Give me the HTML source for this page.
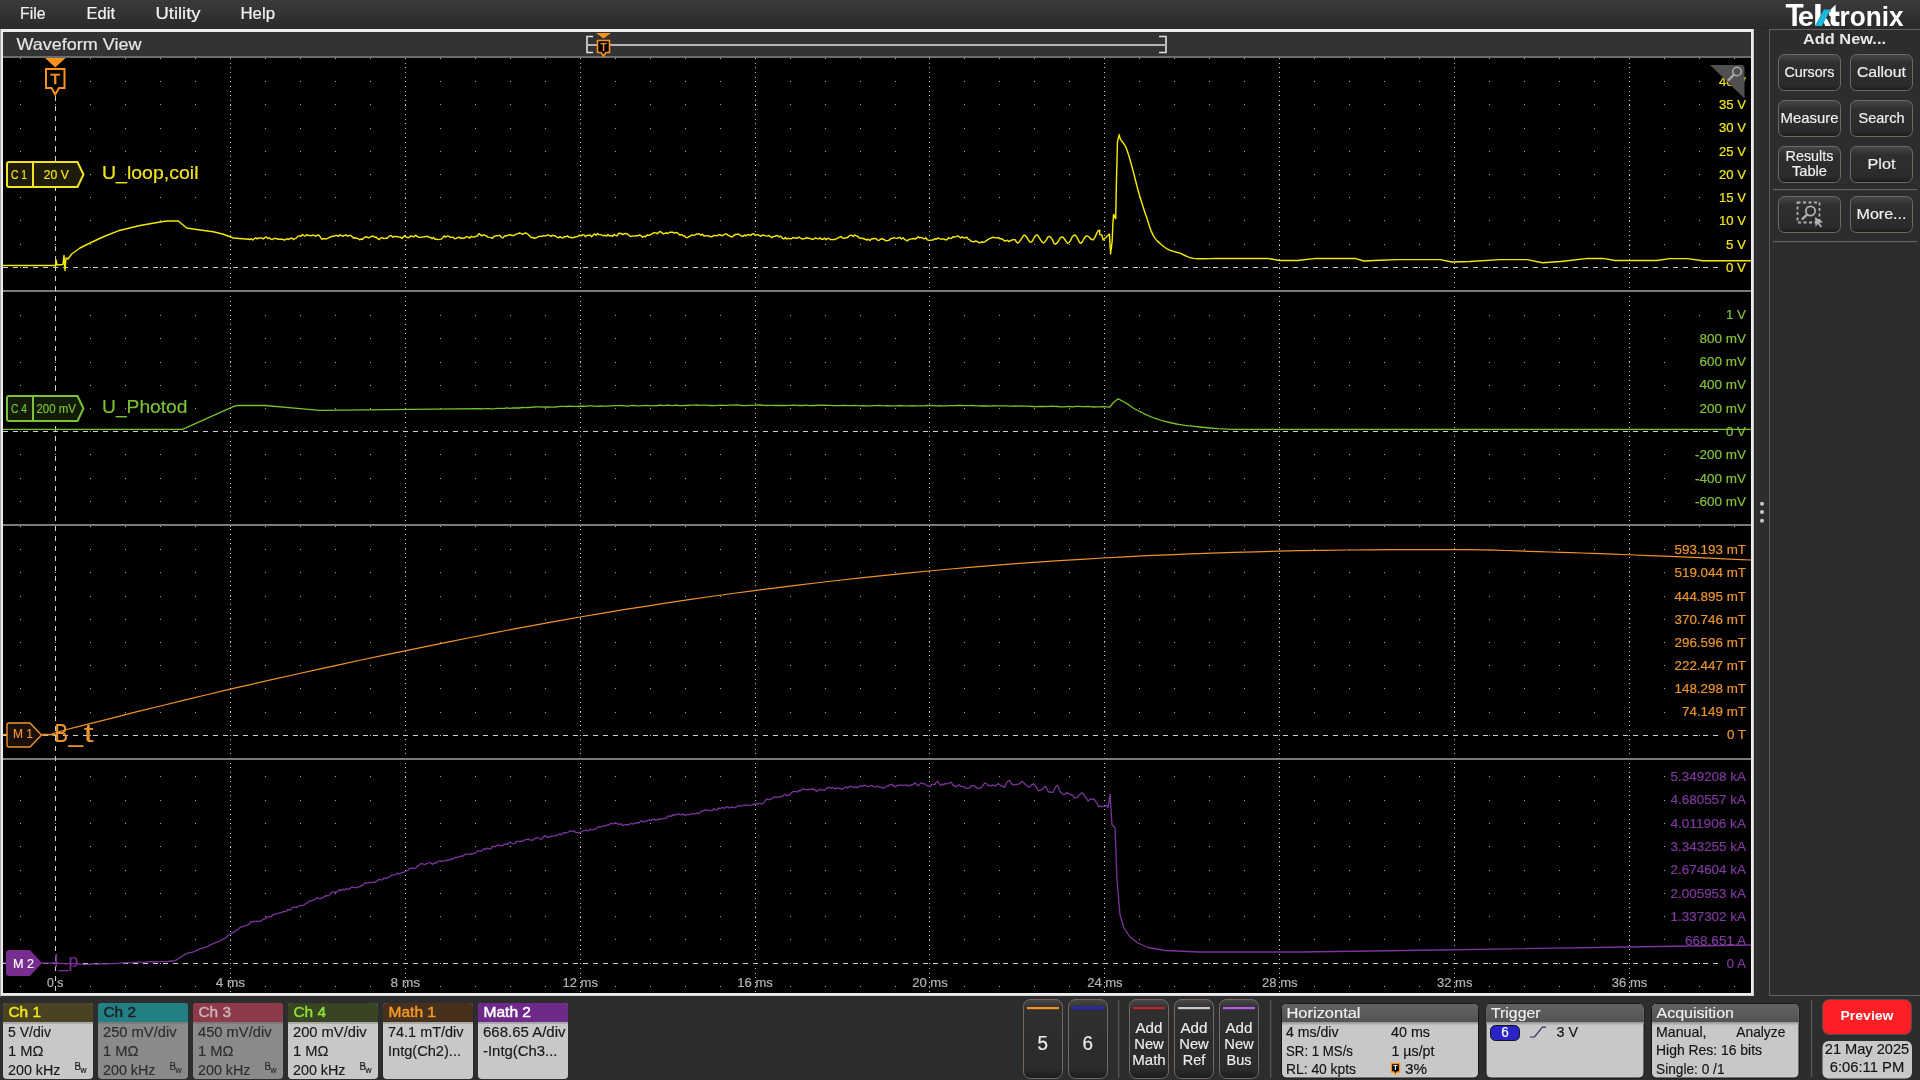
<!DOCTYPE html>
<html><head><meta charset="utf-8"><title>Waveform View</title>
<style>html,body{margin:0;padding:0;background:#2d2d2d;width:1920px;height:1080px;overflow:hidden}svg{display:block;will-change:transform}text{font-family:"Liberation Sans", sans-serif}</style>
</head><body>
<svg width="1920" height="1080" viewBox="0 0 1920 1080" font-family='"Liberation Sans", sans-serif'><rect x="0" y="0" width="1920" height="1080" fill="#2d2d2d"/>
<defs><linearGradient id="mb" x1="0" y1="0" x2="0" y2="1"><stop offset="0" stop-color="#3a3a3a"/><stop offset="1" stop-color="#2a2a2a"/></linearGradient><linearGradient id="btn" x1="0" y1="0" x2="0" y2="1"><stop offset="0" stop-color="#454547"/><stop offset="0.25" stop-color="#2f2f2f"/><stop offset="0.85" stop-color="#2b2b2b"/><stop offset="1" stop-color="#1c1c1c"/></linearGradient><linearGradient id="tbtn" x1="0" y1="0" x2="0" y2="1"><stop offset="0" stop-color="#48484a"/><stop offset="0.12" stop-color="#2f2f2f"/><stop offset="0.88" stop-color="#2b2b2b"/><stop offset="1" stop-color="#1c1c1c"/></linearGradient><linearGradient id="hdr" x1="0" y1="0" x2="0" y2="1"><stop offset="0" stop-color="#626264"/><stop offset="1" stop-color="#535355"/></linearGradient></defs>
<rect x="0" y="0" width="1920" height="29" fill="url(#mb)"/>
<text x="20" y="19" font-size="16" fill="#f2f2f2" text-anchor="start" font-weight="normal" textLength="25.5" lengthAdjust="spacingAndGlyphs" stroke="#f2f2f2" stroke-width="0.18">File</text>
<text x="86.5" y="19" font-size="16" fill="#f2f2f2" text-anchor="start" font-weight="normal" textLength="28.5" lengthAdjust="spacingAndGlyphs" stroke="#f2f2f2" stroke-width="0.18">Edit</text>
<text x="155.5" y="19" font-size="16" fill="#f2f2f2" text-anchor="start" font-weight="normal" textLength="45" lengthAdjust="spacingAndGlyphs" stroke="#f2f2f2" stroke-width="0.18">Utility</text>
<text x="240.5" y="19" font-size="16" fill="#f2f2f2" text-anchor="start" font-weight="normal" textLength="34.5" lengthAdjust="spacingAndGlyphs" stroke="#f2f2f2" stroke-width="0.18">Help</text>
<rect x="0" y="29" width="1754" height="967" fill="#ececec"/>
<rect x="1753" y="29" width="1" height="967" fill="#c4c4c8"/>
<rect x="0" y="995" width="1754" height="1" fill="#d4d4d4"/>
<rect x="0" y="29" width="1" height="967.5" fill="#a8a8a8"/>
<rect x="3" y="32" width="1748" height="24" fill="#333333"/>
<rect x="3" y="56" width="1748" height="2" fill="#6b6d70"/>
<rect x="3" y="58" width="1748" height="935" fill="#000000"/>
<text x="16.5" y="50" font-size="16.5" fill="#e6e6e6" text-anchor="start" font-weight="normal" textLength="125" lengthAdjust="spacingAndGlyphs" stroke="#e6e6e6" stroke-width="0.18">Waveform View</text>
<path d="M593 36.5 H587 V52.5 H593" fill="none" stroke="#e0e0e0" stroke-width="1.6"/>
<path d="M1159 36.5 H1166 V52.5 H1159" fill="none" stroke="#e0e0e0" stroke-width="1.6"/>
<rect x="588" y="44" width="578" height="2" fill="#b4b4b4"/>
<path d="M596 33 H611 L603.5 38.5 Z" fill="#f7921e"/>
<path d="M597.5 40.5 H609.5 V52.5 H606 L603.5 56 L601 52.5 H597.5 Z" fill="#000" stroke="#f7921e" stroke-width="1.6"/>
<text x="603.5" y="50.5" font-size="10" fill="#f7921e" text-anchor="middle" font-weight="bold">T</text>
<path d="M20 58h1v1h-1zM55 58h1v1h-1zM90 58h1v1h-1zM125 58h1v1h-1zM160 58h1v1h-1zM195 58h1v1h-1zM230 58h1v1h-1zM265 58h1v1h-1zM300 58h1v1h-1zM335 58h1v1h-1zM370 58h1v1h-1zM405 58h1v1h-1zM440 58h1v1h-1zM475 58h1v1h-1zM510 58h1v1h-1zM545 58h1v1h-1zM580 58h1v1h-1zM615 58h1v1h-1zM650 58h1v1h-1zM685 58h1v1h-1zM720 58h1v1h-1zM755 58h1v1h-1zM790 58h1v1h-1zM825 58h1v1h-1zM860 58h1v1h-1zM895 58h1v1h-1zM929 58h1v1h-1zM964 58h1v1h-1zM999 58h1v1h-1zM1034 58h1v1h-1zM1069 58h1v1h-1zM1104 58h1v1h-1zM1139 58h1v1h-1zM1174 58h1v1h-1zM1209 58h1v1h-1zM1244 58h1v1h-1zM1279 58h1v1h-1zM1314 58h1v1h-1zM1349 58h1v1h-1zM1384 58h1v1h-1zM1419 58h1v1h-1zM1454 58h1v1h-1zM1489 58h1v1h-1zM1524 58h1v1h-1zM1559 58h1v1h-1zM1594 58h1v1h-1zM1629 58h1v1h-1zM1664 58h1v1h-1zM1699 58h1v1h-1zM1734 58h1v1h-1zM20 81h1v1h-1zM55 81h1v1h-1zM90 81h1v1h-1zM125 81h1v1h-1zM160 81h1v1h-1zM195 81h1v1h-1zM230 81h1v1h-1zM265 81h1v1h-1zM300 81h1v1h-1zM335 81h1v1h-1zM370 81h1v1h-1zM405 81h1v1h-1zM440 81h1v1h-1zM475 81h1v1h-1zM510 81h1v1h-1zM545 81h1v1h-1zM580 81h1v1h-1zM615 81h1v1h-1zM650 81h1v1h-1zM685 81h1v1h-1zM720 81h1v1h-1zM755 81h1v1h-1zM790 81h1v1h-1zM825 81h1v1h-1zM860 81h1v1h-1zM895 81h1v1h-1zM929 81h1v1h-1zM964 81h1v1h-1zM999 81h1v1h-1zM1034 81h1v1h-1zM1069 81h1v1h-1zM1104 81h1v1h-1zM1139 81h1v1h-1zM1174 81h1v1h-1zM1209 81h1v1h-1zM1244 81h1v1h-1zM1279 81h1v1h-1zM1314 81h1v1h-1zM1349 81h1v1h-1zM1384 81h1v1h-1zM1419 81h1v1h-1zM1454 81h1v1h-1zM1489 81h1v1h-1zM1524 81h1v1h-1zM1559 81h1v1h-1zM1594 81h1v1h-1zM1629 81h1v1h-1zM1664 81h1v1h-1zM1699 81h1v1h-1zM20 104h1v1h-1zM55 104h1v1h-1zM90 104h1v1h-1zM125 104h1v1h-1zM160 104h1v1h-1zM195 104h1v1h-1zM230 104h1v1h-1zM265 104h1v1h-1zM300 104h1v1h-1zM335 104h1v1h-1zM370 104h1v1h-1zM405 104h1v1h-1zM440 104h1v1h-1zM475 104h1v1h-1zM510 104h1v1h-1zM545 104h1v1h-1zM580 104h1v1h-1zM615 104h1v1h-1zM650 104h1v1h-1zM685 104h1v1h-1zM720 104h1v1h-1zM755 104h1v1h-1zM790 104h1v1h-1zM825 104h1v1h-1zM860 104h1v1h-1zM895 104h1v1h-1zM929 104h1v1h-1zM964 104h1v1h-1zM999 104h1v1h-1zM1034 104h1v1h-1zM1069 104h1v1h-1zM1104 104h1v1h-1zM1139 104h1v1h-1zM1174 104h1v1h-1zM1209 104h1v1h-1zM1244 104h1v1h-1zM1279 104h1v1h-1zM1314 104h1v1h-1zM1349 104h1v1h-1zM1384 104h1v1h-1zM1419 104h1v1h-1zM1454 104h1v1h-1zM1489 104h1v1h-1zM1524 104h1v1h-1zM1559 104h1v1h-1zM1594 104h1v1h-1zM1629 104h1v1h-1zM1664 104h1v1h-1zM1699 104h1v1h-1zM20 128h1v1h-1zM55 128h1v1h-1zM90 128h1v1h-1zM125 128h1v1h-1zM160 128h1v1h-1zM195 128h1v1h-1zM230 128h1v1h-1zM265 128h1v1h-1zM300 128h1v1h-1zM335 128h1v1h-1zM370 128h1v1h-1zM405 128h1v1h-1zM440 128h1v1h-1zM475 128h1v1h-1zM510 128h1v1h-1zM545 128h1v1h-1zM580 128h1v1h-1zM615 128h1v1h-1zM650 128h1v1h-1zM685 128h1v1h-1zM720 128h1v1h-1zM755 128h1v1h-1zM790 128h1v1h-1zM825 128h1v1h-1zM860 128h1v1h-1zM895 128h1v1h-1zM929 128h1v1h-1zM964 128h1v1h-1zM999 128h1v1h-1zM1034 128h1v1h-1zM1069 128h1v1h-1zM1104 128h1v1h-1zM1139 128h1v1h-1zM1174 128h1v1h-1zM1209 128h1v1h-1zM1244 128h1v1h-1zM1279 128h1v1h-1zM1314 128h1v1h-1zM1349 128h1v1h-1zM1384 128h1v1h-1zM1419 128h1v1h-1zM1454 128h1v1h-1zM1489 128h1v1h-1zM1524 128h1v1h-1zM1559 128h1v1h-1zM1594 128h1v1h-1zM1629 128h1v1h-1zM1664 128h1v1h-1zM1699 128h1v1h-1zM20 151h1v1h-1zM55 151h1v1h-1zM90 151h1v1h-1zM125 151h1v1h-1zM160 151h1v1h-1zM195 151h1v1h-1zM230 151h1v1h-1zM265 151h1v1h-1zM300 151h1v1h-1zM335 151h1v1h-1zM370 151h1v1h-1zM405 151h1v1h-1zM440 151h1v1h-1zM475 151h1v1h-1zM510 151h1v1h-1zM545 151h1v1h-1zM580 151h1v1h-1zM615 151h1v1h-1zM650 151h1v1h-1zM685 151h1v1h-1zM720 151h1v1h-1zM755 151h1v1h-1zM790 151h1v1h-1zM825 151h1v1h-1zM860 151h1v1h-1zM895 151h1v1h-1zM929 151h1v1h-1zM964 151h1v1h-1zM999 151h1v1h-1zM1034 151h1v1h-1zM1069 151h1v1h-1zM1104 151h1v1h-1zM1139 151h1v1h-1zM1174 151h1v1h-1zM1209 151h1v1h-1zM1244 151h1v1h-1zM1279 151h1v1h-1zM1314 151h1v1h-1zM1349 151h1v1h-1zM1384 151h1v1h-1zM1419 151h1v1h-1zM1454 151h1v1h-1zM1489 151h1v1h-1zM1524 151h1v1h-1zM1559 151h1v1h-1zM1594 151h1v1h-1zM1629 151h1v1h-1zM1664 151h1v1h-1zM1699 151h1v1h-1zM20 174h1v1h-1zM55 174h1v1h-1zM90 174h1v1h-1zM125 174h1v1h-1zM160 174h1v1h-1zM195 174h1v1h-1zM230 174h1v1h-1zM265 174h1v1h-1zM300 174h1v1h-1zM335 174h1v1h-1zM370 174h1v1h-1zM405 174h1v1h-1zM440 174h1v1h-1zM475 174h1v1h-1zM510 174h1v1h-1zM545 174h1v1h-1zM580 174h1v1h-1zM615 174h1v1h-1zM650 174h1v1h-1zM685 174h1v1h-1zM720 174h1v1h-1zM755 174h1v1h-1zM790 174h1v1h-1zM825 174h1v1h-1zM860 174h1v1h-1zM895 174h1v1h-1zM929 174h1v1h-1zM964 174h1v1h-1zM999 174h1v1h-1zM1034 174h1v1h-1zM1069 174h1v1h-1zM1104 174h1v1h-1zM1139 174h1v1h-1zM1174 174h1v1h-1zM1209 174h1v1h-1zM1244 174h1v1h-1zM1279 174h1v1h-1zM1314 174h1v1h-1zM1349 174h1v1h-1zM1384 174h1v1h-1zM1419 174h1v1h-1zM1454 174h1v1h-1zM1489 174h1v1h-1zM1524 174h1v1h-1zM1559 174h1v1h-1zM1594 174h1v1h-1zM1629 174h1v1h-1zM1664 174h1v1h-1zM1699 174h1v1h-1zM20 197h1v1h-1zM55 197h1v1h-1zM90 197h1v1h-1zM125 197h1v1h-1zM160 197h1v1h-1zM195 197h1v1h-1zM230 197h1v1h-1zM265 197h1v1h-1zM300 197h1v1h-1zM335 197h1v1h-1zM370 197h1v1h-1zM405 197h1v1h-1zM440 197h1v1h-1zM475 197h1v1h-1zM510 197h1v1h-1zM545 197h1v1h-1zM580 197h1v1h-1zM615 197h1v1h-1zM650 197h1v1h-1zM685 197h1v1h-1zM720 197h1v1h-1zM755 197h1v1h-1zM790 197h1v1h-1zM825 197h1v1h-1zM860 197h1v1h-1zM895 197h1v1h-1zM929 197h1v1h-1zM964 197h1v1h-1zM999 197h1v1h-1zM1034 197h1v1h-1zM1069 197h1v1h-1zM1104 197h1v1h-1zM1139 197h1v1h-1zM1174 197h1v1h-1zM1209 197h1v1h-1zM1244 197h1v1h-1zM1279 197h1v1h-1zM1314 197h1v1h-1zM1349 197h1v1h-1zM1384 197h1v1h-1zM1419 197h1v1h-1zM1454 197h1v1h-1zM1489 197h1v1h-1zM1524 197h1v1h-1zM1559 197h1v1h-1zM1594 197h1v1h-1zM1629 197h1v1h-1zM1664 197h1v1h-1zM1699 197h1v1h-1zM20 220h1v1h-1zM55 220h1v1h-1zM90 220h1v1h-1zM125 220h1v1h-1zM160 220h1v1h-1zM195 220h1v1h-1zM230 220h1v1h-1zM265 220h1v1h-1zM300 220h1v1h-1zM335 220h1v1h-1zM370 220h1v1h-1zM405 220h1v1h-1zM440 220h1v1h-1zM475 220h1v1h-1zM510 220h1v1h-1zM545 220h1v1h-1zM580 220h1v1h-1zM615 220h1v1h-1zM650 220h1v1h-1zM685 220h1v1h-1zM720 220h1v1h-1zM755 220h1v1h-1zM790 220h1v1h-1zM825 220h1v1h-1zM860 220h1v1h-1zM895 220h1v1h-1zM929 220h1v1h-1zM964 220h1v1h-1zM999 220h1v1h-1zM1034 220h1v1h-1zM1069 220h1v1h-1zM1104 220h1v1h-1zM1139 220h1v1h-1zM1174 220h1v1h-1zM1209 220h1v1h-1zM1244 220h1v1h-1zM1279 220h1v1h-1zM1314 220h1v1h-1zM1349 220h1v1h-1zM1384 220h1v1h-1zM1419 220h1v1h-1zM1454 220h1v1h-1zM1489 220h1v1h-1zM1524 220h1v1h-1zM1559 220h1v1h-1zM1594 220h1v1h-1zM1629 220h1v1h-1zM1664 220h1v1h-1zM1699 220h1v1h-1zM20 244h1v1h-1zM55 244h1v1h-1zM90 244h1v1h-1zM125 244h1v1h-1zM160 244h1v1h-1zM195 244h1v1h-1zM230 244h1v1h-1zM265 244h1v1h-1zM300 244h1v1h-1zM335 244h1v1h-1zM370 244h1v1h-1zM405 244h1v1h-1zM440 244h1v1h-1zM475 244h1v1h-1zM510 244h1v1h-1zM545 244h1v1h-1zM580 244h1v1h-1zM615 244h1v1h-1zM650 244h1v1h-1zM685 244h1v1h-1zM720 244h1v1h-1zM755 244h1v1h-1zM790 244h1v1h-1zM825 244h1v1h-1zM860 244h1v1h-1zM895 244h1v1h-1zM929 244h1v1h-1zM964 244h1v1h-1zM999 244h1v1h-1zM1034 244h1v1h-1zM1069 244h1v1h-1zM1104 244h1v1h-1zM1139 244h1v1h-1zM1174 244h1v1h-1zM1209 244h1v1h-1zM1244 244h1v1h-1zM1279 244h1v1h-1zM1314 244h1v1h-1zM1349 244h1v1h-1zM1384 244h1v1h-1zM1419 244h1v1h-1zM1454 244h1v1h-1zM1489 244h1v1h-1zM1524 244h1v1h-1zM1559 244h1v1h-1zM1594 244h1v1h-1zM1629 244h1v1h-1zM1664 244h1v1h-1zM1699 244h1v1h-1zM20 267h1v1h-1zM55 267h1v1h-1zM90 267h1v1h-1zM125 267h1v1h-1zM160 267h1v1h-1zM195 267h1v1h-1zM230 267h1v1h-1zM265 267h1v1h-1zM300 267h1v1h-1zM335 267h1v1h-1zM370 267h1v1h-1zM405 267h1v1h-1zM440 267h1v1h-1zM475 267h1v1h-1zM510 267h1v1h-1zM545 267h1v1h-1zM580 267h1v1h-1zM615 267h1v1h-1zM650 267h1v1h-1zM685 267h1v1h-1zM720 267h1v1h-1zM755 267h1v1h-1zM790 267h1v1h-1zM825 267h1v1h-1zM860 267h1v1h-1zM895 267h1v1h-1zM929 267h1v1h-1zM964 267h1v1h-1zM999 267h1v1h-1zM1034 267h1v1h-1zM1069 267h1v1h-1zM1104 267h1v1h-1zM1139 267h1v1h-1zM1174 267h1v1h-1zM1209 267h1v1h-1zM1244 267h1v1h-1zM1279 267h1v1h-1zM1314 267h1v1h-1zM1349 267h1v1h-1zM1384 267h1v1h-1zM1419 267h1v1h-1zM1454 267h1v1h-1zM1489 267h1v1h-1zM1524 267h1v1h-1zM1559 267h1v1h-1zM1594 267h1v1h-1zM1629 267h1v1h-1zM1664 267h1v1h-1zM1699 267h1v1h-1zM20 291h1v1h-1zM55 291h1v1h-1zM90 291h1v1h-1zM125 291h1v1h-1zM160 291h1v1h-1zM195 291h1v1h-1zM230 291h1v1h-1zM265 291h1v1h-1zM300 291h1v1h-1zM335 291h1v1h-1zM370 291h1v1h-1zM405 291h1v1h-1zM440 291h1v1h-1zM475 291h1v1h-1zM510 291h1v1h-1zM545 291h1v1h-1zM580 291h1v1h-1zM615 291h1v1h-1zM650 291h1v1h-1zM685 291h1v1h-1zM720 291h1v1h-1zM755 291h1v1h-1zM790 291h1v1h-1zM825 291h1v1h-1zM860 291h1v1h-1zM895 291h1v1h-1zM929 291h1v1h-1zM964 291h1v1h-1zM999 291h1v1h-1zM1034 291h1v1h-1zM1069 291h1v1h-1zM1104 291h1v1h-1zM1139 291h1v1h-1zM1174 291h1v1h-1zM1209 291h1v1h-1zM1244 291h1v1h-1zM1279 291h1v1h-1zM1314 291h1v1h-1zM1349 291h1v1h-1zM1384 291h1v1h-1zM1419 291h1v1h-1zM1454 291h1v1h-1zM1489 291h1v1h-1zM1524 291h1v1h-1zM1559 291h1v1h-1zM1594 291h1v1h-1zM1629 291h1v1h-1zM1664 291h1v1h-1zM1699 291h1v1h-1zM1734 291h1v1h-1zM20 315h1v1h-1zM55 315h1v1h-1zM90 315h1v1h-1zM125 315h1v1h-1zM160 315h1v1h-1zM195 315h1v1h-1zM230 315h1v1h-1zM265 315h1v1h-1zM300 315h1v1h-1zM335 315h1v1h-1zM370 315h1v1h-1zM405 315h1v1h-1zM440 315h1v1h-1zM475 315h1v1h-1zM510 315h1v1h-1zM545 315h1v1h-1zM580 315h1v1h-1zM615 315h1v1h-1zM650 315h1v1h-1zM685 315h1v1h-1zM720 315h1v1h-1zM755 315h1v1h-1zM790 315h1v1h-1zM825 315h1v1h-1zM860 315h1v1h-1zM895 315h1v1h-1zM929 315h1v1h-1zM964 315h1v1h-1zM999 315h1v1h-1zM1034 315h1v1h-1zM1069 315h1v1h-1zM1104 315h1v1h-1zM1139 315h1v1h-1zM1174 315h1v1h-1zM1209 315h1v1h-1zM1244 315h1v1h-1zM1279 315h1v1h-1zM1314 315h1v1h-1zM1349 315h1v1h-1zM1384 315h1v1h-1zM1419 315h1v1h-1zM1454 315h1v1h-1zM1489 315h1v1h-1zM1524 315h1v1h-1zM1559 315h1v1h-1zM1594 315h1v1h-1zM1629 315h1v1h-1zM1664 315h1v1h-1zM1699 315h1v1h-1zM20 338h1v1h-1zM55 338h1v1h-1zM90 338h1v1h-1zM125 338h1v1h-1zM160 338h1v1h-1zM195 338h1v1h-1zM230 338h1v1h-1zM265 338h1v1h-1zM300 338h1v1h-1zM335 338h1v1h-1zM370 338h1v1h-1zM405 338h1v1h-1zM440 338h1v1h-1zM475 338h1v1h-1zM510 338h1v1h-1zM545 338h1v1h-1zM580 338h1v1h-1zM615 338h1v1h-1zM650 338h1v1h-1zM685 338h1v1h-1zM720 338h1v1h-1zM755 338h1v1h-1zM790 338h1v1h-1zM825 338h1v1h-1zM860 338h1v1h-1zM895 338h1v1h-1zM929 338h1v1h-1zM964 338h1v1h-1zM999 338h1v1h-1zM1034 338h1v1h-1zM1069 338h1v1h-1zM1104 338h1v1h-1zM1139 338h1v1h-1zM1174 338h1v1h-1zM1209 338h1v1h-1zM1244 338h1v1h-1zM1279 338h1v1h-1zM1314 338h1v1h-1zM1349 338h1v1h-1zM1384 338h1v1h-1zM1419 338h1v1h-1zM1454 338h1v1h-1zM1489 338h1v1h-1zM1524 338h1v1h-1zM1559 338h1v1h-1zM1594 338h1v1h-1zM1629 338h1v1h-1zM1664 338h1v1h-1zM20 362h1v1h-1zM55 362h1v1h-1zM90 362h1v1h-1zM125 362h1v1h-1zM160 362h1v1h-1zM195 362h1v1h-1zM230 362h1v1h-1zM265 362h1v1h-1zM300 362h1v1h-1zM335 362h1v1h-1zM370 362h1v1h-1zM405 362h1v1h-1zM440 362h1v1h-1zM475 362h1v1h-1zM510 362h1v1h-1zM545 362h1v1h-1zM580 362h1v1h-1zM615 362h1v1h-1zM650 362h1v1h-1zM685 362h1v1h-1zM720 362h1v1h-1zM755 362h1v1h-1zM790 362h1v1h-1zM825 362h1v1h-1zM860 362h1v1h-1zM895 362h1v1h-1zM929 362h1v1h-1zM964 362h1v1h-1zM999 362h1v1h-1zM1034 362h1v1h-1zM1069 362h1v1h-1zM1104 362h1v1h-1zM1139 362h1v1h-1zM1174 362h1v1h-1zM1209 362h1v1h-1zM1244 362h1v1h-1zM1279 362h1v1h-1zM1314 362h1v1h-1zM1349 362h1v1h-1zM1384 362h1v1h-1zM1419 362h1v1h-1zM1454 362h1v1h-1zM1489 362h1v1h-1zM1524 362h1v1h-1zM1559 362h1v1h-1zM1594 362h1v1h-1zM1629 362h1v1h-1zM1664 362h1v1h-1zM20 385h1v1h-1zM55 385h1v1h-1zM90 385h1v1h-1zM125 385h1v1h-1zM160 385h1v1h-1zM195 385h1v1h-1zM230 385h1v1h-1zM265 385h1v1h-1zM300 385h1v1h-1zM335 385h1v1h-1zM370 385h1v1h-1zM405 385h1v1h-1zM440 385h1v1h-1zM475 385h1v1h-1zM510 385h1v1h-1zM545 385h1v1h-1zM580 385h1v1h-1zM615 385h1v1h-1zM650 385h1v1h-1zM685 385h1v1h-1zM720 385h1v1h-1zM755 385h1v1h-1zM790 385h1v1h-1zM825 385h1v1h-1zM860 385h1v1h-1zM895 385h1v1h-1zM929 385h1v1h-1zM964 385h1v1h-1zM999 385h1v1h-1zM1034 385h1v1h-1zM1069 385h1v1h-1zM1104 385h1v1h-1zM1139 385h1v1h-1zM1174 385h1v1h-1zM1209 385h1v1h-1zM1244 385h1v1h-1zM1279 385h1v1h-1zM1314 385h1v1h-1zM1349 385h1v1h-1zM1384 385h1v1h-1zM1419 385h1v1h-1zM1454 385h1v1h-1zM1489 385h1v1h-1zM1524 385h1v1h-1zM1559 385h1v1h-1zM1594 385h1v1h-1zM1629 385h1v1h-1zM1664 385h1v1h-1zM20 408h1v1h-1zM55 408h1v1h-1zM90 408h1v1h-1zM125 408h1v1h-1zM160 408h1v1h-1zM195 408h1v1h-1zM230 408h1v1h-1zM265 408h1v1h-1zM300 408h1v1h-1zM335 408h1v1h-1zM370 408h1v1h-1zM405 408h1v1h-1zM440 408h1v1h-1zM475 408h1v1h-1zM510 408h1v1h-1zM545 408h1v1h-1zM580 408h1v1h-1zM615 408h1v1h-1zM650 408h1v1h-1zM685 408h1v1h-1zM720 408h1v1h-1zM755 408h1v1h-1zM790 408h1v1h-1zM825 408h1v1h-1zM860 408h1v1h-1zM895 408h1v1h-1zM929 408h1v1h-1zM964 408h1v1h-1zM999 408h1v1h-1zM1034 408h1v1h-1zM1069 408h1v1h-1zM1104 408h1v1h-1zM1139 408h1v1h-1zM1174 408h1v1h-1zM1209 408h1v1h-1zM1244 408h1v1h-1zM1279 408h1v1h-1zM1314 408h1v1h-1zM1349 408h1v1h-1zM1384 408h1v1h-1zM1419 408h1v1h-1zM1454 408h1v1h-1zM1489 408h1v1h-1zM1524 408h1v1h-1zM1559 408h1v1h-1zM1594 408h1v1h-1zM1629 408h1v1h-1zM1664 408h1v1h-1zM20 431h1v1h-1zM55 431h1v1h-1zM90 431h1v1h-1zM125 431h1v1h-1zM160 431h1v1h-1zM195 431h1v1h-1zM230 431h1v1h-1zM265 431h1v1h-1zM300 431h1v1h-1zM335 431h1v1h-1zM370 431h1v1h-1zM405 431h1v1h-1zM440 431h1v1h-1zM475 431h1v1h-1zM510 431h1v1h-1zM545 431h1v1h-1zM580 431h1v1h-1zM615 431h1v1h-1zM650 431h1v1h-1zM685 431h1v1h-1zM720 431h1v1h-1zM755 431h1v1h-1zM790 431h1v1h-1zM825 431h1v1h-1zM860 431h1v1h-1zM895 431h1v1h-1zM929 431h1v1h-1zM964 431h1v1h-1zM999 431h1v1h-1zM1034 431h1v1h-1zM1069 431h1v1h-1zM1104 431h1v1h-1zM1139 431h1v1h-1zM1174 431h1v1h-1zM1209 431h1v1h-1zM1244 431h1v1h-1zM1279 431h1v1h-1zM1314 431h1v1h-1zM1349 431h1v1h-1zM1384 431h1v1h-1zM1419 431h1v1h-1zM1454 431h1v1h-1zM1489 431h1v1h-1zM1524 431h1v1h-1zM1559 431h1v1h-1zM1594 431h1v1h-1zM1629 431h1v1h-1zM1664 431h1v1h-1zM1699 431h1v1h-1zM20 454h1v1h-1zM55 454h1v1h-1zM90 454h1v1h-1zM125 454h1v1h-1zM160 454h1v1h-1zM195 454h1v1h-1zM230 454h1v1h-1zM265 454h1v1h-1zM300 454h1v1h-1zM335 454h1v1h-1zM370 454h1v1h-1zM405 454h1v1h-1zM440 454h1v1h-1zM475 454h1v1h-1zM510 454h1v1h-1zM545 454h1v1h-1zM580 454h1v1h-1zM615 454h1v1h-1zM650 454h1v1h-1zM685 454h1v1h-1zM720 454h1v1h-1zM755 454h1v1h-1zM790 454h1v1h-1zM825 454h1v1h-1zM860 454h1v1h-1zM895 454h1v1h-1zM929 454h1v1h-1zM964 454h1v1h-1zM999 454h1v1h-1zM1034 454h1v1h-1zM1069 454h1v1h-1zM1104 454h1v1h-1zM1139 454h1v1h-1zM1174 454h1v1h-1zM1209 454h1v1h-1zM1244 454h1v1h-1zM1279 454h1v1h-1zM1314 454h1v1h-1zM1349 454h1v1h-1zM1384 454h1v1h-1zM1419 454h1v1h-1zM1454 454h1v1h-1zM1489 454h1v1h-1zM1524 454h1v1h-1zM1559 454h1v1h-1zM1594 454h1v1h-1zM1629 454h1v1h-1zM1664 454h1v1h-1zM20 478h1v1h-1zM55 478h1v1h-1zM90 478h1v1h-1zM125 478h1v1h-1zM160 478h1v1h-1zM195 478h1v1h-1zM230 478h1v1h-1zM265 478h1v1h-1zM300 478h1v1h-1zM335 478h1v1h-1zM370 478h1v1h-1zM405 478h1v1h-1zM440 478h1v1h-1zM475 478h1v1h-1zM510 478h1v1h-1zM545 478h1v1h-1zM580 478h1v1h-1zM615 478h1v1h-1zM650 478h1v1h-1zM685 478h1v1h-1zM720 478h1v1h-1zM755 478h1v1h-1zM790 478h1v1h-1zM825 478h1v1h-1zM860 478h1v1h-1zM895 478h1v1h-1zM929 478h1v1h-1zM964 478h1v1h-1zM999 478h1v1h-1zM1034 478h1v1h-1zM1069 478h1v1h-1zM1104 478h1v1h-1zM1139 478h1v1h-1zM1174 478h1v1h-1zM1209 478h1v1h-1zM1244 478h1v1h-1zM1279 478h1v1h-1zM1314 478h1v1h-1zM1349 478h1v1h-1zM1384 478h1v1h-1zM1419 478h1v1h-1zM1454 478h1v1h-1zM1489 478h1v1h-1zM1524 478h1v1h-1zM1559 478h1v1h-1zM1594 478h1v1h-1zM1629 478h1v1h-1zM1664 478h1v1h-1zM20 501h1v1h-1zM55 501h1v1h-1zM90 501h1v1h-1zM125 501h1v1h-1zM160 501h1v1h-1zM195 501h1v1h-1zM230 501h1v1h-1zM265 501h1v1h-1zM300 501h1v1h-1zM335 501h1v1h-1zM370 501h1v1h-1zM405 501h1v1h-1zM440 501h1v1h-1zM475 501h1v1h-1zM510 501h1v1h-1zM545 501h1v1h-1zM580 501h1v1h-1zM615 501h1v1h-1zM650 501h1v1h-1zM685 501h1v1h-1zM720 501h1v1h-1zM755 501h1v1h-1zM790 501h1v1h-1zM825 501h1v1h-1zM860 501h1v1h-1zM895 501h1v1h-1zM929 501h1v1h-1zM964 501h1v1h-1zM999 501h1v1h-1zM1034 501h1v1h-1zM1069 501h1v1h-1zM1104 501h1v1h-1zM1139 501h1v1h-1zM1174 501h1v1h-1zM1209 501h1v1h-1zM1244 501h1v1h-1zM1279 501h1v1h-1zM1314 501h1v1h-1zM1349 501h1v1h-1zM1384 501h1v1h-1zM1419 501h1v1h-1zM1454 501h1v1h-1zM1489 501h1v1h-1zM1524 501h1v1h-1zM1559 501h1v1h-1zM1594 501h1v1h-1zM1629 501h1v1h-1zM1664 501h1v1h-1zM20 526h1v1h-1zM55 526h1v1h-1zM90 526h1v1h-1zM125 526h1v1h-1zM160 526h1v1h-1zM195 526h1v1h-1zM230 526h1v1h-1zM265 526h1v1h-1zM300 526h1v1h-1zM335 526h1v1h-1zM370 526h1v1h-1zM405 526h1v1h-1zM440 526h1v1h-1zM475 526h1v1h-1zM510 526h1v1h-1zM545 526h1v1h-1zM580 526h1v1h-1zM615 526h1v1h-1zM650 526h1v1h-1zM685 526h1v1h-1zM720 526h1v1h-1zM755 526h1v1h-1zM790 526h1v1h-1zM825 526h1v1h-1zM860 526h1v1h-1zM895 526h1v1h-1zM929 526h1v1h-1zM964 526h1v1h-1zM999 526h1v1h-1zM1034 526h1v1h-1zM1069 526h1v1h-1zM1104 526h1v1h-1zM1139 526h1v1h-1zM1174 526h1v1h-1zM1209 526h1v1h-1zM1244 526h1v1h-1zM1279 526h1v1h-1zM1314 526h1v1h-1zM1349 526h1v1h-1zM1384 526h1v1h-1zM1419 526h1v1h-1zM1454 526h1v1h-1zM1489 526h1v1h-1zM1524 526h1v1h-1zM1559 526h1v1h-1zM1594 526h1v1h-1zM1629 526h1v1h-1zM1664 526h1v1h-1zM1699 526h1v1h-1zM1734 526h1v1h-1zM20 549h1v1h-1zM55 549h1v1h-1zM90 549h1v1h-1zM125 549h1v1h-1zM160 549h1v1h-1zM195 549h1v1h-1zM230 549h1v1h-1zM265 549h1v1h-1zM300 549h1v1h-1zM335 549h1v1h-1zM370 549h1v1h-1zM405 549h1v1h-1zM440 549h1v1h-1zM475 549h1v1h-1zM510 549h1v1h-1zM545 549h1v1h-1zM580 549h1v1h-1zM615 549h1v1h-1zM650 549h1v1h-1zM685 549h1v1h-1zM720 549h1v1h-1zM755 549h1v1h-1zM790 549h1v1h-1zM825 549h1v1h-1zM860 549h1v1h-1zM895 549h1v1h-1zM929 549h1v1h-1zM964 549h1v1h-1zM999 549h1v1h-1zM1034 549h1v1h-1zM1069 549h1v1h-1zM1104 549h1v1h-1zM1139 549h1v1h-1zM1174 549h1v1h-1zM1209 549h1v1h-1zM1244 549h1v1h-1zM1279 549h1v1h-1zM1314 549h1v1h-1zM1349 549h1v1h-1zM1384 549h1v1h-1zM1419 549h1v1h-1zM1454 549h1v1h-1zM1489 549h1v1h-1zM1524 549h1v1h-1zM1559 549h1v1h-1zM1594 549h1v1h-1zM1629 549h1v1h-1zM1664 549h1v1h-1zM20 572h1v1h-1zM55 572h1v1h-1zM90 572h1v1h-1zM125 572h1v1h-1zM160 572h1v1h-1zM195 572h1v1h-1zM230 572h1v1h-1zM265 572h1v1h-1zM300 572h1v1h-1zM335 572h1v1h-1zM370 572h1v1h-1zM405 572h1v1h-1zM440 572h1v1h-1zM475 572h1v1h-1zM510 572h1v1h-1zM545 572h1v1h-1zM580 572h1v1h-1zM615 572h1v1h-1zM650 572h1v1h-1zM685 572h1v1h-1zM720 572h1v1h-1zM755 572h1v1h-1zM790 572h1v1h-1zM825 572h1v1h-1zM860 572h1v1h-1zM895 572h1v1h-1zM929 572h1v1h-1zM964 572h1v1h-1zM999 572h1v1h-1zM1034 572h1v1h-1zM1069 572h1v1h-1zM1104 572h1v1h-1zM1139 572h1v1h-1zM1174 572h1v1h-1zM1209 572h1v1h-1zM1244 572h1v1h-1zM1279 572h1v1h-1zM1314 572h1v1h-1zM1349 572h1v1h-1zM1384 572h1v1h-1zM1419 572h1v1h-1zM1454 572h1v1h-1zM1489 572h1v1h-1zM1524 572h1v1h-1zM1559 572h1v1h-1zM1594 572h1v1h-1zM1629 572h1v1h-1zM1664 572h1v1h-1zM20 596h1v1h-1zM55 596h1v1h-1zM90 596h1v1h-1zM125 596h1v1h-1zM160 596h1v1h-1zM195 596h1v1h-1zM230 596h1v1h-1zM265 596h1v1h-1zM300 596h1v1h-1zM335 596h1v1h-1zM370 596h1v1h-1zM405 596h1v1h-1zM440 596h1v1h-1zM475 596h1v1h-1zM510 596h1v1h-1zM545 596h1v1h-1zM580 596h1v1h-1zM615 596h1v1h-1zM650 596h1v1h-1zM685 596h1v1h-1zM720 596h1v1h-1zM755 596h1v1h-1zM790 596h1v1h-1zM825 596h1v1h-1zM860 596h1v1h-1zM895 596h1v1h-1zM929 596h1v1h-1zM964 596h1v1h-1zM999 596h1v1h-1zM1034 596h1v1h-1zM1069 596h1v1h-1zM1104 596h1v1h-1zM1139 596h1v1h-1zM1174 596h1v1h-1zM1209 596h1v1h-1zM1244 596h1v1h-1zM1279 596h1v1h-1zM1314 596h1v1h-1zM1349 596h1v1h-1zM1384 596h1v1h-1zM1419 596h1v1h-1zM1454 596h1v1h-1zM1489 596h1v1h-1zM1524 596h1v1h-1zM1559 596h1v1h-1zM1594 596h1v1h-1zM1629 596h1v1h-1zM1664 596h1v1h-1zM20 619h1v1h-1zM55 619h1v1h-1zM90 619h1v1h-1zM125 619h1v1h-1zM160 619h1v1h-1zM195 619h1v1h-1zM230 619h1v1h-1zM265 619h1v1h-1zM300 619h1v1h-1zM335 619h1v1h-1zM370 619h1v1h-1zM405 619h1v1h-1zM440 619h1v1h-1zM475 619h1v1h-1zM510 619h1v1h-1zM545 619h1v1h-1zM580 619h1v1h-1zM615 619h1v1h-1zM650 619h1v1h-1zM685 619h1v1h-1zM720 619h1v1h-1zM755 619h1v1h-1zM790 619h1v1h-1zM825 619h1v1h-1zM860 619h1v1h-1zM895 619h1v1h-1zM929 619h1v1h-1zM964 619h1v1h-1zM999 619h1v1h-1zM1034 619h1v1h-1zM1069 619h1v1h-1zM1104 619h1v1h-1zM1139 619h1v1h-1zM1174 619h1v1h-1zM1209 619h1v1h-1zM1244 619h1v1h-1zM1279 619h1v1h-1zM1314 619h1v1h-1zM1349 619h1v1h-1zM1384 619h1v1h-1zM1419 619h1v1h-1zM1454 619h1v1h-1zM1489 619h1v1h-1zM1524 619h1v1h-1zM1559 619h1v1h-1zM1594 619h1v1h-1zM1629 619h1v1h-1zM1664 619h1v1h-1zM20 642h1v1h-1zM55 642h1v1h-1zM90 642h1v1h-1zM125 642h1v1h-1zM160 642h1v1h-1zM195 642h1v1h-1zM230 642h1v1h-1zM265 642h1v1h-1zM300 642h1v1h-1zM335 642h1v1h-1zM370 642h1v1h-1zM405 642h1v1h-1zM440 642h1v1h-1zM475 642h1v1h-1zM510 642h1v1h-1zM545 642h1v1h-1zM580 642h1v1h-1zM615 642h1v1h-1zM650 642h1v1h-1zM685 642h1v1h-1zM720 642h1v1h-1zM755 642h1v1h-1zM790 642h1v1h-1zM825 642h1v1h-1zM860 642h1v1h-1zM895 642h1v1h-1zM929 642h1v1h-1zM964 642h1v1h-1zM999 642h1v1h-1zM1034 642h1v1h-1zM1069 642h1v1h-1zM1104 642h1v1h-1zM1139 642h1v1h-1zM1174 642h1v1h-1zM1209 642h1v1h-1zM1244 642h1v1h-1zM1279 642h1v1h-1zM1314 642h1v1h-1zM1349 642h1v1h-1zM1384 642h1v1h-1zM1419 642h1v1h-1zM1454 642h1v1h-1zM1489 642h1v1h-1zM1524 642h1v1h-1zM1559 642h1v1h-1zM1594 642h1v1h-1zM1629 642h1v1h-1zM1664 642h1v1h-1zM20 665h1v1h-1zM55 665h1v1h-1zM90 665h1v1h-1zM125 665h1v1h-1zM160 665h1v1h-1zM195 665h1v1h-1zM230 665h1v1h-1zM265 665h1v1h-1zM300 665h1v1h-1zM335 665h1v1h-1zM370 665h1v1h-1zM405 665h1v1h-1zM440 665h1v1h-1zM475 665h1v1h-1zM510 665h1v1h-1zM545 665h1v1h-1zM580 665h1v1h-1zM615 665h1v1h-1zM650 665h1v1h-1zM685 665h1v1h-1zM720 665h1v1h-1zM755 665h1v1h-1zM790 665h1v1h-1zM825 665h1v1h-1zM860 665h1v1h-1zM895 665h1v1h-1zM929 665h1v1h-1zM964 665h1v1h-1zM999 665h1v1h-1zM1034 665h1v1h-1zM1069 665h1v1h-1zM1104 665h1v1h-1zM1139 665h1v1h-1zM1174 665h1v1h-1zM1209 665h1v1h-1zM1244 665h1v1h-1zM1279 665h1v1h-1zM1314 665h1v1h-1zM1349 665h1v1h-1zM1384 665h1v1h-1zM1419 665h1v1h-1zM1454 665h1v1h-1zM1489 665h1v1h-1zM1524 665h1v1h-1zM1559 665h1v1h-1zM1594 665h1v1h-1zM1629 665h1v1h-1zM1664 665h1v1h-1zM20 688h1v1h-1zM55 688h1v1h-1zM90 688h1v1h-1zM125 688h1v1h-1zM160 688h1v1h-1zM195 688h1v1h-1zM230 688h1v1h-1zM265 688h1v1h-1zM300 688h1v1h-1zM335 688h1v1h-1zM370 688h1v1h-1zM405 688h1v1h-1zM440 688h1v1h-1zM475 688h1v1h-1zM510 688h1v1h-1zM545 688h1v1h-1zM580 688h1v1h-1zM615 688h1v1h-1zM650 688h1v1h-1zM685 688h1v1h-1zM720 688h1v1h-1zM755 688h1v1h-1zM790 688h1v1h-1zM825 688h1v1h-1zM860 688h1v1h-1zM895 688h1v1h-1zM929 688h1v1h-1zM964 688h1v1h-1zM999 688h1v1h-1zM1034 688h1v1h-1zM1069 688h1v1h-1zM1104 688h1v1h-1zM1139 688h1v1h-1zM1174 688h1v1h-1zM1209 688h1v1h-1zM1244 688h1v1h-1zM1279 688h1v1h-1zM1314 688h1v1h-1zM1349 688h1v1h-1zM1384 688h1v1h-1zM1419 688h1v1h-1zM1454 688h1v1h-1zM1489 688h1v1h-1zM1524 688h1v1h-1zM1559 688h1v1h-1zM1594 688h1v1h-1zM1629 688h1v1h-1zM1664 688h1v1h-1zM20 712h1v1h-1zM55 712h1v1h-1zM90 712h1v1h-1zM125 712h1v1h-1zM160 712h1v1h-1zM195 712h1v1h-1zM230 712h1v1h-1zM265 712h1v1h-1zM300 712h1v1h-1zM335 712h1v1h-1zM370 712h1v1h-1zM405 712h1v1h-1zM440 712h1v1h-1zM475 712h1v1h-1zM510 712h1v1h-1zM545 712h1v1h-1zM580 712h1v1h-1zM615 712h1v1h-1zM650 712h1v1h-1zM685 712h1v1h-1zM720 712h1v1h-1zM755 712h1v1h-1zM790 712h1v1h-1zM825 712h1v1h-1zM860 712h1v1h-1zM895 712h1v1h-1zM929 712h1v1h-1zM964 712h1v1h-1zM999 712h1v1h-1zM1034 712h1v1h-1zM1069 712h1v1h-1zM1104 712h1v1h-1zM1139 712h1v1h-1zM1174 712h1v1h-1zM1209 712h1v1h-1zM1244 712h1v1h-1zM1279 712h1v1h-1zM1314 712h1v1h-1zM1349 712h1v1h-1zM1384 712h1v1h-1zM1419 712h1v1h-1zM1454 712h1v1h-1zM1489 712h1v1h-1zM1524 712h1v1h-1zM1559 712h1v1h-1zM1594 712h1v1h-1zM1629 712h1v1h-1zM1664 712h1v1h-1zM20 735h1v1h-1zM55 735h1v1h-1zM90 735h1v1h-1zM125 735h1v1h-1zM160 735h1v1h-1zM195 735h1v1h-1zM230 735h1v1h-1zM265 735h1v1h-1zM300 735h1v1h-1zM335 735h1v1h-1zM370 735h1v1h-1zM405 735h1v1h-1zM440 735h1v1h-1zM475 735h1v1h-1zM510 735h1v1h-1zM545 735h1v1h-1zM580 735h1v1h-1zM615 735h1v1h-1zM650 735h1v1h-1zM685 735h1v1h-1zM720 735h1v1h-1zM755 735h1v1h-1zM790 735h1v1h-1zM825 735h1v1h-1zM860 735h1v1h-1zM895 735h1v1h-1zM929 735h1v1h-1zM964 735h1v1h-1zM999 735h1v1h-1zM1034 735h1v1h-1zM1069 735h1v1h-1zM1104 735h1v1h-1zM1139 735h1v1h-1zM1174 735h1v1h-1zM1209 735h1v1h-1zM1244 735h1v1h-1zM1279 735h1v1h-1zM1314 735h1v1h-1zM1349 735h1v1h-1zM1384 735h1v1h-1zM1419 735h1v1h-1zM1454 735h1v1h-1zM1489 735h1v1h-1zM1524 735h1v1h-1zM1559 735h1v1h-1zM1594 735h1v1h-1zM1629 735h1v1h-1zM1664 735h1v1h-1zM1699 735h1v1h-1zM20 776h1v1h-1zM55 776h1v1h-1zM90 776h1v1h-1zM125 776h1v1h-1zM160 776h1v1h-1zM195 776h1v1h-1zM230 776h1v1h-1zM265 776h1v1h-1zM300 776h1v1h-1zM335 776h1v1h-1zM370 776h1v1h-1zM405 776h1v1h-1zM440 776h1v1h-1zM475 776h1v1h-1zM510 776h1v1h-1zM545 776h1v1h-1zM580 776h1v1h-1zM615 776h1v1h-1zM650 776h1v1h-1zM685 776h1v1h-1zM720 776h1v1h-1zM755 776h1v1h-1zM790 776h1v1h-1zM825 776h1v1h-1zM860 776h1v1h-1zM895 776h1v1h-1zM929 776h1v1h-1zM964 776h1v1h-1zM999 776h1v1h-1zM1034 776h1v1h-1zM1069 776h1v1h-1zM1104 776h1v1h-1zM1139 776h1v1h-1zM1174 776h1v1h-1zM1209 776h1v1h-1zM1244 776h1v1h-1zM1279 776h1v1h-1zM1314 776h1v1h-1zM1349 776h1v1h-1zM1384 776h1v1h-1zM1419 776h1v1h-1zM1454 776h1v1h-1zM1489 776h1v1h-1zM1524 776h1v1h-1zM1559 776h1v1h-1zM1594 776h1v1h-1zM1629 776h1v1h-1zM1664 776h1v1h-1zM20 800h1v1h-1zM55 800h1v1h-1zM90 800h1v1h-1zM125 800h1v1h-1zM160 800h1v1h-1zM195 800h1v1h-1zM230 800h1v1h-1zM265 800h1v1h-1zM300 800h1v1h-1zM335 800h1v1h-1zM370 800h1v1h-1zM405 800h1v1h-1zM440 800h1v1h-1zM475 800h1v1h-1zM510 800h1v1h-1zM545 800h1v1h-1zM580 800h1v1h-1zM615 800h1v1h-1zM650 800h1v1h-1zM685 800h1v1h-1zM720 800h1v1h-1zM755 800h1v1h-1zM790 800h1v1h-1zM825 800h1v1h-1zM860 800h1v1h-1zM895 800h1v1h-1zM929 800h1v1h-1zM964 800h1v1h-1zM999 800h1v1h-1zM1034 800h1v1h-1zM1069 800h1v1h-1zM1104 800h1v1h-1zM1139 800h1v1h-1zM1174 800h1v1h-1zM1209 800h1v1h-1zM1244 800h1v1h-1zM1279 800h1v1h-1zM1314 800h1v1h-1zM1349 800h1v1h-1zM1384 800h1v1h-1zM1419 800h1v1h-1zM1454 800h1v1h-1zM1489 800h1v1h-1zM1524 800h1v1h-1zM1559 800h1v1h-1zM1594 800h1v1h-1zM1629 800h1v1h-1zM1664 800h1v1h-1zM20 823h1v1h-1zM55 823h1v1h-1zM90 823h1v1h-1zM125 823h1v1h-1zM160 823h1v1h-1zM195 823h1v1h-1zM230 823h1v1h-1zM265 823h1v1h-1zM300 823h1v1h-1zM335 823h1v1h-1zM370 823h1v1h-1zM405 823h1v1h-1zM440 823h1v1h-1zM475 823h1v1h-1zM510 823h1v1h-1zM545 823h1v1h-1zM580 823h1v1h-1zM615 823h1v1h-1zM650 823h1v1h-1zM685 823h1v1h-1zM720 823h1v1h-1zM755 823h1v1h-1zM790 823h1v1h-1zM825 823h1v1h-1zM860 823h1v1h-1zM895 823h1v1h-1zM929 823h1v1h-1zM964 823h1v1h-1zM999 823h1v1h-1zM1034 823h1v1h-1zM1069 823h1v1h-1zM1104 823h1v1h-1zM1139 823h1v1h-1zM1174 823h1v1h-1zM1209 823h1v1h-1zM1244 823h1v1h-1zM1279 823h1v1h-1zM1314 823h1v1h-1zM1349 823h1v1h-1zM1384 823h1v1h-1zM1419 823h1v1h-1zM1454 823h1v1h-1zM1489 823h1v1h-1zM1524 823h1v1h-1zM1559 823h1v1h-1zM1594 823h1v1h-1zM1629 823h1v1h-1zM1664 823h1v1h-1zM20 846h1v1h-1zM55 846h1v1h-1zM90 846h1v1h-1zM125 846h1v1h-1zM160 846h1v1h-1zM195 846h1v1h-1zM230 846h1v1h-1zM265 846h1v1h-1zM300 846h1v1h-1zM335 846h1v1h-1zM370 846h1v1h-1zM405 846h1v1h-1zM440 846h1v1h-1zM475 846h1v1h-1zM510 846h1v1h-1zM545 846h1v1h-1zM580 846h1v1h-1zM615 846h1v1h-1zM650 846h1v1h-1zM685 846h1v1h-1zM720 846h1v1h-1zM755 846h1v1h-1zM790 846h1v1h-1zM825 846h1v1h-1zM860 846h1v1h-1zM895 846h1v1h-1zM929 846h1v1h-1zM964 846h1v1h-1zM999 846h1v1h-1zM1034 846h1v1h-1zM1069 846h1v1h-1zM1104 846h1v1h-1zM1139 846h1v1h-1zM1174 846h1v1h-1zM1209 846h1v1h-1zM1244 846h1v1h-1zM1279 846h1v1h-1zM1314 846h1v1h-1zM1349 846h1v1h-1zM1384 846h1v1h-1zM1419 846h1v1h-1zM1454 846h1v1h-1zM1489 846h1v1h-1zM1524 846h1v1h-1zM1559 846h1v1h-1zM1594 846h1v1h-1zM1629 846h1v1h-1zM1664 846h1v1h-1zM20 870h1v1h-1zM55 870h1v1h-1zM90 870h1v1h-1zM125 870h1v1h-1zM160 870h1v1h-1zM195 870h1v1h-1zM230 870h1v1h-1zM265 870h1v1h-1zM300 870h1v1h-1zM335 870h1v1h-1zM370 870h1v1h-1zM405 870h1v1h-1zM440 870h1v1h-1zM475 870h1v1h-1zM510 870h1v1h-1zM545 870h1v1h-1zM580 870h1v1h-1zM615 870h1v1h-1zM650 870h1v1h-1zM685 870h1v1h-1zM720 870h1v1h-1zM755 870h1v1h-1zM790 870h1v1h-1zM825 870h1v1h-1zM860 870h1v1h-1zM895 870h1v1h-1zM929 870h1v1h-1zM964 870h1v1h-1zM999 870h1v1h-1zM1034 870h1v1h-1zM1069 870h1v1h-1zM1104 870h1v1h-1zM1139 870h1v1h-1zM1174 870h1v1h-1zM1209 870h1v1h-1zM1244 870h1v1h-1zM1279 870h1v1h-1zM1314 870h1v1h-1zM1349 870h1v1h-1zM1384 870h1v1h-1zM1419 870h1v1h-1zM1454 870h1v1h-1zM1489 870h1v1h-1zM1524 870h1v1h-1zM1559 870h1v1h-1zM1594 870h1v1h-1zM1629 870h1v1h-1zM1664 870h1v1h-1zM20 893h1v1h-1zM55 893h1v1h-1zM90 893h1v1h-1zM125 893h1v1h-1zM160 893h1v1h-1zM195 893h1v1h-1zM230 893h1v1h-1zM265 893h1v1h-1zM300 893h1v1h-1zM335 893h1v1h-1zM370 893h1v1h-1zM405 893h1v1h-1zM440 893h1v1h-1zM475 893h1v1h-1zM510 893h1v1h-1zM545 893h1v1h-1zM580 893h1v1h-1zM615 893h1v1h-1zM650 893h1v1h-1zM685 893h1v1h-1zM720 893h1v1h-1zM755 893h1v1h-1zM790 893h1v1h-1zM825 893h1v1h-1zM860 893h1v1h-1zM895 893h1v1h-1zM929 893h1v1h-1zM964 893h1v1h-1zM999 893h1v1h-1zM1034 893h1v1h-1zM1069 893h1v1h-1zM1104 893h1v1h-1zM1139 893h1v1h-1zM1174 893h1v1h-1zM1209 893h1v1h-1zM1244 893h1v1h-1zM1279 893h1v1h-1zM1314 893h1v1h-1zM1349 893h1v1h-1zM1384 893h1v1h-1zM1419 893h1v1h-1zM1454 893h1v1h-1zM1489 893h1v1h-1zM1524 893h1v1h-1zM1559 893h1v1h-1zM1594 893h1v1h-1zM1629 893h1v1h-1zM1664 893h1v1h-1zM20 916h1v1h-1zM55 916h1v1h-1zM90 916h1v1h-1zM125 916h1v1h-1zM160 916h1v1h-1zM195 916h1v1h-1zM230 916h1v1h-1zM265 916h1v1h-1zM300 916h1v1h-1zM335 916h1v1h-1zM370 916h1v1h-1zM405 916h1v1h-1zM440 916h1v1h-1zM475 916h1v1h-1zM510 916h1v1h-1zM545 916h1v1h-1zM580 916h1v1h-1zM615 916h1v1h-1zM650 916h1v1h-1zM685 916h1v1h-1zM720 916h1v1h-1zM755 916h1v1h-1zM790 916h1v1h-1zM825 916h1v1h-1zM860 916h1v1h-1zM895 916h1v1h-1zM929 916h1v1h-1zM964 916h1v1h-1zM999 916h1v1h-1zM1034 916h1v1h-1zM1069 916h1v1h-1zM1104 916h1v1h-1zM1139 916h1v1h-1zM1174 916h1v1h-1zM1209 916h1v1h-1zM1244 916h1v1h-1zM1279 916h1v1h-1zM1314 916h1v1h-1zM1349 916h1v1h-1zM1384 916h1v1h-1zM1419 916h1v1h-1zM1454 916h1v1h-1zM1489 916h1v1h-1zM1524 916h1v1h-1zM1559 916h1v1h-1zM1594 916h1v1h-1zM1629 916h1v1h-1zM1664 916h1v1h-1zM20 939h1v1h-1zM55 939h1v1h-1zM90 939h1v1h-1zM125 939h1v1h-1zM160 939h1v1h-1zM195 939h1v1h-1zM230 939h1v1h-1zM265 939h1v1h-1zM300 939h1v1h-1zM335 939h1v1h-1zM370 939h1v1h-1zM405 939h1v1h-1zM440 939h1v1h-1zM475 939h1v1h-1zM510 939h1v1h-1zM545 939h1v1h-1zM580 939h1v1h-1zM615 939h1v1h-1zM650 939h1v1h-1zM685 939h1v1h-1zM720 939h1v1h-1zM755 939h1v1h-1zM790 939h1v1h-1zM825 939h1v1h-1zM860 939h1v1h-1zM895 939h1v1h-1zM929 939h1v1h-1zM964 939h1v1h-1zM999 939h1v1h-1zM1034 939h1v1h-1zM1069 939h1v1h-1zM1104 939h1v1h-1zM1139 939h1v1h-1zM1174 939h1v1h-1zM1209 939h1v1h-1zM1244 939h1v1h-1zM1279 939h1v1h-1zM1314 939h1v1h-1zM1349 939h1v1h-1zM1384 939h1v1h-1zM1419 939h1v1h-1zM1454 939h1v1h-1zM1489 939h1v1h-1zM1524 939h1v1h-1zM1559 939h1v1h-1zM1594 939h1v1h-1zM1629 939h1v1h-1zM1664 939h1v1h-1zM20 963h1v1h-1zM55 963h1v1h-1zM90 963h1v1h-1zM125 963h1v1h-1zM160 963h1v1h-1zM195 963h1v1h-1zM230 963h1v1h-1zM265 963h1v1h-1zM300 963h1v1h-1zM335 963h1v1h-1zM370 963h1v1h-1zM405 963h1v1h-1zM440 963h1v1h-1zM475 963h1v1h-1zM510 963h1v1h-1zM545 963h1v1h-1zM580 963h1v1h-1zM615 963h1v1h-1zM650 963h1v1h-1zM685 963h1v1h-1zM720 963h1v1h-1zM755 963h1v1h-1zM790 963h1v1h-1zM825 963h1v1h-1zM860 963h1v1h-1zM895 963h1v1h-1zM929 963h1v1h-1zM964 963h1v1h-1zM999 963h1v1h-1zM1034 963h1v1h-1zM1069 963h1v1h-1zM1104 963h1v1h-1zM1139 963h1v1h-1zM1174 963h1v1h-1zM1209 963h1v1h-1zM1244 963h1v1h-1zM1279 963h1v1h-1zM1314 963h1v1h-1zM1349 963h1v1h-1zM1384 963h1v1h-1zM1419 963h1v1h-1zM1454 963h1v1h-1zM1489 963h1v1h-1zM1524 963h1v1h-1zM1559 963h1v1h-1zM1594 963h1v1h-1zM1629 963h1v1h-1zM1664 963h1v1h-1zM1699 963h1v1h-1zM20 986h1v1h-1zM55 986h1v1h-1zM90 986h1v1h-1zM125 986h1v1h-1zM160 986h1v1h-1zM195 986h1v1h-1zM230 986h1v1h-1zM265 986h1v1h-1zM300 986h1v1h-1zM335 986h1v1h-1zM370 986h1v1h-1zM405 986h1v1h-1zM440 986h1v1h-1zM475 986h1v1h-1zM510 986h1v1h-1zM545 986h1v1h-1zM580 986h1v1h-1zM615 986h1v1h-1zM650 986h1v1h-1zM685 986h1v1h-1zM720 986h1v1h-1zM755 986h1v1h-1zM790 986h1v1h-1zM825 986h1v1h-1zM860 986h1v1h-1zM895 986h1v1h-1zM929 986h1v1h-1zM964 986h1v1h-1zM999 986h1v1h-1zM1034 986h1v1h-1zM1069 986h1v1h-1zM1104 986h1v1h-1zM1139 986h1v1h-1zM1174 986h1v1h-1zM1209 986h1v1h-1zM1244 986h1v1h-1zM1279 986h1v1h-1zM1314 986h1v1h-1zM1349 986h1v1h-1zM1384 986h1v1h-1zM1419 986h1v1h-1zM1454 986h1v1h-1zM1489 986h1v1h-1zM1524 986h1v1h-1zM1559 986h1v1h-1zM1594 986h1v1h-1zM1629 986h1v1h-1zM1664 986h1v1h-1zM1699 986h1v1h-1zM1734 986h1v1h-1z" fill="#a8a8a8"/>
<path d="M230 58h1v1h-1zM230 63h1v1h-1zM230 67h1v1h-1zM230 72h1v1h-1zM230 77h1v1h-1zM230 81h1v1h-1zM230 86h1v1h-1zM230 91h1v1h-1zM230 95h1v1h-1zM230 100h1v1h-1zM230 105h1v1h-1zM230 109h1v1h-1zM230 114h1v1h-1zM230 119h1v1h-1zM230 123h1v1h-1zM230 128h1v1h-1zM230 133h1v1h-1zM230 137h1v1h-1zM230 142h1v1h-1zM230 147h1v1h-1zM230 151h1v1h-1zM230 156h1v1h-1zM230 161h1v1h-1zM230 165h1v1h-1zM230 170h1v1h-1zM230 175h1v1h-1zM230 179h1v1h-1zM230 184h1v1h-1zM230 189h1v1h-1zM230 193h1v1h-1zM230 198h1v1h-1zM230 203h1v1h-1zM230 207h1v1h-1zM230 212h1v1h-1zM230 217h1v1h-1zM230 221h1v1h-1zM230 226h1v1h-1zM230 231h1v1h-1zM230 235h1v1h-1zM230 240h1v1h-1zM230 245h1v1h-1zM230 249h1v1h-1zM230 254h1v1h-1zM230 259h1v1h-1zM230 263h1v1h-1zM230 268h1v1h-1zM230 273h1v1h-1zM230 277h1v1h-1zM230 282h1v1h-1zM230 287h1v1h-1zM230 291h1v1h-1zM230 296h1v1h-1zM230 301h1v1h-1zM230 305h1v1h-1zM230 310h1v1h-1zM230 315h1v1h-1zM230 319h1v1h-1zM230 324h1v1h-1zM230 329h1v1h-1zM230 333h1v1h-1zM230 338h1v1h-1zM230 343h1v1h-1zM230 347h1v1h-1zM230 352h1v1h-1zM230 357h1v1h-1zM230 361h1v1h-1zM230 366h1v1h-1zM230 371h1v1h-1zM230 375h1v1h-1zM230 380h1v1h-1zM230 385h1v1h-1zM230 389h1v1h-1zM230 394h1v1h-1zM230 399h1v1h-1zM230 403h1v1h-1zM230 408h1v1h-1zM230 413h1v1h-1zM230 417h1v1h-1zM230 422h1v1h-1zM230 427h1v1h-1zM230 431h1v1h-1zM230 436h1v1h-1zM230 441h1v1h-1zM230 445h1v1h-1zM230 450h1v1h-1zM230 455h1v1h-1zM230 459h1v1h-1zM230 464h1v1h-1zM230 469h1v1h-1zM230 473h1v1h-1zM230 478h1v1h-1zM230 483h1v1h-1zM230 487h1v1h-1zM230 492h1v1h-1zM230 497h1v1h-1zM230 501h1v1h-1zM230 506h1v1h-1zM230 511h1v1h-1zM230 515h1v1h-1zM230 520h1v1h-1zM230 525h1v1h-1zM230 529h1v1h-1zM230 534h1v1h-1zM230 539h1v1h-1zM230 543h1v1h-1zM230 548h1v1h-1zM230 553h1v1h-1zM230 557h1v1h-1zM230 562h1v1h-1zM230 567h1v1h-1zM230 571h1v1h-1zM230 576h1v1h-1zM230 581h1v1h-1zM230 585h1v1h-1zM230 590h1v1h-1zM230 595h1v1h-1zM230 599h1v1h-1zM230 604h1v1h-1zM230 609h1v1h-1zM230 613h1v1h-1zM230 618h1v1h-1zM230 623h1v1h-1zM230 627h1v1h-1zM230 632h1v1h-1zM230 637h1v1h-1zM230 641h1v1h-1zM230 646h1v1h-1zM230 651h1v1h-1zM230 655h1v1h-1zM230 660h1v1h-1zM230 665h1v1h-1zM230 669h1v1h-1zM230 674h1v1h-1zM230 679h1v1h-1zM230 683h1v1h-1zM230 688h1v1h-1zM230 693h1v1h-1zM230 697h1v1h-1zM230 702h1v1h-1zM230 707h1v1h-1zM230 711h1v1h-1zM230 716h1v1h-1zM230 721h1v1h-1zM230 725h1v1h-1zM230 730h1v1h-1zM230 735h1v1h-1zM230 739h1v1h-1zM230 744h1v1h-1zM230 749h1v1h-1zM230 753h1v1h-1zM230 758h1v1h-1zM230 763h1v1h-1zM230 767h1v1h-1zM230 772h1v1h-1zM230 777h1v1h-1zM230 781h1v1h-1zM230 786h1v1h-1zM230 791h1v1h-1zM230 795h1v1h-1zM230 800h1v1h-1zM230 805h1v1h-1zM230 809h1v1h-1zM230 814h1v1h-1zM230 819h1v1h-1zM230 823h1v1h-1zM230 828h1v1h-1zM230 833h1v1h-1zM230 837h1v1h-1zM230 842h1v1h-1zM230 847h1v1h-1zM230 851h1v1h-1zM230 856h1v1h-1zM230 861h1v1h-1zM230 865h1v1h-1zM230 870h1v1h-1zM230 875h1v1h-1zM230 879h1v1h-1zM230 884h1v1h-1zM230 889h1v1h-1zM230 893h1v1h-1zM230 898h1v1h-1zM230 903h1v1h-1zM230 907h1v1h-1zM230 912h1v1h-1zM230 917h1v1h-1zM230 921h1v1h-1zM230 926h1v1h-1zM230 931h1v1h-1zM230 935h1v1h-1zM230 940h1v1h-1zM230 945h1v1h-1zM230 949h1v1h-1zM230 954h1v1h-1zM230 959h1v1h-1zM230 963h1v1h-1zM230 968h1v1h-1zM230 973h1v1h-1zM230 977h1v1h-1zM230 982h1v1h-1zM230 987h1v1h-1zM230 991h1v1h-1zM405 58h1v1h-1zM405 63h1v1h-1zM405 67h1v1h-1zM405 72h1v1h-1zM405 77h1v1h-1zM405 81h1v1h-1zM405 86h1v1h-1zM405 91h1v1h-1zM405 95h1v1h-1zM405 100h1v1h-1zM405 105h1v1h-1zM405 109h1v1h-1zM405 114h1v1h-1zM405 119h1v1h-1zM405 123h1v1h-1zM405 128h1v1h-1zM405 133h1v1h-1zM405 137h1v1h-1zM405 142h1v1h-1zM405 147h1v1h-1zM405 151h1v1h-1zM405 156h1v1h-1zM405 161h1v1h-1zM405 165h1v1h-1zM405 170h1v1h-1zM405 175h1v1h-1zM405 179h1v1h-1zM405 184h1v1h-1zM405 189h1v1h-1zM405 193h1v1h-1zM405 198h1v1h-1zM405 203h1v1h-1zM405 207h1v1h-1zM405 212h1v1h-1zM405 217h1v1h-1zM405 221h1v1h-1zM405 226h1v1h-1zM405 231h1v1h-1zM405 235h1v1h-1zM405 240h1v1h-1zM405 245h1v1h-1zM405 249h1v1h-1zM405 254h1v1h-1zM405 259h1v1h-1zM405 263h1v1h-1zM405 268h1v1h-1zM405 273h1v1h-1zM405 277h1v1h-1zM405 282h1v1h-1zM405 287h1v1h-1zM405 291h1v1h-1zM405 296h1v1h-1zM405 301h1v1h-1zM405 305h1v1h-1zM405 310h1v1h-1zM405 315h1v1h-1zM405 319h1v1h-1zM405 324h1v1h-1zM405 329h1v1h-1zM405 333h1v1h-1zM405 338h1v1h-1zM405 343h1v1h-1zM405 347h1v1h-1zM405 352h1v1h-1zM405 357h1v1h-1zM405 361h1v1h-1zM405 366h1v1h-1zM405 371h1v1h-1zM405 375h1v1h-1zM405 380h1v1h-1zM405 385h1v1h-1zM405 389h1v1h-1zM405 394h1v1h-1zM405 399h1v1h-1zM405 403h1v1h-1zM405 408h1v1h-1zM405 413h1v1h-1zM405 417h1v1h-1zM405 422h1v1h-1zM405 427h1v1h-1zM405 431h1v1h-1zM405 436h1v1h-1zM405 441h1v1h-1zM405 445h1v1h-1zM405 450h1v1h-1zM405 455h1v1h-1zM405 459h1v1h-1zM405 464h1v1h-1zM405 469h1v1h-1zM405 473h1v1h-1zM405 478h1v1h-1zM405 483h1v1h-1zM405 487h1v1h-1zM405 492h1v1h-1zM405 497h1v1h-1zM405 501h1v1h-1zM405 506h1v1h-1zM405 511h1v1h-1zM405 515h1v1h-1zM405 520h1v1h-1zM405 525h1v1h-1zM405 529h1v1h-1zM405 534h1v1h-1zM405 539h1v1h-1zM405 543h1v1h-1zM405 548h1v1h-1zM405 553h1v1h-1zM405 557h1v1h-1zM405 562h1v1h-1zM405 567h1v1h-1zM405 571h1v1h-1zM405 576h1v1h-1zM405 581h1v1h-1zM405 585h1v1h-1zM405 590h1v1h-1zM405 595h1v1h-1zM405 599h1v1h-1zM405 604h1v1h-1zM405 609h1v1h-1zM405 613h1v1h-1zM405 618h1v1h-1zM405 623h1v1h-1zM405 627h1v1h-1zM405 632h1v1h-1zM405 637h1v1h-1zM405 641h1v1h-1zM405 646h1v1h-1zM405 651h1v1h-1zM405 655h1v1h-1zM405 660h1v1h-1zM405 665h1v1h-1zM405 669h1v1h-1zM405 674h1v1h-1zM405 679h1v1h-1zM405 683h1v1h-1zM405 688h1v1h-1zM405 693h1v1h-1zM405 697h1v1h-1zM405 702h1v1h-1zM405 707h1v1h-1zM405 711h1v1h-1zM405 716h1v1h-1zM405 721h1v1h-1zM405 725h1v1h-1zM405 730h1v1h-1zM405 735h1v1h-1zM405 739h1v1h-1zM405 744h1v1h-1zM405 749h1v1h-1zM405 753h1v1h-1zM405 758h1v1h-1zM405 763h1v1h-1zM405 767h1v1h-1zM405 772h1v1h-1zM405 777h1v1h-1zM405 781h1v1h-1zM405 786h1v1h-1zM405 791h1v1h-1zM405 795h1v1h-1zM405 800h1v1h-1zM405 805h1v1h-1zM405 809h1v1h-1zM405 814h1v1h-1zM405 819h1v1h-1zM405 823h1v1h-1zM405 828h1v1h-1zM405 833h1v1h-1zM405 837h1v1h-1zM405 842h1v1h-1zM405 847h1v1h-1zM405 851h1v1h-1zM405 856h1v1h-1zM405 861h1v1h-1zM405 865h1v1h-1zM405 870h1v1h-1zM405 875h1v1h-1zM405 879h1v1h-1zM405 884h1v1h-1zM405 889h1v1h-1zM405 893h1v1h-1zM405 898h1v1h-1zM405 903h1v1h-1zM405 907h1v1h-1zM405 912h1v1h-1zM405 917h1v1h-1zM405 921h1v1h-1zM405 926h1v1h-1zM405 931h1v1h-1zM405 935h1v1h-1zM405 940h1v1h-1zM405 945h1v1h-1zM405 949h1v1h-1zM405 954h1v1h-1zM405 959h1v1h-1zM405 963h1v1h-1zM405 968h1v1h-1zM405 973h1v1h-1zM405 977h1v1h-1zM405 982h1v1h-1zM405 987h1v1h-1zM405 991h1v1h-1zM580 58h1v1h-1zM580 63h1v1h-1zM580 67h1v1h-1zM580 72h1v1h-1zM580 77h1v1h-1zM580 81h1v1h-1zM580 86h1v1h-1zM580 91h1v1h-1zM580 95h1v1h-1zM580 100h1v1h-1zM580 105h1v1h-1zM580 109h1v1h-1zM580 114h1v1h-1zM580 119h1v1h-1zM580 123h1v1h-1zM580 128h1v1h-1zM580 133h1v1h-1zM580 137h1v1h-1zM580 142h1v1h-1zM580 147h1v1h-1zM580 151h1v1h-1zM580 156h1v1h-1zM580 161h1v1h-1zM580 165h1v1h-1zM580 170h1v1h-1zM580 175h1v1h-1zM580 179h1v1h-1zM580 184h1v1h-1zM580 189h1v1h-1zM580 193h1v1h-1zM580 198h1v1h-1zM580 203h1v1h-1zM580 207h1v1h-1zM580 212h1v1h-1zM580 217h1v1h-1zM580 221h1v1h-1zM580 226h1v1h-1zM580 231h1v1h-1zM580 235h1v1h-1zM580 240h1v1h-1zM580 245h1v1h-1zM580 249h1v1h-1zM580 254h1v1h-1zM580 259h1v1h-1zM580 263h1v1h-1zM580 268h1v1h-1zM580 273h1v1h-1zM580 277h1v1h-1zM580 282h1v1h-1zM580 287h1v1h-1zM580 291h1v1h-1zM580 296h1v1h-1zM580 301h1v1h-1zM580 305h1v1h-1zM580 310h1v1h-1zM580 315h1v1h-1zM580 319h1v1h-1zM580 324h1v1h-1zM580 329h1v1h-1zM580 333h1v1h-1zM580 338h1v1h-1zM580 343h1v1h-1zM580 347h1v1h-1zM580 352h1v1h-1zM580 357h1v1h-1zM580 361h1v1h-1zM580 366h1v1h-1zM580 371h1v1h-1zM580 375h1v1h-1zM580 380h1v1h-1zM580 385h1v1h-1zM580 389h1v1h-1zM580 394h1v1h-1zM580 399h1v1h-1zM580 403h1v1h-1zM580 408h1v1h-1zM580 413h1v1h-1zM580 417h1v1h-1zM580 422h1v1h-1zM580 427h1v1h-1zM580 431h1v1h-1zM580 436h1v1h-1zM580 441h1v1h-1zM580 445h1v1h-1zM580 450h1v1h-1zM580 455h1v1h-1zM580 459h1v1h-1zM580 464h1v1h-1zM580 469h1v1h-1zM580 473h1v1h-1zM580 478h1v1h-1zM580 483h1v1h-1zM580 487h1v1h-1zM580 492h1v1h-1zM580 497h1v1h-1zM580 501h1v1h-1zM580 506h1v1h-1zM580 511h1v1h-1zM580 515h1v1h-1zM580 520h1v1h-1zM580 525h1v1h-1zM580 529h1v1h-1zM580 534h1v1h-1zM580 539h1v1h-1zM580 543h1v1h-1zM580 548h1v1h-1zM580 553h1v1h-1zM580 557h1v1h-1zM580 562h1v1h-1zM580 567h1v1h-1zM580 571h1v1h-1zM580 576h1v1h-1zM580 581h1v1h-1zM580 585h1v1h-1zM580 590h1v1h-1zM580 595h1v1h-1zM580 599h1v1h-1zM580 604h1v1h-1zM580 609h1v1h-1zM580 613h1v1h-1zM580 618h1v1h-1zM580 623h1v1h-1zM580 627h1v1h-1zM580 632h1v1h-1zM580 637h1v1h-1zM580 641h1v1h-1zM580 646h1v1h-1zM580 651h1v1h-1zM580 655h1v1h-1zM580 660h1v1h-1zM580 665h1v1h-1zM580 669h1v1h-1zM580 674h1v1h-1zM580 679h1v1h-1zM580 683h1v1h-1zM580 688h1v1h-1zM580 693h1v1h-1zM580 697h1v1h-1zM580 702h1v1h-1zM580 707h1v1h-1zM580 711h1v1h-1zM580 716h1v1h-1zM580 721h1v1h-1zM580 725h1v1h-1zM580 730h1v1h-1zM580 735h1v1h-1zM580 739h1v1h-1zM580 744h1v1h-1zM580 749h1v1h-1zM580 753h1v1h-1zM580 758h1v1h-1zM580 763h1v1h-1zM580 767h1v1h-1zM580 772h1v1h-1zM580 777h1v1h-1zM580 781h1v1h-1zM580 786h1v1h-1zM580 791h1v1h-1zM580 795h1v1h-1zM580 800h1v1h-1zM580 805h1v1h-1zM580 809h1v1h-1zM580 814h1v1h-1zM580 819h1v1h-1zM580 823h1v1h-1zM580 828h1v1h-1zM580 833h1v1h-1zM580 837h1v1h-1zM580 842h1v1h-1zM580 847h1v1h-1zM580 851h1v1h-1zM580 856h1v1h-1zM580 861h1v1h-1zM580 865h1v1h-1zM580 870h1v1h-1zM580 875h1v1h-1zM580 879h1v1h-1zM580 884h1v1h-1zM580 889h1v1h-1zM580 893h1v1h-1zM580 898h1v1h-1zM580 903h1v1h-1zM580 907h1v1h-1zM580 912h1v1h-1zM580 917h1v1h-1zM580 921h1v1h-1zM580 926h1v1h-1zM580 931h1v1h-1zM580 935h1v1h-1zM580 940h1v1h-1zM580 945h1v1h-1zM580 949h1v1h-1zM580 954h1v1h-1zM580 959h1v1h-1zM580 963h1v1h-1zM580 968h1v1h-1zM580 973h1v1h-1zM580 977h1v1h-1zM580 982h1v1h-1zM580 987h1v1h-1zM580 991h1v1h-1zM755 58h1v1h-1zM755 63h1v1h-1zM755 67h1v1h-1zM755 72h1v1h-1zM755 77h1v1h-1zM755 81h1v1h-1zM755 86h1v1h-1zM755 91h1v1h-1zM755 95h1v1h-1zM755 100h1v1h-1zM755 105h1v1h-1zM755 109h1v1h-1zM755 114h1v1h-1zM755 119h1v1h-1zM755 123h1v1h-1zM755 128h1v1h-1zM755 133h1v1h-1zM755 137h1v1h-1zM755 142h1v1h-1zM755 147h1v1h-1zM755 151h1v1h-1zM755 156h1v1h-1zM755 161h1v1h-1zM755 165h1v1h-1zM755 170h1v1h-1zM755 175h1v1h-1zM755 179h1v1h-1zM755 184h1v1h-1zM755 189h1v1h-1zM755 193h1v1h-1zM755 198h1v1h-1zM755 203h1v1h-1zM755 207h1v1h-1zM755 212h1v1h-1zM755 217h1v1h-1zM755 221h1v1h-1zM755 226h1v1h-1zM755 231h1v1h-1zM755 235h1v1h-1zM755 240h1v1h-1zM755 245h1v1h-1zM755 249h1v1h-1zM755 254h1v1h-1zM755 259h1v1h-1zM755 263h1v1h-1zM755 268h1v1h-1zM755 273h1v1h-1zM755 277h1v1h-1zM755 282h1v1h-1zM755 287h1v1h-1zM755 291h1v1h-1zM755 296h1v1h-1zM755 301h1v1h-1zM755 305h1v1h-1zM755 310h1v1h-1zM755 315h1v1h-1zM755 319h1v1h-1zM755 324h1v1h-1zM755 329h1v1h-1zM755 333h1v1h-1zM755 338h1v1h-1zM755 343h1v1h-1zM755 347h1v1h-1zM755 352h1v1h-1zM755 357h1v1h-1zM755 361h1v1h-1zM755 366h1v1h-1zM755 371h1v1h-1zM755 375h1v1h-1zM755 380h1v1h-1zM755 385h1v1h-1zM755 389h1v1h-1zM755 394h1v1h-1zM755 399h1v1h-1zM755 403h1v1h-1zM755 408h1v1h-1zM755 413h1v1h-1zM755 417h1v1h-1zM755 422h1v1h-1zM755 427h1v1h-1zM755 431h1v1h-1zM755 436h1v1h-1zM755 441h1v1h-1zM755 445h1v1h-1zM755 450h1v1h-1zM755 455h1v1h-1zM755 459h1v1h-1zM755 464h1v1h-1zM755 469h1v1h-1zM755 473h1v1h-1zM755 478h1v1h-1zM755 483h1v1h-1zM755 487h1v1h-1zM755 492h1v1h-1zM755 497h1v1h-1zM755 501h1v1h-1zM755 506h1v1h-1zM755 511h1v1h-1zM755 515h1v1h-1zM755 520h1v1h-1zM755 525h1v1h-1zM755 529h1v1h-1zM755 534h1v1h-1zM755 539h1v1h-1zM755 543h1v1h-1zM755 548h1v1h-1zM755 553h1v1h-1zM755 557h1v1h-1zM755 562h1v1h-1zM755 567h1v1h-1zM755 571h1v1h-1zM755 576h1v1h-1zM755 581h1v1h-1zM755 585h1v1h-1zM755 590h1v1h-1zM755 595h1v1h-1zM755 599h1v1h-1zM755 604h1v1h-1zM755 609h1v1h-1zM755 613h1v1h-1zM755 618h1v1h-1zM755 623h1v1h-1zM755 627h1v1h-1zM755 632h1v1h-1zM755 637h1v1h-1zM755 641h1v1h-1zM755 646h1v1h-1zM755 651h1v1h-1zM755 655h1v1h-1zM755 660h1v1h-1zM755 665h1v1h-1zM755 669h1v1h-1zM755 674h1v1h-1zM755 679h1v1h-1zM755 683h1v1h-1zM755 688h1v1h-1zM755 693h1v1h-1zM755 697h1v1h-1zM755 702h1v1h-1zM755 707h1v1h-1zM755 711h1v1h-1zM755 716h1v1h-1zM755 721h1v1h-1zM755 725h1v1h-1zM755 730h1v1h-1zM755 735h1v1h-1zM755 739h1v1h-1zM755 744h1v1h-1zM755 749h1v1h-1zM755 753h1v1h-1zM755 758h1v1h-1zM755 763h1v1h-1zM755 767h1v1h-1zM755 772h1v1h-1zM755 777h1v1h-1zM755 781h1v1h-1zM755 786h1v1h-1zM755 791h1v1h-1zM755 795h1v1h-1zM755 800h1v1h-1zM755 805h1v1h-1zM755 809h1v1h-1zM755 814h1v1h-1zM755 819h1v1h-1zM755 823h1v1h-1zM755 828h1v1h-1zM755 833h1v1h-1zM755 837h1v1h-1zM755 842h1v1h-1zM755 847h1v1h-1zM755 851h1v1h-1zM755 856h1v1h-1zM755 861h1v1h-1zM755 865h1v1h-1zM755 870h1v1h-1zM755 875h1v1h-1zM755 879h1v1h-1zM755 884h1v1h-1zM755 889h1v1h-1zM755 893h1v1h-1zM755 898h1v1h-1zM755 903h1v1h-1zM755 907h1v1h-1zM755 912h1v1h-1zM755 917h1v1h-1zM755 921h1v1h-1zM755 926h1v1h-1zM755 931h1v1h-1zM755 935h1v1h-1zM755 940h1v1h-1zM755 945h1v1h-1zM755 949h1v1h-1zM755 954h1v1h-1zM755 959h1v1h-1zM755 963h1v1h-1zM755 968h1v1h-1zM755 973h1v1h-1zM755 977h1v1h-1zM755 982h1v1h-1zM755 987h1v1h-1zM755 991h1v1h-1zM929 58h1v1h-1zM929 63h1v1h-1zM929 67h1v1h-1zM929 72h1v1h-1zM929 77h1v1h-1zM929 81h1v1h-1zM929 86h1v1h-1zM929 91h1v1h-1zM929 95h1v1h-1zM929 100h1v1h-1zM929 105h1v1h-1zM929 109h1v1h-1zM929 114h1v1h-1zM929 119h1v1h-1zM929 123h1v1h-1zM929 128h1v1h-1zM929 133h1v1h-1zM929 137h1v1h-1zM929 142h1v1h-1zM929 147h1v1h-1zM929 151h1v1h-1zM929 156h1v1h-1zM929 161h1v1h-1zM929 165h1v1h-1zM929 170h1v1h-1zM929 175h1v1h-1zM929 179h1v1h-1zM929 184h1v1h-1zM929 189h1v1h-1zM929 193h1v1h-1zM929 198h1v1h-1zM929 203h1v1h-1zM929 207h1v1h-1zM929 212h1v1h-1zM929 217h1v1h-1zM929 221h1v1h-1zM929 226h1v1h-1zM929 231h1v1h-1zM929 235h1v1h-1zM929 240h1v1h-1zM929 245h1v1h-1zM929 249h1v1h-1zM929 254h1v1h-1zM929 259h1v1h-1zM929 263h1v1h-1zM929 268h1v1h-1zM929 273h1v1h-1zM929 277h1v1h-1zM929 282h1v1h-1zM929 287h1v1h-1zM929 291h1v1h-1zM929 296h1v1h-1zM929 301h1v1h-1zM929 305h1v1h-1zM929 310h1v1h-1zM929 315h1v1h-1zM929 319h1v1h-1zM929 324h1v1h-1zM929 329h1v1h-1zM929 333h1v1h-1zM929 338h1v1h-1zM929 343h1v1h-1zM929 347h1v1h-1zM929 352h1v1h-1zM929 357h1v1h-1zM929 361h1v1h-1zM929 366h1v1h-1zM929 371h1v1h-1zM929 375h1v1h-1zM929 380h1v1h-1zM929 385h1v1h-1zM929 389h1v1h-1zM929 394h1v1h-1zM929 399h1v1h-1zM929 403h1v1h-1zM929 408h1v1h-1zM929 413h1v1h-1zM929 417h1v1h-1zM929 422h1v1h-1zM929 427h1v1h-1zM929 431h1v1h-1zM929 436h1v1h-1zM929 441h1v1h-1zM929 445h1v1h-1zM929 450h1v1h-1zM929 455h1v1h-1zM929 459h1v1h-1zM929 464h1v1h-1zM929 469h1v1h-1zM929 473h1v1h-1zM929 478h1v1h-1zM929 483h1v1h-1zM929 487h1v1h-1zM929 492h1v1h-1zM929 497h1v1h-1zM929 501h1v1h-1zM929 506h1v1h-1zM929 511h1v1h-1zM929 515h1v1h-1zM929 520h1v1h-1zM929 525h1v1h-1zM929 529h1v1h-1zM929 534h1v1h-1zM929 539h1v1h-1zM929 543h1v1h-1zM929 548h1v1h-1zM929 553h1v1h-1zM929 557h1v1h-1zM929 562h1v1h-1zM929 567h1v1h-1zM929 571h1v1h-1zM929 576h1v1h-1zM929 581h1v1h-1zM929 585h1v1h-1zM929 590h1v1h-1zM929 595h1v1h-1zM929 599h1v1h-1zM929 604h1v1h-1zM929 609h1v1h-1zM929 613h1v1h-1zM929 618h1v1h-1zM929 623h1v1h-1zM929 627h1v1h-1zM929 632h1v1h-1zM929 637h1v1h-1zM929 641h1v1h-1zM929 646h1v1h-1zM929 651h1v1h-1zM929 655h1v1h-1zM929 660h1v1h-1zM929 665h1v1h-1zM929 669h1v1h-1zM929 674h1v1h-1zM929 679h1v1h-1zM929 683h1v1h-1zM929 688h1v1h-1zM929 693h1v1h-1zM929 697h1v1h-1zM929 702h1v1h-1zM929 707h1v1h-1zM929 711h1v1h-1zM929 716h1v1h-1zM929 721h1v1h-1zM929 725h1v1h-1zM929 730h1v1h-1zM929 735h1v1h-1zM929 739h1v1h-1zM929 744h1v1h-1zM929 749h1v1h-1zM929 753h1v1h-1zM929 758h1v1h-1zM929 763h1v1h-1zM929 767h1v1h-1zM929 772h1v1h-1zM929 777h1v1h-1zM929 781h1v1h-1zM929 786h1v1h-1zM929 791h1v1h-1zM929 795h1v1h-1zM929 800h1v1h-1zM929 805h1v1h-1zM929 809h1v1h-1zM929 814h1v1h-1zM929 819h1v1h-1zM929 823h1v1h-1zM929 828h1v1h-1zM929 833h1v1h-1zM929 837h1v1h-1zM929 842h1v1h-1zM929 847h1v1h-1zM929 851h1v1h-1zM929 856h1v1h-1zM929 861h1v1h-1zM929 865h1v1h-1zM929 870h1v1h-1zM929 875h1v1h-1zM929 879h1v1h-1zM929 884h1v1h-1zM929 889h1v1h-1zM929 893h1v1h-1zM929 898h1v1h-1zM929 903h1v1h-1zM929 907h1v1h-1zM929 912h1v1h-1zM929 917h1v1h-1zM929 921h1v1h-1zM929 926h1v1h-1zM929 931h1v1h-1zM929 935h1v1h-1zM929 940h1v1h-1zM929 945h1v1h-1zM929 949h1v1h-1zM929 954h1v1h-1zM929 959h1v1h-1zM929 963h1v1h-1zM929 968h1v1h-1zM929 973h1v1h-1zM929 977h1v1h-1zM929 982h1v1h-1zM929 987h1v1h-1zM929 991h1v1h-1zM1104 58h1v1h-1zM1104 63h1v1h-1zM1104 67h1v1h-1zM1104 72h1v1h-1zM1104 77h1v1h-1zM1104 81h1v1h-1zM1104 86h1v1h-1zM1104 91h1v1h-1zM1104 95h1v1h-1zM1104 100h1v1h-1zM1104 105h1v1h-1zM1104 109h1v1h-1zM1104 114h1v1h-1zM1104 119h1v1h-1zM1104 123h1v1h-1zM1104 128h1v1h-1zM1104 133h1v1h-1zM1104 137h1v1h-1zM1104 142h1v1h-1zM1104 147h1v1h-1zM1104 151h1v1h-1zM1104 156h1v1h-1zM1104 161h1v1h-1zM1104 165h1v1h-1zM1104 170h1v1h-1zM1104 175h1v1h-1zM1104 179h1v1h-1zM1104 184h1v1h-1zM1104 189h1v1h-1zM1104 193h1v1h-1zM1104 198h1v1h-1zM1104 203h1v1h-1zM1104 207h1v1h-1zM1104 212h1v1h-1zM1104 217h1v1h-1zM1104 221h1v1h-1zM1104 226h1v1h-1zM1104 231h1v1h-1zM1104 235h1v1h-1zM1104 240h1v1h-1zM1104 245h1v1h-1zM1104 249h1v1h-1zM1104 254h1v1h-1zM1104 259h1v1h-1zM1104 263h1v1h-1zM1104 268h1v1h-1zM1104 273h1v1h-1zM1104 277h1v1h-1zM1104 282h1v1h-1zM1104 287h1v1h-1zM1104 291h1v1h-1zM1104 296h1v1h-1zM1104 301h1v1h-1zM1104 305h1v1h-1zM1104 310h1v1h-1zM1104 315h1v1h-1zM1104 319h1v1h-1zM1104 324h1v1h-1zM1104 329h1v1h-1zM1104 333h1v1h-1zM1104 338h1v1h-1zM1104 343h1v1h-1zM1104 347h1v1h-1zM1104 352h1v1h-1zM1104 357h1v1h-1zM1104 361h1v1h-1zM1104 366h1v1h-1zM1104 371h1v1h-1zM1104 375h1v1h-1zM1104 380h1v1h-1zM1104 385h1v1h-1zM1104 389h1v1h-1zM1104 394h1v1h-1zM1104 399h1v1h-1zM1104 403h1v1h-1zM1104 408h1v1h-1zM1104 413h1v1h-1zM1104 417h1v1h-1zM1104 422h1v1h-1zM1104 427h1v1h-1zM1104 431h1v1h-1zM1104 436h1v1h-1zM1104 441h1v1h-1zM1104 445h1v1h-1zM1104 450h1v1h-1zM1104 455h1v1h-1zM1104 459h1v1h-1zM1104 464h1v1h-1zM1104 469h1v1h-1zM1104 473h1v1h-1zM1104 478h1v1h-1zM1104 483h1v1h-1zM1104 487h1v1h-1zM1104 492h1v1h-1zM1104 497h1v1h-1zM1104 501h1v1h-1zM1104 506h1v1h-1zM1104 511h1v1h-1zM1104 515h1v1h-1zM1104 520h1v1h-1zM1104 525h1v1h-1zM1104 529h1v1h-1zM1104 534h1v1h-1zM1104 539h1v1h-1zM1104 543h1v1h-1zM1104 548h1v1h-1zM1104 553h1v1h-1zM1104 557h1v1h-1zM1104 562h1v1h-1zM1104 567h1v1h-1zM1104 571h1v1h-1zM1104 576h1v1h-1zM1104 581h1v1h-1zM1104 585h1v1h-1zM1104 590h1v1h-1zM1104 595h1v1h-1zM1104 599h1v1h-1zM1104 604h1v1h-1zM1104 609h1v1h-1zM1104 613h1v1h-1zM1104 618h1v1h-1zM1104 623h1v1h-1zM1104 627h1v1h-1zM1104 632h1v1h-1zM1104 637h1v1h-1zM1104 641h1v1h-1zM1104 646h1v1h-1zM1104 651h1v1h-1zM1104 655h1v1h-1zM1104 660h1v1h-1zM1104 665h1v1h-1zM1104 669h1v1h-1zM1104 674h1v1h-1zM1104 679h1v1h-1zM1104 683h1v1h-1zM1104 688h1v1h-1zM1104 693h1v1h-1zM1104 697h1v1h-1zM1104 702h1v1h-1zM1104 707h1v1h-1zM1104 711h1v1h-1zM1104 716h1v1h-1zM1104 721h1v1h-1zM1104 725h1v1h-1zM1104 730h1v1h-1zM1104 735h1v1h-1zM1104 739h1v1h-1zM1104 744h1v1h-1zM1104 749h1v1h-1zM1104 753h1v1h-1zM1104 758h1v1h-1zM1104 763h1v1h-1zM1104 767h1v1h-1zM1104 772h1v1h-1zM1104 777h1v1h-1zM1104 781h1v1h-1zM1104 786h1v1h-1zM1104 791h1v1h-1zM1104 795h1v1h-1zM1104 800h1v1h-1zM1104 805h1v1h-1zM1104 809h1v1h-1zM1104 814h1v1h-1zM1104 819h1v1h-1zM1104 823h1v1h-1zM1104 828h1v1h-1zM1104 833h1v1h-1zM1104 837h1v1h-1zM1104 842h1v1h-1zM1104 847h1v1h-1zM1104 851h1v1h-1zM1104 856h1v1h-1zM1104 861h1v1h-1zM1104 865h1v1h-1zM1104 870h1v1h-1zM1104 875h1v1h-1zM1104 879h1v1h-1zM1104 884h1v1h-1zM1104 889h1v1h-1zM1104 893h1v1h-1zM1104 898h1v1h-1zM1104 903h1v1h-1zM1104 907h1v1h-1zM1104 912h1v1h-1zM1104 917h1v1h-1zM1104 921h1v1h-1zM1104 926h1v1h-1zM1104 931h1v1h-1zM1104 935h1v1h-1zM1104 940h1v1h-1zM1104 945h1v1h-1zM1104 949h1v1h-1zM1104 954h1v1h-1zM1104 959h1v1h-1zM1104 963h1v1h-1zM1104 968h1v1h-1zM1104 973h1v1h-1zM1104 977h1v1h-1zM1104 982h1v1h-1zM1104 987h1v1h-1zM1104 991h1v1h-1zM1279 58h1v1h-1zM1279 63h1v1h-1zM1279 67h1v1h-1zM1279 72h1v1h-1zM1279 77h1v1h-1zM1279 81h1v1h-1zM1279 86h1v1h-1zM1279 91h1v1h-1zM1279 95h1v1h-1zM1279 100h1v1h-1zM1279 105h1v1h-1zM1279 109h1v1h-1zM1279 114h1v1h-1zM1279 119h1v1h-1zM1279 123h1v1h-1zM1279 128h1v1h-1zM1279 133h1v1h-1zM1279 137h1v1h-1zM1279 142h1v1h-1zM1279 147h1v1h-1zM1279 151h1v1h-1zM1279 156h1v1h-1zM1279 161h1v1h-1zM1279 165h1v1h-1zM1279 170h1v1h-1zM1279 175h1v1h-1zM1279 179h1v1h-1zM1279 184h1v1h-1zM1279 189h1v1h-1zM1279 193h1v1h-1zM1279 198h1v1h-1zM1279 203h1v1h-1zM1279 207h1v1h-1zM1279 212h1v1h-1zM1279 217h1v1h-1zM1279 221h1v1h-1zM1279 226h1v1h-1zM1279 231h1v1h-1zM1279 235h1v1h-1zM1279 240h1v1h-1zM1279 245h1v1h-1zM1279 249h1v1h-1zM1279 254h1v1h-1zM1279 259h1v1h-1zM1279 263h1v1h-1zM1279 268h1v1h-1zM1279 273h1v1h-1zM1279 277h1v1h-1zM1279 282h1v1h-1zM1279 287h1v1h-1zM1279 291h1v1h-1zM1279 296h1v1h-1zM1279 301h1v1h-1zM1279 305h1v1h-1zM1279 310h1v1h-1zM1279 315h1v1h-1zM1279 319h1v1h-1zM1279 324h1v1h-1zM1279 329h1v1h-1zM1279 333h1v1h-1zM1279 338h1v1h-1zM1279 343h1v1h-1zM1279 347h1v1h-1zM1279 352h1v1h-1zM1279 357h1v1h-1zM1279 361h1v1h-1zM1279 366h1v1h-1zM1279 371h1v1h-1zM1279 375h1v1h-1zM1279 380h1v1h-1zM1279 385h1v1h-1zM1279 389h1v1h-1zM1279 394h1v1h-1zM1279 399h1v1h-1zM1279 403h1v1h-1zM1279 408h1v1h-1zM1279 413h1v1h-1zM1279 417h1v1h-1zM1279 422h1v1h-1zM1279 427h1v1h-1zM1279 431h1v1h-1zM1279 436h1v1h-1zM1279 441h1v1h-1zM1279 445h1v1h-1zM1279 450h1v1h-1zM1279 455h1v1h-1zM1279 459h1v1h-1zM1279 464h1v1h-1zM1279 469h1v1h-1zM1279 473h1v1h-1zM1279 478h1v1h-1zM1279 483h1v1h-1zM1279 487h1v1h-1zM1279 492h1v1h-1zM1279 497h1v1h-1zM1279 501h1v1h-1zM1279 506h1v1h-1zM1279 511h1v1h-1zM1279 515h1v1h-1zM1279 520h1v1h-1zM1279 525h1v1h-1zM1279 529h1v1h-1zM1279 534h1v1h-1zM1279 539h1v1h-1zM1279 543h1v1h-1zM1279 548h1v1h-1zM1279 553h1v1h-1zM1279 557h1v1h-1zM1279 562h1v1h-1zM1279 567h1v1h-1zM1279 571h1v1h-1zM1279 576h1v1h-1zM1279 581h1v1h-1zM1279 585h1v1h-1zM1279 590h1v1h-1zM1279 595h1v1h-1zM1279 599h1v1h-1zM1279 604h1v1h-1zM1279 609h1v1h-1zM1279 613h1v1h-1zM1279 618h1v1h-1zM1279 623h1v1h-1zM1279 627h1v1h-1zM1279 632h1v1h-1zM1279 637h1v1h-1zM1279 641h1v1h-1zM1279 646h1v1h-1zM1279 651h1v1h-1zM1279 655h1v1h-1zM1279 660h1v1h-1zM1279 665h1v1h-1zM1279 669h1v1h-1zM1279 674h1v1h-1zM1279 679h1v1h-1zM1279 683h1v1h-1zM1279 688h1v1h-1zM1279 693h1v1h-1zM1279 697h1v1h-1zM1279 702h1v1h-1zM1279 707h1v1h-1zM1279 711h1v1h-1zM1279 716h1v1h-1zM1279 721h1v1h-1zM1279 725h1v1h-1zM1279 730h1v1h-1zM1279 735h1v1h-1zM1279 739h1v1h-1zM1279 744h1v1h-1zM1279 749h1v1h-1zM1279 753h1v1h-1zM1279 758h1v1h-1zM1279 763h1v1h-1zM1279 767h1v1h-1zM1279 772h1v1h-1zM1279 777h1v1h-1zM1279 781h1v1h-1zM1279 786h1v1h-1zM1279 791h1v1h-1zM1279 795h1v1h-1zM1279 800h1v1h-1zM1279 805h1v1h-1zM1279 809h1v1h-1zM1279 814h1v1h-1zM1279 819h1v1h-1zM1279 823h1v1h-1zM1279 828h1v1h-1zM1279 833h1v1h-1zM1279 837h1v1h-1zM1279 842h1v1h-1zM1279 847h1v1h-1zM1279 851h1v1h-1zM1279 856h1v1h-1zM1279 861h1v1h-1zM1279 865h1v1h-1zM1279 870h1v1h-1zM1279 875h1v1h-1zM1279 879h1v1h-1zM1279 884h1v1h-1zM1279 889h1v1h-1zM1279 893h1v1h-1zM1279 898h1v1h-1zM1279 903h1v1h-1zM1279 907h1v1h-1zM1279 912h1v1h-1zM1279 917h1v1h-1zM1279 921h1v1h-1zM1279 926h1v1h-1zM1279 931h1v1h-1zM1279 935h1v1h-1zM1279 940h1v1h-1zM1279 945h1v1h-1zM1279 949h1v1h-1zM1279 954h1v1h-1zM1279 959h1v1h-1zM1279 963h1v1h-1zM1279 968h1v1h-1zM1279 973h1v1h-1zM1279 977h1v1h-1zM1279 982h1v1h-1zM1279 987h1v1h-1zM1279 991h1v1h-1zM1454 58h1v1h-1zM1454 63h1v1h-1zM1454 67h1v1h-1zM1454 72h1v1h-1zM1454 77h1v1h-1zM1454 81h1v1h-1zM1454 86h1v1h-1zM1454 91h1v1h-1zM1454 95h1v1h-1zM1454 100h1v1h-1zM1454 105h1v1h-1zM1454 109h1v1h-1zM1454 114h1v1h-1zM1454 119h1v1h-1zM1454 123h1v1h-1zM1454 128h1v1h-1zM1454 133h1v1h-1zM1454 137h1v1h-1zM1454 142h1v1h-1zM1454 147h1v1h-1zM1454 151h1v1h-1zM1454 156h1v1h-1zM1454 161h1v1h-1zM1454 165h1v1h-1zM1454 170h1v1h-1zM1454 175h1v1h-1zM1454 179h1v1h-1zM1454 184h1v1h-1zM1454 189h1v1h-1zM1454 193h1v1h-1zM1454 198h1v1h-1zM1454 203h1v1h-1zM1454 207h1v1h-1zM1454 212h1v1h-1zM1454 217h1v1h-1zM1454 221h1v1h-1zM1454 226h1v1h-1zM1454 231h1v1h-1zM1454 235h1v1h-1zM1454 240h1v1h-1zM1454 245h1v1h-1zM1454 249h1v1h-1zM1454 254h1v1h-1zM1454 259h1v1h-1zM1454 263h1v1h-1zM1454 268h1v1h-1zM1454 273h1v1h-1zM1454 277h1v1h-1zM1454 282h1v1h-1zM1454 287h1v1h-1zM1454 291h1v1h-1zM1454 296h1v1h-1zM1454 301h1v1h-1zM1454 305h1v1h-1zM1454 310h1v1h-1zM1454 315h1v1h-1zM1454 319h1v1h-1zM1454 324h1v1h-1zM1454 329h1v1h-1zM1454 333h1v1h-1zM1454 338h1v1h-1zM1454 343h1v1h-1zM1454 347h1v1h-1zM1454 352h1v1h-1zM1454 357h1v1h-1zM1454 361h1v1h-1zM1454 366h1v1h-1zM1454 371h1v1h-1zM1454 375h1v1h-1zM1454 380h1v1h-1zM1454 385h1v1h-1zM1454 389h1v1h-1zM1454 394h1v1h-1zM1454 399h1v1h-1zM1454 403h1v1h-1zM1454 408h1v1h-1zM1454 413h1v1h-1zM1454 417h1v1h-1zM1454 422h1v1h-1zM1454 427h1v1h-1zM1454 431h1v1h-1zM1454 436h1v1h-1zM1454 441h1v1h-1zM1454 445h1v1h-1zM1454 450h1v1h-1zM1454 455h1v1h-1zM1454 459h1v1h-1zM1454 464h1v1h-1zM1454 469h1v1h-1zM1454 473h1v1h-1zM1454 478h1v1h-1zM1454 483h1v1h-1zM1454 487h1v1h-1zM1454 492h1v1h-1zM1454 497h1v1h-1zM1454 501h1v1h-1zM1454 506h1v1h-1zM1454 511h1v1h-1zM1454 515h1v1h-1zM1454 520h1v1h-1zM1454 525h1v1h-1zM1454 529h1v1h-1zM1454 534h1v1h-1zM1454 539h1v1h-1zM1454 543h1v1h-1zM1454 548h1v1h-1zM1454 553h1v1h-1zM1454 557h1v1h-1zM1454 562h1v1h-1zM1454 567h1v1h-1zM1454 571h1v1h-1zM1454 576h1v1h-1zM1454 581h1v1h-1zM1454 585h1v1h-1zM1454 590h1v1h-1zM1454 595h1v1h-1zM1454 599h1v1h-1zM1454 604h1v1h-1zM1454 609h1v1h-1zM1454 613h1v1h-1zM1454 618h1v1h-1zM1454 623h1v1h-1zM1454 627h1v1h-1zM1454 632h1v1h-1zM1454 637h1v1h-1zM1454 641h1v1h-1zM1454 646h1v1h-1zM1454 651h1v1h-1zM1454 655h1v1h-1zM1454 660h1v1h-1zM1454 665h1v1h-1zM1454 669h1v1h-1zM1454 674h1v1h-1zM1454 679h1v1h-1zM1454 683h1v1h-1zM1454 688h1v1h-1zM1454 693h1v1h-1zM1454 697h1v1h-1zM1454 702h1v1h-1zM1454 707h1v1h-1zM1454 711h1v1h-1zM1454 716h1v1h-1zM1454 721h1v1h-1zM1454 725h1v1h-1zM1454 730h1v1h-1zM1454 735h1v1h-1zM1454 739h1v1h-1zM1454 744h1v1h-1zM1454 749h1v1h-1zM1454 753h1v1h-1zM1454 758h1v1h-1zM1454 763h1v1h-1zM1454 767h1v1h-1zM1454 772h1v1h-1zM1454 777h1v1h-1zM1454 781h1v1h-1zM1454 786h1v1h-1zM1454 791h1v1h-1zM1454 795h1v1h-1zM1454 800h1v1h-1zM1454 805h1v1h-1zM1454 809h1v1h-1zM1454 814h1v1h-1zM1454 819h1v1h-1zM1454 823h1v1h-1zM1454 828h1v1h-1zM1454 833h1v1h-1zM1454 837h1v1h-1zM1454 842h1v1h-1zM1454 847h1v1h-1zM1454 851h1v1h-1zM1454 856h1v1h-1zM1454 861h1v1h-1zM1454 865h1v1h-1zM1454 870h1v1h-1zM1454 875h1v1h-1zM1454 879h1v1h-1zM1454 884h1v1h-1zM1454 889h1v1h-1zM1454 893h1v1h-1zM1454 898h1v1h-1zM1454 903h1v1h-1zM1454 907h1v1h-1zM1454 912h1v1h-1zM1454 917h1v1h-1zM1454 921h1v1h-1zM1454 926h1v1h-1zM1454 931h1v1h-1zM1454 935h1v1h-1zM1454 940h1v1h-1zM1454 945h1v1h-1zM1454 949h1v1h-1zM1454 954h1v1h-1zM1454 959h1v1h-1zM1454 963h1v1h-1zM1454 968h1v1h-1zM1454 973h1v1h-1zM1454 977h1v1h-1zM1454 982h1v1h-1zM1454 987h1v1h-1zM1454 991h1v1h-1zM1629 58h1v1h-1zM1629 63h1v1h-1zM1629 67h1v1h-1zM1629 72h1v1h-1zM1629 77h1v1h-1zM1629 81h1v1h-1zM1629 86h1v1h-1zM1629 91h1v1h-1zM1629 95h1v1h-1zM1629 100h1v1h-1zM1629 105h1v1h-1zM1629 109h1v1h-1zM1629 114h1v1h-1zM1629 119h1v1h-1zM1629 123h1v1h-1zM1629 128h1v1h-1zM1629 133h1v1h-1zM1629 137h1v1h-1zM1629 142h1v1h-1zM1629 147h1v1h-1zM1629 151h1v1h-1zM1629 156h1v1h-1zM1629 161h1v1h-1zM1629 165h1v1h-1zM1629 170h1v1h-1zM1629 175h1v1h-1zM1629 179h1v1h-1zM1629 184h1v1h-1zM1629 189h1v1h-1zM1629 193h1v1h-1zM1629 198h1v1h-1zM1629 203h1v1h-1zM1629 207h1v1h-1zM1629 212h1v1h-1zM1629 217h1v1h-1zM1629 221h1v1h-1zM1629 226h1v1h-1zM1629 231h1v1h-1zM1629 235h1v1h-1zM1629 240h1v1h-1zM1629 245h1v1h-1zM1629 249h1v1h-1zM1629 254h1v1h-1zM1629 259h1v1h-1zM1629 263h1v1h-1zM1629 268h1v1h-1zM1629 273h1v1h-1zM1629 277h1v1h-1zM1629 282h1v1h-1zM1629 287h1v1h-1zM1629 291h1v1h-1zM1629 296h1v1h-1zM1629 301h1v1h-1zM1629 305h1v1h-1zM1629 310h1v1h-1zM1629 315h1v1h-1zM1629 319h1v1h-1zM1629 324h1v1h-1zM1629 329h1v1h-1zM1629 333h1v1h-1zM1629 338h1v1h-1zM1629 343h1v1h-1zM1629 347h1v1h-1zM1629 352h1v1h-1zM1629 357h1v1h-1zM1629 361h1v1h-1zM1629 366h1v1h-1zM1629 371h1v1h-1zM1629 375h1v1h-1zM1629 380h1v1h-1zM1629 385h1v1h-1zM1629 389h1v1h-1zM1629 394h1v1h-1zM1629 399h1v1h-1zM1629 403h1v1h-1zM1629 408h1v1h-1zM1629 413h1v1h-1zM1629 417h1v1h-1zM1629 422h1v1h-1zM1629 427h1v1h-1zM1629 431h1v1h-1zM1629 436h1v1h-1zM1629 441h1v1h-1zM1629 445h1v1h-1zM1629 450h1v1h-1zM1629 455h1v1h-1zM1629 459h1v1h-1zM1629 464h1v1h-1zM1629 469h1v1h-1zM1629 473h1v1h-1zM1629 478h1v1h-1zM1629 483h1v1h-1zM1629 487h1v1h-1zM1629 492h1v1h-1zM1629 497h1v1h-1zM1629 501h1v1h-1zM1629 506h1v1h-1zM1629 511h1v1h-1zM1629 515h1v1h-1zM1629 520h1v1h-1zM1629 525h1v1h-1zM1629 529h1v1h-1zM1629 534h1v1h-1zM1629 539h1v1h-1zM1629 543h1v1h-1zM1629 548h1v1h-1zM1629 553h1v1h-1zM1629 557h1v1h-1zM1629 562h1v1h-1zM1629 567h1v1h-1zM1629 571h1v1h-1zM1629 576h1v1h-1zM1629 581h1v1h-1zM1629 585h1v1h-1zM1629 590h1v1h-1zM1629 595h1v1h-1zM1629 599h1v1h-1zM1629 604h1v1h-1zM1629 609h1v1h-1zM1629 613h1v1h-1zM1629 618h1v1h-1zM1629 623h1v1h-1zM1629 627h1v1h-1zM1629 632h1v1h-1zM1629 637h1v1h-1zM1629 641h1v1h-1zM1629 646h1v1h-1zM1629 651h1v1h-1zM1629 655h1v1h-1zM1629 660h1v1h-1zM1629 665h1v1h-1zM1629 669h1v1h-1zM1629 674h1v1h-1zM1629 679h1v1h-1zM1629 683h1v1h-1zM1629 688h1v1h-1zM1629 693h1v1h-1zM1629 697h1v1h-1zM1629 702h1v1h-1zM1629 707h1v1h-1zM1629 711h1v1h-1zM1629 716h1v1h-1zM1629 721h1v1h-1zM1629 725h1v1h-1zM1629 730h1v1h-1zM1629 735h1v1h-1zM1629 739h1v1h-1zM1629 744h1v1h-1zM1629 749h1v1h-1zM1629 753h1v1h-1zM1629 758h1v1h-1zM1629 763h1v1h-1zM1629 767h1v1h-1zM1629 772h1v1h-1zM1629 777h1v1h-1zM1629 781h1v1h-1zM1629 786h1v1h-1zM1629 791h1v1h-1zM1629 795h1v1h-1zM1629 800h1v1h-1zM1629 805h1v1h-1zM1629 809h1v1h-1zM1629 814h1v1h-1zM1629 819h1v1h-1zM1629 823h1v1h-1zM1629 828h1v1h-1zM1629 833h1v1h-1zM1629 837h1v1h-1zM1629 842h1v1h-1zM1629 847h1v1h-1zM1629 851h1v1h-1zM1629 856h1v1h-1zM1629 861h1v1h-1zM1629 865h1v1h-1zM1629 870h1v1h-1zM1629 875h1v1h-1zM1629 879h1v1h-1zM1629 884h1v1h-1zM1629 889h1v1h-1zM1629 893h1v1h-1zM1629 898h1v1h-1zM1629 903h1v1h-1zM1629 907h1v1h-1zM1629 912h1v1h-1zM1629 917h1v1h-1zM1629 921h1v1h-1zM1629 926h1v1h-1zM1629 931h1v1h-1zM1629 935h1v1h-1zM1629 940h1v1h-1zM1629 945h1v1h-1zM1629 949h1v1h-1zM1629 954h1v1h-1zM1629 959h1v1h-1zM1629 963h1v1h-1zM1629 968h1v1h-1zM1629 973h1v1h-1zM1629 977h1v1h-1zM1629 982h1v1h-1zM1629 987h1v1h-1zM1629 991h1v1h-1z" fill="#c4c4c4"/>
<rect x="3" y="290" width="1748" height="2" fill="#7a7a7a"/>
<rect x="3" y="524" width="1748" height="2" fill="#7a7a7a"/>
<rect x="3" y="758" width="1748" height="2" fill="#7a7a7a"/>
<path d="M3 267h5v1h-5zM13 267h5v1h-5zM23 267h5v1h-5zM33 267h5v1h-5zM43 267h5v1h-5zM53 267h5v1h-5zM63 267h5v1h-5zM73 267h5v1h-5zM83 267h5v1h-5zM93 267h5v1h-5zM103 267h5v1h-5zM113 267h5v1h-5zM123 267h5v1h-5zM133 267h5v1h-5zM143 267h5v1h-5zM153 267h5v1h-5zM163 267h5v1h-5zM173 267h5v1h-5zM183 267h5v1h-5zM193 267h5v1h-5zM203 267h5v1h-5zM213 267h5v1h-5zM223 267h5v1h-5zM233 267h5v1h-5zM243 267h5v1h-5zM253 267h5v1h-5zM263 267h5v1h-5zM273 267h5v1h-5zM283 267h5v1h-5zM293 267h5v1h-5zM303 267h5v1h-5zM313 267h5v1h-5zM323 267h5v1h-5zM333 267h5v1h-5zM343 267h5v1h-5zM353 267h5v1h-5zM363 267h5v1h-5zM373 267h5v1h-5zM383 267h5v1h-5zM393 267h5v1h-5zM403 267h5v1h-5zM413 267h5v1h-5zM423 267h5v1h-5zM433 267h5v1h-5zM443 267h5v1h-5zM453 267h5v1h-5zM463 267h5v1h-5zM473 267h5v1h-5zM483 267h5v1h-5zM493 267h5v1h-5zM503 267h5v1h-5zM513 267h5v1h-5zM523 267h5v1h-5zM533 267h5v1h-5zM543 267h5v1h-5zM553 267h5v1h-5zM563 267h5v1h-5zM573 267h5v1h-5zM583 267h5v1h-5zM593 267h5v1h-5zM603 267h5v1h-5zM613 267h5v1h-5zM623 267h5v1h-5zM633 267h5v1h-5zM643 267h5v1h-5zM653 267h5v1h-5zM663 267h5v1h-5zM673 267h5v1h-5zM683 267h5v1h-5zM693 267h5v1h-5zM703 267h5v1h-5zM713 267h5v1h-5zM723 267h5v1h-5zM733 267h5v1h-5zM743 267h5v1h-5zM753 267h5v1h-5zM763 267h5v1h-5zM773 267h5v1h-5zM783 267h5v1h-5zM793 267h5v1h-5zM803 267h5v1h-5zM813 267h5v1h-5zM823 267h5v1h-5zM833 267h5v1h-5zM843 267h5v1h-5zM853 267h5v1h-5zM863 267h5v1h-5zM873 267h5v1h-5zM883 267h5v1h-5zM893 267h5v1h-5zM903 267h5v1h-5zM913 267h5v1h-5zM923 267h5v1h-5zM933 267h5v1h-5zM943 267h5v1h-5zM953 267h5v1h-5zM963 267h5v1h-5zM973 267h5v1h-5zM983 267h5v1h-5zM993 267h5v1h-5zM1003 267h5v1h-5zM1013 267h5v1h-5zM1023 267h5v1h-5zM1033 267h5v1h-5zM1043 267h5v1h-5zM1053 267h5v1h-5zM1063 267h5v1h-5zM1073 267h5v1h-5zM1083 267h5v1h-5zM1093 267h5v1h-5zM1103 267h5v1h-5zM1113 267h5v1h-5zM1123 267h5v1h-5zM1133 267h5v1h-5zM1143 267h5v1h-5zM1153 267h5v1h-5zM1163 267h5v1h-5zM1173 267h5v1h-5zM1183 267h5v1h-5zM1193 267h5v1h-5zM1203 267h5v1h-5zM1213 267h5v1h-5zM1223 267h5v1h-5zM1233 267h5v1h-5zM1243 267h5v1h-5zM1253 267h5v1h-5zM1263 267h5v1h-5zM1273 267h5v1h-5zM1283 267h5v1h-5zM1293 267h5v1h-5zM1303 267h5v1h-5zM1313 267h5v1h-5zM1323 267h5v1h-5zM1333 267h5v1h-5zM1343 267h5v1h-5zM1353 267h5v1h-5zM1363 267h5v1h-5zM1373 267h5v1h-5zM1383 267h5v1h-5zM1393 267h5v1h-5zM1403 267h5v1h-5zM1413 267h5v1h-5zM1423 267h5v1h-5zM1433 267h5v1h-5zM1443 267h5v1h-5zM1453 267h5v1h-5zM1463 267h5v1h-5zM1473 267h5v1h-5zM1483 267h5v1h-5zM1493 267h5v1h-5zM1503 267h5v1h-5zM1513 267h5v1h-5zM1523 267h5v1h-5zM1533 267h5v1h-5zM1543 267h5v1h-5zM1553 267h5v1h-5zM1563 267h5v1h-5zM1573 267h5v1h-5zM1583 267h5v1h-5zM1593 267h5v1h-5zM1603 267h5v1h-5zM1613 267h5v1h-5zM1623 267h5v1h-5zM1633 267h5v1h-5zM1643 267h5v1h-5zM1653 267h5v1h-5zM1663 267h5v1h-5zM1673 267h5v1h-5zM1683 267h5v1h-5zM1693 267h5v1h-5zM1703 267h5v1h-5zM1713 267h5v1h-5z" fill="#cfcfcf"/>
<path d="M3 431h5v1h-5zM13 431h5v1h-5zM23 431h5v1h-5zM33 431h5v1h-5zM43 431h5v1h-5zM53 431h5v1h-5zM63 431h5v1h-5zM73 431h5v1h-5zM83 431h5v1h-5zM93 431h5v1h-5zM103 431h5v1h-5zM113 431h5v1h-5zM123 431h5v1h-5zM133 431h5v1h-5zM143 431h5v1h-5zM153 431h5v1h-5zM163 431h5v1h-5zM173 431h5v1h-5zM183 431h5v1h-5zM193 431h5v1h-5zM203 431h5v1h-5zM213 431h5v1h-5zM223 431h5v1h-5zM233 431h5v1h-5zM243 431h5v1h-5zM253 431h5v1h-5zM263 431h5v1h-5zM273 431h5v1h-5zM283 431h5v1h-5zM293 431h5v1h-5zM303 431h5v1h-5zM313 431h5v1h-5zM323 431h5v1h-5zM333 431h5v1h-5zM343 431h5v1h-5zM353 431h5v1h-5zM363 431h5v1h-5zM373 431h5v1h-5zM383 431h5v1h-5zM393 431h5v1h-5zM403 431h5v1h-5zM413 431h5v1h-5zM423 431h5v1h-5zM433 431h5v1h-5zM443 431h5v1h-5zM453 431h5v1h-5zM463 431h5v1h-5zM473 431h5v1h-5zM483 431h5v1h-5zM493 431h5v1h-5zM503 431h5v1h-5zM513 431h5v1h-5zM523 431h5v1h-5zM533 431h5v1h-5zM543 431h5v1h-5zM553 431h5v1h-5zM563 431h5v1h-5zM573 431h5v1h-5zM583 431h5v1h-5zM593 431h5v1h-5zM603 431h5v1h-5zM613 431h5v1h-5zM623 431h5v1h-5zM633 431h5v1h-5zM643 431h5v1h-5zM653 431h5v1h-5zM663 431h5v1h-5zM673 431h5v1h-5zM683 431h5v1h-5zM693 431h5v1h-5zM703 431h5v1h-5zM713 431h5v1h-5zM723 431h5v1h-5zM733 431h5v1h-5zM743 431h5v1h-5zM753 431h5v1h-5zM763 431h5v1h-5zM773 431h5v1h-5zM783 431h5v1h-5zM793 431h5v1h-5zM803 431h5v1h-5zM813 431h5v1h-5zM823 431h5v1h-5zM833 431h5v1h-5zM843 431h5v1h-5zM853 431h5v1h-5zM863 431h5v1h-5zM873 431h5v1h-5zM883 431h5v1h-5zM893 431h5v1h-5zM903 431h5v1h-5zM913 431h5v1h-5zM923 431h5v1h-5zM933 431h5v1h-5zM943 431h5v1h-5zM953 431h5v1h-5zM963 431h5v1h-5zM973 431h5v1h-5zM983 431h5v1h-5zM993 431h5v1h-5zM1003 431h5v1h-5zM1013 431h5v1h-5zM1023 431h5v1h-5zM1033 431h5v1h-5zM1043 431h5v1h-5zM1053 431h5v1h-5zM1063 431h5v1h-5zM1073 431h5v1h-5zM1083 431h5v1h-5zM1093 431h5v1h-5zM1103 431h5v1h-5zM1113 431h5v1h-5zM1123 431h5v1h-5zM1133 431h5v1h-5zM1143 431h5v1h-5zM1153 431h5v1h-5zM1163 431h5v1h-5zM1173 431h5v1h-5zM1183 431h5v1h-5zM1193 431h5v1h-5zM1203 431h5v1h-5zM1213 431h5v1h-5zM1223 431h5v1h-5zM1233 431h5v1h-5zM1243 431h5v1h-5zM1253 431h5v1h-5zM1263 431h5v1h-5zM1273 431h5v1h-5zM1283 431h5v1h-5zM1293 431h5v1h-5zM1303 431h5v1h-5zM1313 431h5v1h-5zM1323 431h5v1h-5zM1333 431h5v1h-5zM1343 431h5v1h-5zM1353 431h5v1h-5zM1363 431h5v1h-5zM1373 431h5v1h-5zM1383 431h5v1h-5zM1393 431h5v1h-5zM1403 431h5v1h-5zM1413 431h5v1h-5zM1423 431h5v1h-5zM1433 431h5v1h-5zM1443 431h5v1h-5zM1453 431h5v1h-5zM1463 431h5v1h-5zM1473 431h5v1h-5zM1483 431h5v1h-5zM1493 431h5v1h-5zM1503 431h5v1h-5zM1513 431h5v1h-5zM1523 431h5v1h-5zM1533 431h5v1h-5zM1543 431h5v1h-5zM1553 431h5v1h-5zM1563 431h5v1h-5zM1573 431h5v1h-5zM1583 431h5v1h-5zM1593 431h5v1h-5zM1603 431h5v1h-5zM1613 431h5v1h-5zM1623 431h5v1h-5zM1633 431h5v1h-5zM1643 431h5v1h-5zM1653 431h5v1h-5zM1663 431h5v1h-5zM1673 431h5v1h-5zM1683 431h5v1h-5zM1693 431h5v1h-5zM1703 431h5v1h-5zM1713 431h5v1h-5z" fill="#cfcfcf"/>
<path d="M3 735h5v1h-5zM13 735h5v1h-5zM23 735h5v1h-5zM33 735h5v1h-5zM43 735h5v1h-5zM53 735h5v1h-5zM63 735h5v1h-5zM73 735h5v1h-5zM83 735h5v1h-5zM93 735h5v1h-5zM103 735h5v1h-5zM113 735h5v1h-5zM123 735h5v1h-5zM133 735h5v1h-5zM143 735h5v1h-5zM153 735h5v1h-5zM163 735h5v1h-5zM173 735h5v1h-5zM183 735h5v1h-5zM193 735h5v1h-5zM203 735h5v1h-5zM213 735h5v1h-5zM223 735h5v1h-5zM233 735h5v1h-5zM243 735h5v1h-5zM253 735h5v1h-5zM263 735h5v1h-5zM273 735h5v1h-5zM283 735h5v1h-5zM293 735h5v1h-5zM303 735h5v1h-5zM313 735h5v1h-5zM323 735h5v1h-5zM333 735h5v1h-5zM343 735h5v1h-5zM353 735h5v1h-5zM363 735h5v1h-5zM373 735h5v1h-5zM383 735h5v1h-5zM393 735h5v1h-5zM403 735h5v1h-5zM413 735h5v1h-5zM423 735h5v1h-5zM433 735h5v1h-5zM443 735h5v1h-5zM453 735h5v1h-5zM463 735h5v1h-5zM473 735h5v1h-5zM483 735h5v1h-5zM493 735h5v1h-5zM503 735h5v1h-5zM513 735h5v1h-5zM523 735h5v1h-5zM533 735h5v1h-5zM543 735h5v1h-5zM553 735h5v1h-5zM563 735h5v1h-5zM573 735h5v1h-5zM583 735h5v1h-5zM593 735h5v1h-5zM603 735h5v1h-5zM613 735h5v1h-5zM623 735h5v1h-5zM633 735h5v1h-5zM643 735h5v1h-5zM653 735h5v1h-5zM663 735h5v1h-5zM673 735h5v1h-5zM683 735h5v1h-5zM693 735h5v1h-5zM703 735h5v1h-5zM713 735h5v1h-5zM723 735h5v1h-5zM733 735h5v1h-5zM743 735h5v1h-5zM753 735h5v1h-5zM763 735h5v1h-5zM773 735h5v1h-5zM783 735h5v1h-5zM793 735h5v1h-5zM803 735h5v1h-5zM813 735h5v1h-5zM823 735h5v1h-5zM833 735h5v1h-5zM843 735h5v1h-5zM853 735h5v1h-5zM863 735h5v1h-5zM873 735h5v1h-5zM883 735h5v1h-5zM893 735h5v1h-5zM903 735h5v1h-5zM913 735h5v1h-5zM923 735h5v1h-5zM933 735h5v1h-5zM943 735h5v1h-5zM953 735h5v1h-5zM963 735h5v1h-5zM973 735h5v1h-5zM983 735h5v1h-5zM993 735h5v1h-5zM1003 735h5v1h-5zM1013 735h5v1h-5zM1023 735h5v1h-5zM1033 735h5v1h-5zM1043 735h5v1h-5zM1053 735h5v1h-5zM1063 735h5v1h-5zM1073 735h5v1h-5zM1083 735h5v1h-5zM1093 735h5v1h-5zM1103 735h5v1h-5zM1113 735h5v1h-5zM1123 735h5v1h-5zM1133 735h5v1h-5zM1143 735h5v1h-5zM1153 735h5v1h-5zM1163 735h5v1h-5zM1173 735h5v1h-5zM1183 735h5v1h-5zM1193 735h5v1h-5zM1203 735h5v1h-5zM1213 735h5v1h-5zM1223 735h5v1h-5zM1233 735h5v1h-5zM1243 735h5v1h-5zM1253 735h5v1h-5zM1263 735h5v1h-5zM1273 735h5v1h-5zM1283 735h5v1h-5zM1293 735h5v1h-5zM1303 735h5v1h-5zM1313 735h5v1h-5zM1323 735h5v1h-5zM1333 735h5v1h-5zM1343 735h5v1h-5zM1353 735h5v1h-5zM1363 735h5v1h-5zM1373 735h5v1h-5zM1383 735h5v1h-5zM1393 735h5v1h-5zM1403 735h5v1h-5zM1413 735h5v1h-5zM1423 735h5v1h-5zM1433 735h5v1h-5zM1443 735h5v1h-5zM1453 735h5v1h-5zM1463 735h5v1h-5zM1473 735h5v1h-5zM1483 735h5v1h-5zM1493 735h5v1h-5zM1503 735h5v1h-5zM1513 735h5v1h-5zM1523 735h5v1h-5zM1533 735h5v1h-5zM1543 735h5v1h-5zM1553 735h5v1h-5zM1563 735h5v1h-5zM1573 735h5v1h-5zM1583 735h5v1h-5zM1593 735h5v1h-5zM1603 735h5v1h-5zM1613 735h5v1h-5zM1623 735h5v1h-5zM1633 735h5v1h-5zM1643 735h5v1h-5zM1653 735h5v1h-5zM1663 735h5v1h-5zM1673 735h5v1h-5zM1683 735h5v1h-5zM1693 735h5v1h-5zM1703 735h5v1h-5zM1713 735h5v1h-5z" fill="#cfcfcf"/>
<path d="M3 963h5v1h-5zM13 963h5v1h-5zM23 963h5v1h-5zM33 963h5v1h-5zM43 963h5v1h-5zM53 963h5v1h-5zM63 963h5v1h-5zM73 963h5v1h-5zM83 963h5v1h-5zM93 963h5v1h-5zM103 963h5v1h-5zM113 963h5v1h-5zM123 963h5v1h-5zM133 963h5v1h-5zM143 963h5v1h-5zM153 963h5v1h-5zM163 963h5v1h-5zM173 963h5v1h-5zM183 963h5v1h-5zM193 963h5v1h-5zM203 963h5v1h-5zM213 963h5v1h-5zM223 963h5v1h-5zM233 963h5v1h-5zM243 963h5v1h-5zM253 963h5v1h-5zM263 963h5v1h-5zM273 963h5v1h-5zM283 963h5v1h-5zM293 963h5v1h-5zM303 963h5v1h-5zM313 963h5v1h-5zM323 963h5v1h-5zM333 963h5v1h-5zM343 963h5v1h-5zM353 963h5v1h-5zM363 963h5v1h-5zM373 963h5v1h-5zM383 963h5v1h-5zM393 963h5v1h-5zM403 963h5v1h-5zM413 963h5v1h-5zM423 963h5v1h-5zM433 963h5v1h-5zM443 963h5v1h-5zM453 963h5v1h-5zM463 963h5v1h-5zM473 963h5v1h-5zM483 963h5v1h-5zM493 963h5v1h-5zM503 963h5v1h-5zM513 963h5v1h-5zM523 963h5v1h-5zM533 963h5v1h-5zM543 963h5v1h-5zM553 963h5v1h-5zM563 963h5v1h-5zM573 963h5v1h-5zM583 963h5v1h-5zM593 963h5v1h-5zM603 963h5v1h-5zM613 963h5v1h-5zM623 963h5v1h-5zM633 963h5v1h-5zM643 963h5v1h-5zM653 963h5v1h-5zM663 963h5v1h-5zM673 963h5v1h-5zM683 963h5v1h-5zM693 963h5v1h-5zM703 963h5v1h-5zM713 963h5v1h-5zM723 963h5v1h-5zM733 963h5v1h-5zM743 963h5v1h-5zM753 963h5v1h-5zM763 963h5v1h-5zM773 963h5v1h-5zM783 963h5v1h-5zM793 963h5v1h-5zM803 963h5v1h-5zM813 963h5v1h-5zM823 963h5v1h-5zM833 963h5v1h-5zM843 963h5v1h-5zM853 963h5v1h-5zM863 963h5v1h-5zM873 963h5v1h-5zM883 963h5v1h-5zM893 963h5v1h-5zM903 963h5v1h-5zM913 963h5v1h-5zM923 963h5v1h-5zM933 963h5v1h-5zM943 963h5v1h-5zM953 963h5v1h-5zM963 963h5v1h-5zM973 963h5v1h-5zM983 963h5v1h-5zM993 963h5v1h-5zM1003 963h5v1h-5zM1013 963h5v1h-5zM1023 963h5v1h-5zM1033 963h5v1h-5zM1043 963h5v1h-5zM1053 963h5v1h-5zM1063 963h5v1h-5zM1073 963h5v1h-5zM1083 963h5v1h-5zM1093 963h5v1h-5zM1103 963h5v1h-5zM1113 963h5v1h-5zM1123 963h5v1h-5zM1133 963h5v1h-5zM1143 963h5v1h-5zM1153 963h5v1h-5zM1163 963h5v1h-5zM1173 963h5v1h-5zM1183 963h5v1h-5zM1193 963h5v1h-5zM1203 963h5v1h-5zM1213 963h5v1h-5zM1223 963h5v1h-5zM1233 963h5v1h-5zM1243 963h5v1h-5zM1253 963h5v1h-5zM1263 963h5v1h-5zM1273 963h5v1h-5zM1283 963h5v1h-5zM1293 963h5v1h-5zM1303 963h5v1h-5zM1313 963h5v1h-5zM1323 963h5v1h-5zM1333 963h5v1h-5zM1343 963h5v1h-5zM1353 963h5v1h-5zM1363 963h5v1h-5zM1373 963h5v1h-5zM1383 963h5v1h-5zM1393 963h5v1h-5zM1403 963h5v1h-5zM1413 963h5v1h-5zM1423 963h5v1h-5zM1433 963h5v1h-5zM1443 963h5v1h-5zM1453 963h5v1h-5zM1463 963h5v1h-5zM1473 963h5v1h-5zM1483 963h5v1h-5zM1493 963h5v1h-5zM1503 963h5v1h-5zM1513 963h5v1h-5zM1523 963h5v1h-5zM1533 963h5v1h-5zM1543 963h5v1h-5zM1553 963h5v1h-5zM1563 963h5v1h-5zM1573 963h5v1h-5zM1583 963h5v1h-5zM1593 963h5v1h-5zM1603 963h5v1h-5zM1613 963h5v1h-5zM1623 963h5v1h-5zM1633 963h5v1h-5zM1643 963h5v1h-5zM1653 963h5v1h-5zM1663 963h5v1h-5zM1673 963h5v1h-5zM1683 963h5v1h-5zM1693 963h5v1h-5zM1703 963h5v1h-5zM1713 963h5v1h-5z" fill="#cfcfcf"/>
<path d="M55 96h1v5h-1zM55 106h1v5h-1zM55 116h1v5h-1zM55 126h1v5h-1zM55 136h1v5h-1zM55 146h1v5h-1zM55 156h1v5h-1zM55 166h1v5h-1zM55 176h1v5h-1zM55 186h1v5h-1zM55 196h1v5h-1zM55 206h1v5h-1zM55 216h1v5h-1zM55 226h1v5h-1zM55 236h1v5h-1zM55 246h1v5h-1zM55 256h1v5h-1zM55 266h1v5h-1zM55 276h1v5h-1zM55 286h1v5h-1zM55 296h1v5h-1zM55 306h1v5h-1zM55 316h1v5h-1zM55 326h1v5h-1zM55 336h1v5h-1zM55 346h1v5h-1zM55 356h1v5h-1zM55 366h1v5h-1zM55 376h1v5h-1zM55 386h1v5h-1zM55 396h1v5h-1zM55 406h1v5h-1zM55 416h1v5h-1zM55 426h1v5h-1zM55 436h1v5h-1zM55 446h1v5h-1zM55 456h1v5h-1zM55 466h1v5h-1zM55 476h1v5h-1zM55 486h1v5h-1zM55 496h1v5h-1zM55 506h1v5h-1zM55 516h1v5h-1zM55 526h1v5h-1zM55 536h1v5h-1zM55 546h1v5h-1zM55 556h1v5h-1zM55 566h1v5h-1zM55 576h1v5h-1zM55 586h1v5h-1zM55 596h1v5h-1zM55 606h1v5h-1zM55 616h1v5h-1zM55 626h1v5h-1zM55 636h1v5h-1zM55 646h1v5h-1zM55 656h1v5h-1zM55 666h1v5h-1zM55 676h1v5h-1zM55 686h1v5h-1zM55 696h1v5h-1zM55 706h1v5h-1zM55 716h1v5h-1zM55 726h1v5h-1zM55 736h1v5h-1zM55 746h1v5h-1zM55 756h1v5h-1zM55 766h1v5h-1zM55 776h1v5h-1zM55 786h1v5h-1zM55 796h1v5h-1zM55 806h1v5h-1zM55 816h1v5h-1zM55 826h1v5h-1zM55 836h1v5h-1zM55 846h1v5h-1zM55 856h1v5h-1zM55 866h1v5h-1zM55 876h1v5h-1zM55 886h1v5h-1zM55 896h1v5h-1zM55 906h1v5h-1zM55 916h1v5h-1zM55 926h1v5h-1zM55 936h1v5h-1zM55 946h1v5h-1zM55 956h1v5h-1zM55 966h1v5h-1zM55 976h1v5h-1zM55 986h1v5h-1z" fill="#cfcfcf"/>
<path d="M3.0 265.5 L55.5 265.5 L56.0 260.0 L57.0 265.0 L63.0 264.5 L64.0 255.5 L65.0 270.5 L66.0 258.0 L68.0 259.0 L71.7 254.0 L80.0 248.0 L90.0 243.0 L104.0 236.5 L118.3 230.8 L140.0 225.5 L161.7 221.7 L166.7 221.0 L178.3 221.0 L186.7 228.0 L198.3 229.7 L213.3 231.7 L223.3 234.2 L233.3 238.0 L248.3 239.2 L248.3 238.9 L249.8 239.6 L251.3 238.7 L252.8 239.9 L254.3 238.7 L255.8 237.8 L257.3 238.9 L258.8 237.9 L260.3 237.9 L261.8 238.3 L263.3 238.8 L264.8 237.7 L266.3 236.9 L267.8 238.6 L269.3 237.8 L270.8 239.1 L272.4 239.5 L273.9 238.4 L275.4 238.4 L276.9 238.7 L278.4 239.2 L279.9 239.3 L281.4 239.2 L282.9 239.3 L284.4 240.1 L285.9 239.3 L287.4 238.8 L288.9 239.4 L290.4 238.3 L291.9 238.1 L293.4 239.6 L294.9 238.7 L296.4 238.1 L297.9 236.1 L299.4 236.0 L300.9 236.2 L302.4 234.6 L303.9 235.6 L305.4 236.0 L306.9 234.6 L308.4 235.5 L309.9 235.4 L311.4 235.8 L312.9 235.1 L314.4 235.7 L315.9 236.3 L317.5 235.0 L319.0 235.2 L320.5 237.4 L322.0 239.4 L323.5 238.5 L325.0 238.8 L326.5 239.0 L328.0 238.1 L329.5 237.5 L331.0 236.7 L332.5 236.2 L334.0 236.4 L335.5 235.5 L337.0 235.4 L338.5 236.4 L340.0 234.8 L341.5 235.6 L343.0 236.3 L344.5 235.4 L346.0 234.9 L347.5 236.2 L349.1 235.4 L350.6 235.5 L352.1 236.6 L353.6 238.2 L355.1 237.7 L356.6 238.3 L358.1 238.6 L359.6 239.8 L361.1 239.0 L362.6 239.4 L364.2 237.4 L365.7 236.8 L367.2 237.2 L368.7 237.9 L370.2 237.0 L371.7 236.3 L373.2 236.1 L374.7 237.3 L376.2 237.0 L377.7 238.7 L379.2 239.5 L380.8 238.0 L382.3 237.6 L383.8 238.6 L385.3 238.3 L386.8 238.4 L388.3 237.0 L389.8 235.8 L391.3 235.8 L392.8 237.2 L394.3 236.4 L395.8 236.5 L397.4 236.7 L398.9 237.0 L400.4 237.1 L401.9 238.4 L403.4 236.8 L404.9 235.7 L406.4 237.4 L407.9 237.5 L409.4 237.5 L410.9 235.8 L412.5 236.5 L414.0 236.7 L415.5 235.2 L417.0 236.3 L418.5 237.2 L420.0 237.4 L421.5 237.3 L423.0 236.9 L424.5 236.8 L426.0 236.5 L427.5 236.2 L429.1 237.5 L430.6 237.4 L432.1 238.8 L433.6 237.4 L435.1 239.2 L436.6 239.2 L438.1 239.6 L439.6 239.4 L441.1 239.1 L442.6 238.0 L444.2 235.9 L445.7 237.1 L447.2 236.0 L448.7 236.1 L450.2 237.2 L451.7 237.4 L453.2 237.3 L454.7 238.7 L456.2 238.4 L457.7 237.6 L459.2 237.1 L460.8 238.4 L462.3 237.8 L463.8 238.4 L465.3 237.4 L466.8 236.6 L468.3 237.2 L469.8 238.0 L471.3 236.3 L472.8 236.9 L474.3 237.0 L475.8 236.4 L477.4 236.0 L478.9 233.7 L480.4 234.6 L481.9 235.9 L483.4 234.7 L484.9 235.3 L486.4 235.9 L487.9 237.1 L489.4 237.4 L490.9 237.6 L492.5 238.3 L494.0 236.5 L495.5 235.9 L497.0 235.7 L498.5 235.6 L500.0 235.3 L501.5 237.6 L503.0 237.9 L504.5 235.9 L506.0 236.0 L507.5 235.4 L509.0 235.0 L510.5 234.8 L512.0 235.5 L513.5 235.5 L515.0 234.8 L516.5 233.9 L518.0 233.7 L519.5 233.0 L521.0 233.7 L522.5 234.3 L524.0 233.6 L525.5 233.0 L527.0 233.5 L528.5 234.7 L530.0 236.3 L531.5 237.7 L533.0 237.4 L534.5 238.3 L536.0 238.0 L537.5 237.1 L539.0 236.4 L540.5 236.2 L542.0 236.4 L543.5 235.6 L545.0 235.9 L546.5 235.5 L548.0 234.9 L549.5 235.6 L551.0 236.4 L552.5 235.2 L554.0 235.8 L555.5 236.0 L557.0 237.2 L558.5 237.8 L560.0 236.7 L561.5 237.7 L563.0 237.9 L564.5 236.6 L566.0 236.7 L567.5 235.9 L569.0 237.3 L570.5 237.3 L572.0 237.7 L573.5 237.5 L575.0 237.0 L576.5 236.9 L578.0 236.4 L579.5 235.0 L581.0 235.9 L582.5 234.8 L584.0 234.9 L585.5 236.7 L587.0 235.5 L588.5 235.2 L590.0 235.1 L591.5 236.8 L593.0 235.2 L594.5 233.9 L596.0 235.2 L597.5 233.5 L599.0 234.6 L600.5 234.6 L602.0 235.1 L603.5 235.8 L605.0 235.3 L606.5 236.0 L608.0 234.4 L609.5 235.9 L611.0 235.8 L612.5 236.2 L614.0 234.5 L615.5 235.3 L617.0 235.9 L618.5 233.5 L620.0 233.2 L621.5 233.7 L623.0 234.6 L624.5 233.7 L626.0 233.5 L627.5 233.9 L629.0 235.4 L630.5 236.5 L632.0 236.1 L633.5 235.9 L635.0 235.9 L636.5 235.7 L638.0 235.8 L639.5 235.0 L641.0 235.7 L642.5 237.2 L644.0 236.3 L645.5 236.7 L647.0 235.0 L648.5 235.2 L650.0 235.0 L651.5 234.2 L653.0 233.2 L654.5 232.6 L656.0 232.9 L657.5 233.7 L659.0 232.1 L660.5 231.4 L662.0 232.9 L663.5 233.9 L665.0 233.3 L666.5 232.8 L668.0 233.5 L669.5 232.3 L671.0 232.2 L672.5 232.1 L674.0 233.1 L675.5 232.8 L677.0 232.5 L678.5 233.7 L680.0 235.2 L681.5 234.5 L683.0 235.8 L684.5 236.0 L686.0 237.6 L687.5 237.6 L689.0 236.6 L690.5 236.0 L692.0 234.9 L693.5 235.4 L695.0 235.0 L696.5 234.0 L698.0 234.0 L699.5 234.0 L701.0 235.2 L702.5 234.1 L704.0 236.1 L705.5 235.6 L707.0 235.9 L708.5 235.7 L710.0 236.6 L711.5 236.8 L713.0 236.1 L714.5 235.4 L716.0 235.6 L717.5 235.8 L719.0 234.6 L720.5 235.0 L722.0 235.8 L723.5 234.9 L725.0 234.1 L726.5 233.9 L728.0 235.3 L729.5 235.8 L731.0 236.8 L732.5 236.8 L734.0 235.2 L735.5 234.5 L737.0 234.3 L738.5 234.0 L740.0 235.2 L741.5 236.0 L743.0 236.4 L744.5 234.9 L746.0 235.9 L747.5 234.8 L749.1 234.7 L750.6 235.5 L752.1 234.1 L753.6 233.6 L755.1 235.4 L756.6 234.8 L758.1 234.9 L759.6 235.7 L761.1 236.3 L762.6 235.0 L764.2 235.4 L765.7 235.9 L767.2 236.1 L768.7 235.5 L770.2 236.3 L771.7 237.6 L773.2 236.5 L774.7 236.6 L776.2 235.5 L777.7 235.7 L779.2 236.9 L780.8 236.1 L782.3 238.1 L783.8 239.0 L785.3 237.4 L786.8 239.1 L788.3 238.2 L789.8 238.8 L791.3 238.8 L792.8 237.5 L794.3 237.9 L795.8 237.9 L797.4 238.3 L798.9 237.0 L800.4 238.0 L801.9 239.0 L803.4 238.8 L804.9 238.6 L806.4 237.5 L807.9 238.3 L809.4 238.1 L810.9 239.0 L812.5 239.2 L814.0 239.0 L815.5 237.8 L817.0 238.6 L818.5 238.9 L820.0 237.8 L821.5 239.3 L823.0 239.3 L824.5 238.0 L826.0 239.8 L827.5 238.4 L829.1 238.5 L830.6 239.6 L832.1 239.6 L833.6 239.4 L835.1 239.4 L836.6 238.7 L838.1 237.9 L839.6 237.1 L841.1 236.5 L842.6 238.0 L844.2 238.4 L845.7 237.8 L847.2 237.7 L848.7 236.4 L850.2 235.4 L851.7 235.2 L853.2 236.4 L854.7 234.9 L856.2 236.0 L857.7 236.2 L859.2 238.1 L860.8 238.1 L862.3 238.3 L863.8 238.7 L865.3 239.2 L866.8 240.0 L868.3 239.2 L869.8 240.4 L871.3 238.9 L872.8 238.9 L874.3 238.5 L875.8 238.4 L877.4 240.1 L878.9 240.5 L880.4 239.2 L881.9 238.7 L883.4 239.2 L884.9 240.2 L886.4 240.7 L887.9 240.6 L889.4 240.0 L890.9 238.5 L892.5 238.4 L894.0 237.6 L895.5 238.1 L897.0 238.4 L898.5 237.6 L900.0 237.5 L901.5 239.0 L903.0 237.7 L904.5 239.3 L906.1 240.2 L907.6 240.7 L909.1 239.4 L910.6 239.1 L912.1 238.8 L913.6 238.5 L915.2 239.0 L916.7 238.2 L918.2 236.8 L919.7 237.8 L921.2 237.4 L922.7 238.0 L924.2 239.0 L925.8 237.8 L927.3 239.8 L928.8 240.4 L930.3 240.2 L931.8 240.1 L933.3 239.8 L934.8 238.8 L936.4 239.2 L937.9 237.9 L939.4 238.6 L940.9 239.2 L942.4 238.9 L943.9 239.0 L945.5 239.8 L947.0 239.8 L948.5 237.6 L950.0 238.5 L951.5 238.3 L953.0 236.8 L954.5 237.0 L956.1 236.6 L957.6 235.9 L959.1 236.7 L960.6 238.0 L962.1 236.8 L963.6 237.8 L965.2 238.0 L966.7 237.1 L968.2 239.2 L969.7 239.8 L971.2 241.3 L972.7 241.6 L974.2 241.8 L975.8 240.8 L977.3 241.7 L978.8 242.5 L980.3 242.7 L981.8 241.8 L983.3 242.3 L984.8 241.9 L986.4 240.6 L987.9 239.6 L989.4 238.7 L990.9 238.1 L992.4 237.3 L993.9 237.5 L995.5 237.9 L997.0 237.7 L998.5 237.7 L1000.0 238.8 L1001.5 238.7 L1003.0 239.6 L1004.5 241.0 L1006.0 240.8 L1007.5 240.2 L1009.0 241.6 L1010.5 240.6 L1012.0 240.0 L1013.5 239.6 L1015.0 239.6 L1016.5 242.2 L1018.0 243.0 L1019.5 241.7 L1021.0 239.3 L1022.5 237.2 L1024.0 235.1 L1025.5 235.7 L1027.0 237.6 L1028.5 240.3 L1030.0 242.0 L1031.5 242.1 L1033.0 240.0 L1034.5 237.0 L1036.0 235.1 L1037.5 235.0 L1039.0 237.3 L1040.5 239.7 L1042.0 241.9 L1043.5 243.0 L1045.0 241.8 L1046.5 239.7 L1048.0 236.9 L1049.5 236.4 L1051.0 237.7 L1052.5 239.9 L1054.0 243.5 L1055.5 244.2 L1057.0 243.1 L1058.5 241.0 L1060.0 238.1 L1061.5 237.0 L1063.0 237.3 L1064.5 239.0 L1066.0 241.3 L1067.5 243.4 L1069.0 242.5 L1070.5 240.6 L1072.0 237.3 L1073.5 235.6 L1075.0 234.9 L1076.5 236.5 L1078.0 239.4 L1079.5 242.5 L1081.0 243.3 L1082.5 241.5 L1084.0 238.5 L1085.5 236.5 L1087.0 235.9 L1088.5 236.6 L1090.0 238.1 L1091.6 239.6 L1093.2 239.7 L1094.8 237.6 L1096.5 233.9 L1098.1 230.7 L1099.7 230.3 L1099.7 234.6 L1101.8 235.0 L1103.2 240.0 L1109.4 233.9 L1110.6 254.0 L1112.2 240.8 L1112.9 223.5 L1113.6 214.4 L1115.7 218.6 L1116.4 183.2 L1117.5 141.5 L1119.2 134.6 L1119.3 135.2 L1119.5 136.0 L1119.7 137.0 L1120.0 138.1 L1120.6 139.4 L1121.4 140.7 L1122.5 142.0 L1123.7 143.6 L1124.9 145.4 L1126.1 147.8 L1127.2 150.7 L1128.3 153.9 L1129.4 157.5 L1130.5 161.5 L1131.7 165.8 L1133.0 170.6 L1134.4 176.0 L1135.8 181.5 L1137.2 187.1 L1138.6 192.2 L1140.0 197.0 L1141.4 201.5 L1142.8 205.9 L1144.2 210.2 L1145.6 214.4 L1147.0 218.6 L1148.4 222.9 L1149.7 227.0 L1151.1 230.7 L1152.5 233.9 L1153.8 236.4 L1155.1 238.4 L1156.4 239.9 L1157.8 241.4 L1159.4 242.9 L1161.2 244.5 L1163.0 246.0 L1165.0 247.5 L1167.1 248.8 L1169.2 249.9 L1171.3 250.8 L1173.4 251.4 L1175.6 252.0 L1177.9 252.6 L1180.3 253.3 L1182.6 254.3 L1184.9 255.5 L1187.3 256.6 L1190.1 257.7 L1193.6 258.4 L1198.3 258.7 L1204.1 258.8 L1210.1 258.6 L1215.4 258.5 L1219.0 258.4 L1219.0 258.4 L1267.6 258.4 L1279.7 260.5 L1297.8 260.5 L1316.0 258.4 L1355.0 258.4 L1364.0 261.0 L1380.0 260.2 L1397.5 259.6 L1440.0 259.6 L1452.0 262.0 L1470.0 261.5 L1500.0 259.6 L1527.4 259.6 L1542.5 262.7 L1560.7 261.5 L1588.0 258.4 L1603.0 258.4 L1615.0 260.5 L1657.0 260.5 L1669.4 258.6 L1687.6 258.6 L1702.7 260.8 L1751.0 260.8" fill="none" stroke="#f4e800" stroke-width="1.45" stroke-linejoin="round"/>
<path d="M3.0 429.3 L182.5 429.3 L233.8 406.3 L237.5 405.5 L265.0 405.5 L300.0 408.7 L320.0 410.3 L480.0 408.7 L480.0 408.7 L483.0 408.9 L486.0 408.7 L489.0 408.6 L492.0 408.8 L495.0 408.6 L498.0 408.3 L501.0 408.3 L504.0 408.4 L507.0 407.9 L510.0 408.3 L513.0 407.8 L516.0 408.0 L519.0 408.0 L522.0 407.5 L525.0 407.7 L528.0 407.5 L531.0 407.4 L534.0 407.0 L537.0 406.9 L540.0 406.8 L543.0 407.2 L546.0 406.8 L549.0 407.0 L552.0 407.1 L555.0 407.0 L558.0 406.6 L561.0 406.4 L564.0 406.4 L567.0 406.5 L570.0 406.1 L573.0 406.3 L576.1 406.4 L579.1 406.5 L582.1 406.0 L585.1 406.4 L588.2 405.9 L591.2 405.9 L594.2 406.1 L597.2 406.3 L600.2 406.0 L603.3 406.2 L606.3 406.1 L609.3 405.9 L612.3 405.8 L615.4 405.7 L618.4 405.6 L621.4 405.5 L624.4 405.8 L627.5 406.1 L630.5 405.7 L633.5 405.4 L636.5 405.9 L639.5 405.8 L642.6 405.6 L645.6 405.5 L648.6 405.6 L651.6 405.8 L654.7 405.6 L657.7 405.5 L660.7 405.2 L663.7 405.7 L666.8 405.2 L669.8 405.4 L672.8 405.6 L675.8 405.2 L678.8 405.5 L681.9 405.6 L684.9 405.5 L687.9 405.5 L690.9 405.1 L694.0 405.2 L697.0 405.0 L700.0 405.3 L703.0 405.1 L706.1 405.2 L709.1 405.5 L712.1 405.5 L715.2 405.6 L718.2 405.3 L721.2 405.2 L724.2 405.4 L727.3 405.3 L730.3 405.1 L733.3 405.1 L736.4 405.0 L739.4 405.1 L742.4 405.5 L745.5 405.6 L748.5 405.4 L751.5 405.3 L754.5 405.2 L757.6 405.0 L760.6 405.0 L763.6 405.4 L766.7 405.5 L769.7 405.3 L772.7 405.4 L775.8 405.5 L778.8 405.5 L781.8 405.4 L784.8 405.5 L787.9 405.3 L790.9 405.4 L793.9 405.2 L797.0 405.3 L800.0 405.5 L803.0 405.5 L806.1 405.2 L809.1 405.6 L812.1 405.5 L815.2 405.5 L818.2 405.1 L821.2 405.3 L824.2 405.2 L827.3 405.4 L830.3 405.4 L833.3 405.6 L836.4 405.6 L839.4 405.7 L842.4 405.4 L845.5 405.5 L848.5 405.6 L851.5 405.7 L854.5 405.5 L857.6 405.7 L860.6 405.8 L863.6 405.7 L866.7 405.9 L869.7 405.9 L872.7 405.7 L875.8 405.6 L878.8 405.4 L881.8 405.7 L884.8 405.9 L887.9 405.7 L890.9 405.8 L893.9 405.8 L897.0 405.8 L900.0 405.5 L903.0 405.8 L906.1 405.8 L909.1 405.8 L912.1 405.7 L915.2 405.8 L918.2 405.9 L921.2 405.9 L924.2 405.9 L927.3 405.5 L930.3 405.5 L933.3 405.6 L936.4 405.8 L939.4 405.6 L942.4 405.9 L945.5 405.9 L948.5 405.6 L951.5 405.7 L954.5 405.6 L957.6 405.5 L960.6 405.5 L963.6 405.7 L966.7 405.6 L969.7 405.6 L972.7 405.5 L975.8 405.8 L978.8 405.8 L981.8 406.0 L984.8 406.0 L987.9 405.8 L990.9 406.2 L993.9 405.7 L997.0 405.9 L1000.0 405.8 L1003.0 405.9 L1006.1 405.8 L1009.1 406.2 L1012.1 406.1 L1015.2 405.8 L1018.2 406.1 L1021.2 405.9 L1024.2 406.1 L1027.3 406.1 L1030.3 406.3 L1033.3 406.5 L1036.4 406.6 L1039.4 406.3 L1042.4 406.5 L1045.5 406.5 L1048.5 406.4 L1051.5 406.2 L1054.5 406.4 L1057.6 406.5 L1060.6 406.8 L1063.6 406.9 L1066.7 406.7 L1069.7 406.5 L1072.7 406.8 L1075.8 406.4 L1078.8 406.3 L1081.8 406.6 L1084.8 406.7 L1087.9 406.5 L1090.9 406.7 L1093.9 407.0 L1097.0 406.8 L1100.0 406.8 L1103.3 406.7 L1106.7 406.8 L1110.0 407.2 L1110.0 407.0 L1113.0 403.0 L1118.0 398.8 L1119.1 399.3 L1120.6 400.1 L1122.3 401.0 L1124.2 402.0 L1126.0 403.0 L1127.7 404.1 L1129.3 405.2 L1131.1 406.5 L1132.9 407.7 L1135.0 409.0 L1137.4 410.3 L1140.0 411.7 L1142.7 413.0 L1145.4 414.3 L1148.0 415.5 L1150.5 416.6 L1152.9 417.5 L1155.2 418.4 L1157.6 419.2 L1160.0 420.0 L1162.4 420.7 L1164.8 421.3 L1167.1 421.9 L1169.5 422.5 L1172.0 423.0 L1174.3 423.5 L1176.6 424.0 L1178.9 424.4 L1181.6 424.8 L1185.0 425.3 L1189.3 425.8 L1194.3 426.4 L1199.6 427.0 L1205.0 427.5 L1210.0 428.0 L1214.5 428.4 L1218.7 428.7 L1222.9 428.9 L1227.3 429.1 L1232.0 429.3 L1237.7 429.4 L1244.1 429.4 L1250.5 429.4 L1256.1 429.3 L1260.0 429.3 L1751.0 429.3" fill="none" stroke="#78c22a" stroke-width="1.3" stroke-linejoin="round"/>
<path d="M3.0 734.5 L7.3 734.5 L13.3 734.6 L20.5 734.7 L28.4 734.8 L36.3 734.8 L43.7 734.8 L50.2 734.7 L55.0 734.5 L57.2 734.4 L56.8 734.5 L55.0 734.7 L52.9 734.8 L51.7 734.5 L52.6 733.8 L56.6 732.3 L65.0 730.0 L78.1 726.6 L95.1 722.3 L115.1 717.3 L137.2 711.7 L160.6 706.0 L184.4 700.1 L207.8 694.5 L230.0 689.2 L251.4 684.3 L273.0 679.4 L294.9 674.5 L316.9 669.6 L338.9 664.8 L361.0 660.0 L383.1 655.4 L405.0 650.8 L426.9 646.3 L448.8 641.8 L470.7 637.5 L492.5 633.1 L514.4 628.9 L536.3 624.8 L558.2 620.8 L580.0 617.0 L601.8 613.3 L623.6 609.7 L645.4 606.3 L667.2 602.9 L689.0 599.7 L710.7 596.5 L732.5 593.5 L754.3 590.6 L776.1 587.8 L797.9 585.1 L819.7 582.5 L841.5 580.0 L863.3 577.6 L885.1 575.3 L906.9 573.1 L928.7 571.0 L950.5 569.0 L972.3 567.1 L994.1 565.4 L1015.9 563.7 L1037.6 562.1 L1059.4 560.7 L1081.2 559.3 L1103.0 558.0 L1124.8 556.8 L1146.6 555.7 L1168.4 554.8 L1190.2 553.9 L1212.0 553.1 L1233.8 552.4 L1255.6 551.8 L1277.4 551.2 L1299.7 550.7 L1322.8 550.3 L1346.1 550.0 L1369.3 549.8 L1391.9 549.7 L1413.5 549.6 L1433.5 549.6 L1451.7 549.6 L1467.7 549.7 L1481.9 549.9 L1494.7 550.2 L1506.4 550.5 L1517.5 550.9 L1528.1 551.3 L1538.9 551.6 L1550.0 552.0 L1561.0 552.3 L1571.5 552.7 L1581.5 553.0 L1591.4 553.3 L1601.4 553.7 L1611.9 554.1 L1623.0 554.5 L1635.0 555.0 L1648.8 555.6 L1664.5 556.2 L1681.3 556.9 L1698.3 557.7 L1714.6 558.4 L1729.4 559.1 L1741.8 559.6 L1751.0 560.0" fill="none" stroke="#f0922a" stroke-width="1.2" stroke-linejoin="round"/>
<path d="M3.0 962.7 L4.5 962.6 L6.1 962.9 L7.6 962.8 L9.1 963.0 L10.6 962.9 L12.2 963.0 L13.7 963.3 L15.2 963.1 L16.8 963.1 L18.3 963.3 L19.8 963.0 L21.4 962.9 L22.9 963.4 L24.4 963.5 L25.9 963.2 L27.5 963.1 L29.0 963.3 L30.5 963.5 L32.1 963.1 L33.6 963.4 L35.1 963.4 L36.6 963.2 L38.2 963.0 L39.7 962.8 L41.2 962.6 L42.8 963.1 L44.3 962.9 L45.8 963.1 L47.4 962.9 L48.9 963.2 L50.4 963.1 L51.9 962.9 L53.5 962.8 L55.0 963.1 L56.6 962.9 L58.1 963.0 L59.7 963.3 L61.2 963.6 L62.8 963.7 L64.4 963.5 L65.9 963.9 L67.5 963.6 L69.1 963.4 L70.6 963.5 L72.2 963.7 L73.8 963.6 L75.3 963.7 L76.9 963.9 L78.4 964.2 L80.0 964.1 L81.5 964.2 L83.0 964.5 L84.5 964.7 L86.0 964.5 L87.5 964.4 L89.0 964.3 L90.6 964.0 L92.1 963.8 L93.6 963.6 L95.1 964.1 L96.6 964.1 L98.1 964.3 L99.6 963.7 L101.1 963.8 L102.6 963.8 L104.1 963.9 L105.6 963.7 L107.1 964.0 L108.7 963.5 L110.2 963.6 L111.7 963.7 L113.2 963.7 L114.7 963.6 L116.2 963.4 L117.7 963.3 L119.2 963.2 L120.7 962.8 L122.2 962.8 L123.7 962.9 L125.2 962.9 L126.7 962.6 L128.3 962.7 L129.8 962.8 L131.3 962.6 L132.8 962.5 L134.3 962.3 L135.8 962.4 L137.3 962.3 L138.8 961.9 L140.3 962.1 L141.8 962.3 L143.3 962.3 L144.8 962.1 L146.3 961.8 L147.9 961.9 L149.4 961.8 L150.9 961.7 L152.4 962.0 L153.9 961.6 L155.4 961.9 L156.9 961.6 L158.4 961.8 L159.9 961.7 L161.4 961.5 L162.9 961.7 L164.4 961.6 L166.0 961.6 L167.5 961.7 L169.0 961.3 L170.5 961.0 L172.0 961.0 L173.5 961.1 L175.0 960.8 L176.7 959.6 L178.3 958.8 L180.0 957.7 L181.7 956.4 L183.3 955.5 L185.0 954.2 L186.5 953.8 L188.0 953.1 L189.6 952.7 L191.1 952.5 L192.6 952.1 L194.1 951.7 L195.7 950.8 L197.2 950.2 L198.7 949.5 L200.2 948.7 L201.7 948.3 L203.3 947.9 L204.8 947.5 L206.3 946.8 L207.8 946.4 L209.3 945.4 L210.9 944.6 L212.4 944.1 L213.9 943.4 L215.4 942.7 L217.0 942.1 L218.5 941.7 L220.0 941.1 L221.5 940.0 L223.1 939.3 L224.6 938.4 L226.2 937.2 L227.7 935.9 L229.2 934.7 L230.8 934.2 L232.3 932.8 L233.8 932.1 L235.4 931.0 L236.9 929.8 L238.5 929.0 L240.0 927.6 L241.5 926.9 L243.1 926.5 L244.6 925.8 L246.2 925.6 L247.7 924.9 L249.2 924.2 L250.8 921.7 L252.3 922.2 L253.8 921.5 L255.4 921.4 L256.9 921.2 L258.5 921.3 L260.0 921.5 L261.5 920.8 L263.1 919.2 L264.6 919.0 L266.2 917.9 L267.7 916.7 L269.2 916.9 L270.8 917.1 L272.3 915.4 L273.8 914.4 L275.4 913.8 L276.9 913.9 L278.5 913.2 L280.0 912.9 L281.5 912.7 L283.1 911.5 L284.6 911.6 L286.2 911.6 L287.7 909.4 L289.2 910.1 L290.8 909.6 L292.3 907.6 L293.8 907.2 L295.4 907.1 L296.9 907.5 L298.5 906.0 L300.0 905.5 L301.5 905.7 L303.0 905.2 L304.6 904.9 L306.1 903.3 L307.6 902.6 L309.1 900.9 L310.7 901.0 L312.2 900.8 L313.7 899.9 L315.2 899.4 L316.7 897.7 L318.3 898.4 L319.8 898.7 L321.3 898.6 L322.8 897.2 L324.3 897.0 L325.9 895.5 L327.4 895.9 L328.9 895.6 L330.4 893.8 L332.0 892.1 L333.5 892.0 L335.0 891.8 L336.5 892.0 L338.1 891.2 L339.6 889.5 L341.2 890.6 L342.7 889.1 L344.2 890.1 L345.8 888.9 L347.3 888.7 L348.8 889.5 L350.4 888.0 L351.9 887.2 L353.5 887.4 L355.0 887.6 L356.5 887.6 L358.1 886.9 L359.6 886.9 L361.2 885.5 L362.7 885.7 L364.2 883.5 L365.8 882.8 L367.3 883.0 L368.8 882.3 L370.4 882.9 L371.9 882.6 L373.5 882.0 L375.0 882.3 L376.5 881.4 L378.0 880.1 L379.5 879.4 L381.0 879.9 L382.5 879.9 L384.0 877.9 L385.5 878.3 L387.0 878.4 L388.5 877.1 L390.0 876.5 L391.5 875.1 L393.0 875.1 L394.5 874.8 L396.0 874.6 L397.5 872.9 L399.0 874.2 L400.5 873.2 L402.0 872.3 L403.5 872.4 L405.0 871.6 L406.5 870.6 L408.1 870.4 L409.6 868.4 L411.2 868.4 L412.7 867.8 L414.2 868.4 L415.8 868.2 L417.3 866.2 L418.8 865.4 L420.4 863.9 L421.9 863.7 L423.5 864.2 L425.0 864.5 L426.6 863.7 L428.1 863.0 L429.7 862.5 L431.2 863.4 L432.8 864.4 L434.4 862.7 L435.9 863.4 L437.5 861.7 L439.1 861.2 L440.6 860.9 L442.2 861.7 L443.8 861.0 L445.3 860.5 L446.9 860.8 L448.4 859.5 L450.0 860.2 L451.5 858.7 L453.0 858.8 L454.5 857.9 L456.0 857.1 L457.5 857.3 L459.0 856.9 L460.5 856.4 L462.0 856.0 L463.5 855.8 L465.0 854.5 L466.5 853.9 L468.0 854.3 L469.5 854.3 L471.0 853.7 L472.5 854.0 L474.0 853.2 L475.5 853.1 L477.0 851.2 L478.5 851.2 L480.0 851.1 L481.5 851.1 L483.0 849.4 L484.5 848.6 L486.1 849.5 L487.6 848.0 L489.1 849.0 L490.6 849.0 L492.1 846.9 L493.6 846.1 L495.2 846.8 L496.7 845.8 L498.2 844.8 L499.7 846.0 L501.2 845.3 L502.7 845.8 L504.2 844.2 L505.8 844.0 L507.3 844.4 L508.8 842.8 L510.3 842.3 L511.8 843.0 L513.3 843.6 L514.8 843.7 L516.4 841.4 L517.9 841.3 L519.4 841.6 L520.9 841.1 L522.4 841.3 L523.9 840.3 L525.5 839.6 L527.0 839.4 L528.5 839.1 L530.0 840.1 L531.5 840.2 L533.0 840.2 L534.5 838.8 L536.1 838.1 L537.6 837.5 L539.1 838.5 L540.6 839.1 L542.1 838.9 L543.6 836.7 L545.1 835.6 L546.6 837.3 L548.2 836.8 L549.7 837.2 L551.2 836.3 L552.7 836.2 L554.2 836.1 L555.7 835.7 L557.2 835.6 L558.7 833.9 L560.3 834.5 L561.8 834.7 L563.3 832.9 L564.8 832.6 L566.3 833.0 L567.8 832.2 L569.3 831.3 L570.8 830.9 L572.4 831.5 L573.9 830.6 L575.4 832.3 L576.9 832.7 L578.4 832.5 L579.9 832.6 L581.4 831.8 L582.9 830.8 L584.5 830.6 L586.0 830.1 L587.5 830.8 L589.0 830.5 L590.5 829.0 L592.0 829.8 L593.6 829.4 L595.1 828.9 L596.6 828.4 L598.1 826.8 L599.6 827.0 L601.1 826.8 L602.7 826.1 L604.2 826.0 L605.7 825.8 L607.2 824.9 L608.7 825.2 L610.2 823.7 L611.8 823.7 L613.3 823.9 L614.8 822.8 L616.3 823.1 L617.8 824.0 L619.3 824.4 L620.9 823.7 L622.4 825.3 L623.9 825.3 L625.4 824.5 L626.9 824.8 L628.4 824.5 L630.0 824.1 L631.5 823.3 L633.0 824.2 L634.5 823.4 L636.1 822.9 L637.6 822.7 L639.1 823.0 L640.6 820.8 L642.2 821.3 L643.7 821.9 L645.2 821.0 L646.7 821.0 L648.3 820.1 L649.8 820.0 L651.3 820.3 L652.8 819.4 L654.4 819.2 L655.9 820.3 L657.4 819.6 L658.9 818.9 L660.5 819.4 L662.0 818.5 L663.5 819.0 L665.1 818.2 L666.6 818.0 L668.1 816.0 L669.6 816.1 L671.2 816.4 L672.7 814.5 L674.2 815.8 L675.7 814.3 L677.3 814.5 L678.8 813.8 L680.3 814.4 L681.8 815.0 L683.4 813.9 L684.9 815.5 L686.4 814.8 L687.9 814.6 L689.5 814.6 L691.0 814.0 L692.5 813.4 L694.0 814.0 L695.6 813.9 L697.1 813.0 L698.6 813.6 L700.1 812.6 L701.7 811.3 L703.2 811.0 L704.7 810.1 L706.2 809.7 L707.8 810.7 L709.3 810.0 L710.8 810.8 L712.3 810.6 L713.9 808.6 L715.4 809.9 L716.9 810.1 L718.4 807.9 L720.0 808.8 L721.5 807.9 L723.0 807.5 L724.5 808.4 L726.0 806.9 L727.6 806.9 L729.1 807.9 L730.6 807.7 L732.1 806.9 L733.7 807.7 L735.2 807.5 L736.7 806.8 L738.2 805.4 L739.8 806.1 L741.3 806.1 L742.8 805.5 L744.3 804.9 L745.9 805.7 L747.4 804.9 L748.9 805.1 L750.4 805.6 L752.0 805.0 L753.5 804.1 L755.0 804.3 L756.5 803.7 L758.0 804.0 L759.5 803.3 L761.0 803.8 L762.5 803.5 L764.0 802.4 L765.5 800.4 L767.0 798.8 L768.5 799.7 L770.0 799.5 L771.5 798.8 L773.0 797.7 L774.5 796.9 L776.0 797.3 L777.5 797.0 L779.0 796.8 L780.5 796.6 L782.0 796.6 L783.5 795.0 L785.1 794.3 L786.6 795.5 L788.1 795.5 L789.6 795.2 L791.2 792.8 L792.7 791.7 L794.2 791.5 L795.8 791.6 L797.3 791.9 L798.8 790.5 L800.4 790.8 L801.9 789.5 L803.4 788.8 L804.9 789.8 L806.5 789.6 L808.0 789.6 L809.5 789.1 L811.0 789.4 L812.6 789.0 L814.1 789.3 L815.6 790.6 L817.1 791.3 L818.7 789.8 L820.2 789.1 L821.7 790.2 L823.2 790.0 L824.8 790.0 L826.3 788.4 L827.8 788.0 L829.3 787.3 L830.9 788.3 L832.4 787.6 L833.9 788.0 L835.4 789.1 L837.0 788.0 L838.5 788.1 L840.0 788.7 L841.5 789.3 L843.0 788.4 L844.5 787.8 L846.0 786.8 L847.5 788.3 L849.0 786.8 L850.5 786.2 L852.0 787.1 L853.5 787.2 L855.0 787.6 L856.5 786.9 L858.0 787.6 L859.5 786.1 L861.0 785.7 L862.5 786.5 L864.0 785.3 L865.5 785.3 L867.0 786.3 L868.5 786.7 L870.0 785.9 L871.5 785.4 L873.0 785.9 L874.5 787.1 L876.0 786.8 L877.5 786.1 L879.0 787.2 L880.5 787.2 L882.0 787.9 L883.5 788.0 L885.0 787.7 L886.5 786.2 L888.0 786.2 L889.5 784.9 L891.0 784.5 L892.5 784.6 L894.0 786.2 L895.5 786.8 L897.0 785.5 L898.5 785.3 L900.0 785.1 L901.5 785.1 L903.0 785.3 L904.5 785.5 L906.0 784.8 L907.5 785.4 L909.0 786.0 L910.5 784.8 L912.0 785.0 L913.5 784.1 L915.0 782.7 L916.5 784.4 L918.0 785.7 L919.5 784.4 L921.0 782.9 L922.6 783.6 L924.1 783.8 L925.6 784.1 L927.1 785.9 L928.6 786.0 L930.2 786.6 L931.7 784.3 L933.2 784.4 L934.7 784.6 L936.2 782.2 L937.8 781.3 L939.3 783.6 L940.8 785.5 L942.3 783.9 L943.8 784.9 L945.3 783.2 L946.9 783.8 L948.4 783.6 L949.9 782.5 L951.4 782.5 L952.9 785.1 L954.5 785.8 L956.0 786.9 L957.5 785.8 L959.0 784.7 L960.5 786.3 L962.1 786.5 L963.6 786.6 L965.1 787.4 L966.6 788.5 L968.1 788.4 L969.7 788.1 L971.2 785.6 L972.7 785.7 L974.2 785.7 L975.7 787.1 L977.2 788.1 L978.8 788.6 L980.3 788.2 L981.8 787.1 L983.3 784.7 L984.8 783.1 L986.4 783.6 L987.9 785.2 L989.4 785.5 L990.9 786.0 L992.4 784.9 L994.0 785.6 L995.5 786.0 L997.0 784.4 L998.5 783.8 L1000.1 784.7 L1001.6 786.4 L1003.1 786.3 L1004.6 787.4 L1006.2 783.4 L1007.7 781.6 L1009.2 780.3 L1010.7 782.3 L1012.3 784.9 L1013.8 784.8 L1015.3 784.3 L1016.8 784.5 L1018.4 783.8 L1019.9 783.9 L1021.4 781.4 L1022.9 781.8 L1024.5 783.5 L1026.0 785.2 L1027.5 786.1 L1029.0 787.3 L1030.5 786.3 L1032.0 784.4 L1033.5 784.0 L1035.0 785.6 L1036.5 787.3 L1038.0 790.7 L1039.5 790.4 L1041.0 789.8 L1042.5 789.1 L1044.0 787.1 L1045.5 786.1 L1047.0 789.1 L1048.5 791.9 L1050.0 792.0 L1051.5 792.3 L1053.0 792.3 L1054.5 789.3 L1056.0 786.4 L1057.5 785.3 L1059.1 789.3 L1060.6 792.3 L1062.1 793.5 L1063.6 794.6 L1065.2 794.2 L1066.7 792.3 L1068.2 793.7 L1069.7 794.1 L1071.3 794.6 L1072.8 795.5 L1074.3 797.8 L1075.8 797.7 L1077.4 797.4 L1078.9 795.5 L1080.4 793.9 L1081.9 792.7 L1083.5 793.9 L1085.0 796.6 L1086.5 798.5 L1088.0 800.9 L1089.5 799.8 L1091.0 798.8 L1092.5 799.6 L1094.0 798.8 L1095.5 801.3 L1097.0 803.0 L1098.5 806.7 L1100.0 805.7 L1101.6 806.7 L1103.2 806.3 L1104.8 806.3 L1106.4 805.3 L1108.0 807.5 L1108.0 807.5 L1110.0 794.0 L1112.0 825.0 L1115.0 827.5 L1117.0 880.0 L1120.0 915.0 L1124.0 928.0 L1130.0 937.0 L1138.0 943.0 L1148.0 947.5 L1165.0 950.5 L1200.0 952.0 L1300.0 952.0 L1440.0 950.0 L1627.0 947.0 L1751.0 945.0" fill="none" stroke="#7a349a" stroke-width="1.3" stroke-linejoin="round"/>
<text x="1746" y="85.7" font-size="12.5" fill="#f0e41e" text-anchor="end" font-weight="normal" textLength="27" lengthAdjust="spacingAndGlyphs" stroke="#f0e41e" stroke-width="0.18">40 V</text>
<text x="1746" y="109.0" font-size="12.5" fill="#f0e41e" text-anchor="end" font-weight="normal" textLength="27" lengthAdjust="spacingAndGlyphs" stroke="#f0e41e" stroke-width="0.18">35 V</text>
<text x="1746" y="132.3" font-size="12.5" fill="#f0e41e" text-anchor="end" font-weight="normal" textLength="27" lengthAdjust="spacingAndGlyphs" stroke="#f0e41e" stroke-width="0.18">30 V</text>
<text x="1746" y="155.5" font-size="12.5" fill="#f0e41e" text-anchor="end" font-weight="normal" textLength="27" lengthAdjust="spacingAndGlyphs" stroke="#f0e41e" stroke-width="0.18">25 V</text>
<text x="1746" y="178.8" font-size="12.5" fill="#f0e41e" text-anchor="end" font-weight="normal" textLength="27" lengthAdjust="spacingAndGlyphs" stroke="#f0e41e" stroke-width="0.18">20 V</text>
<text x="1746" y="202.1" font-size="12.5" fill="#f0e41e" text-anchor="end" font-weight="normal" textLength="27" lengthAdjust="spacingAndGlyphs" stroke="#f0e41e" stroke-width="0.18">15 V</text>
<text x="1746" y="225.4" font-size="12.5" fill="#f0e41e" text-anchor="end" font-weight="normal" textLength="27" lengthAdjust="spacingAndGlyphs" stroke="#f0e41e" stroke-width="0.18">10 V</text>
<text x="1746" y="248.7" font-size="12.5" fill="#f0e41e" text-anchor="end" font-weight="normal" textLength="20" lengthAdjust="spacingAndGlyphs" stroke="#f0e41e" stroke-width="0.18">5 V</text>
<text x="1746" y="271.9" font-size="12.5" fill="#f0e41e" text-anchor="end" font-weight="normal" textLength="20" lengthAdjust="spacingAndGlyphs" stroke="#f0e41e" stroke-width="0.18">0 V</text>
<text x="1746" y="319.4" font-size="12.5" fill="#86c23a" text-anchor="end" font-weight="normal" textLength="20" lengthAdjust="spacingAndGlyphs" stroke="#86c23a" stroke-width="0.18">1 V</text>
<text x="1746" y="342.7" font-size="12.5" fill="#86c23a" text-anchor="end" font-weight="normal" textLength="46.5" lengthAdjust="spacingAndGlyphs" stroke="#86c23a" stroke-width="0.18">800 mV</text>
<text x="1746" y="366.0" font-size="12.5" fill="#86c23a" text-anchor="end" font-weight="normal" textLength="46.5" lengthAdjust="spacingAndGlyphs" stroke="#86c23a" stroke-width="0.18">600 mV</text>
<text x="1746" y="389.3" font-size="12.5" fill="#86c23a" text-anchor="end" font-weight="normal" textLength="46.5" lengthAdjust="spacingAndGlyphs" stroke="#86c23a" stroke-width="0.18">400 mV</text>
<text x="1746" y="412.6" font-size="12.5" fill="#86c23a" text-anchor="end" font-weight="normal" textLength="46.5" lengthAdjust="spacingAndGlyphs" stroke="#86c23a" stroke-width="0.18">200 mV</text>
<text x="1746" y="435.9" font-size="12.5" fill="#86c23a" text-anchor="end" font-weight="normal" textLength="20" lengthAdjust="spacingAndGlyphs" stroke="#86c23a" stroke-width="0.18">0 V</text>
<text x="1746" y="459.2" font-size="12.5" fill="#86c23a" text-anchor="end" font-weight="normal" textLength="51" lengthAdjust="spacingAndGlyphs" stroke="#86c23a" stroke-width="0.18">-200 mV</text>
<text x="1746" y="482.5" font-size="12.5" fill="#86c23a" text-anchor="end" font-weight="normal" textLength="51" lengthAdjust="spacingAndGlyphs" stroke="#86c23a" stroke-width="0.18">-400 mV</text>
<text x="1746" y="505.8" font-size="12.5" fill="#86c23a" text-anchor="end" font-weight="normal" textLength="51" lengthAdjust="spacingAndGlyphs" stroke="#86c23a" stroke-width="0.18">-600 mV</text>
<text x="1746" y="554.1" font-size="12.5" fill="#ec9430" text-anchor="end" font-weight="normal" textLength="71.5" lengthAdjust="spacingAndGlyphs" stroke="#ec9430" stroke-width="0.18">593.193 mT</text>
<text x="1746" y="577.3" font-size="12.5" fill="#ec9430" text-anchor="end" font-weight="normal" textLength="71.5" lengthAdjust="spacingAndGlyphs" stroke="#ec9430" stroke-width="0.18">519.044 mT</text>
<text x="1746" y="600.5" font-size="12.5" fill="#ec9430" text-anchor="end" font-weight="normal" textLength="71.5" lengthAdjust="spacingAndGlyphs" stroke="#ec9430" stroke-width="0.18">444.895 mT</text>
<text x="1746" y="623.6" font-size="12.5" fill="#ec9430" text-anchor="end" font-weight="normal" textLength="71.5" lengthAdjust="spacingAndGlyphs" stroke="#ec9430" stroke-width="0.18">370.746 mT</text>
<text x="1746" y="646.8" font-size="12.5" fill="#ec9430" text-anchor="end" font-weight="normal" textLength="71.5" lengthAdjust="spacingAndGlyphs" stroke="#ec9430" stroke-width="0.18">296.596 mT</text>
<text x="1746" y="669.9" font-size="12.5" fill="#ec9430" text-anchor="end" font-weight="normal" textLength="71.5" lengthAdjust="spacingAndGlyphs" stroke="#ec9430" stroke-width="0.18">222.447 mT</text>
<text x="1746" y="693.1" font-size="12.5" fill="#ec9430" text-anchor="end" font-weight="normal" textLength="71.5" lengthAdjust="spacingAndGlyphs" stroke="#ec9430" stroke-width="0.18">148.298 mT</text>
<text x="1746" y="716.3" font-size="12.5" fill="#ec9430" text-anchor="end" font-weight="normal" textLength="64" lengthAdjust="spacingAndGlyphs" stroke="#ec9430" stroke-width="0.18">74.149 mT</text>
<text x="1746" y="739.4" font-size="12.5" fill="#ec9430" text-anchor="end" font-weight="normal" textLength="19" lengthAdjust="spacingAndGlyphs" stroke="#ec9430" stroke-width="0.18">0 T</text>
<text x="1746" y="781.0" font-size="12.5" fill="#7e3a9c" text-anchor="end" font-weight="normal" textLength="75.5" lengthAdjust="spacingAndGlyphs" stroke="#7e3a9c" stroke-width="0.18">5.349208 kA</text>
<text x="1746" y="804.4" font-size="12.5" fill="#7e3a9c" text-anchor="end" font-weight="normal" textLength="75.5" lengthAdjust="spacingAndGlyphs" stroke="#7e3a9c" stroke-width="0.18">4.680557 kA</text>
<text x="1746" y="827.7" font-size="12.5" fill="#7e3a9c" text-anchor="end" font-weight="normal" textLength="75.5" lengthAdjust="spacingAndGlyphs" stroke="#7e3a9c" stroke-width="0.18">4.011906 kA</text>
<text x="1746" y="851.1" font-size="12.5" fill="#7e3a9c" text-anchor="end" font-weight="normal" textLength="75.5" lengthAdjust="spacingAndGlyphs" stroke="#7e3a9c" stroke-width="0.18">3.343255 kA</text>
<text x="1746" y="874.4" font-size="12.5" fill="#7e3a9c" text-anchor="end" font-weight="normal" textLength="75.5" lengthAdjust="spacingAndGlyphs" stroke="#7e3a9c" stroke-width="0.18">2.674604 kA</text>
<text x="1746" y="897.8" font-size="12.5" fill="#7e3a9c" text-anchor="end" font-weight="normal" textLength="75.5" lengthAdjust="spacingAndGlyphs" stroke="#7e3a9c" stroke-width="0.18">2.005953 kA</text>
<text x="1746" y="921.1" font-size="12.5" fill="#7e3a9c" text-anchor="end" font-weight="normal" textLength="75.5" lengthAdjust="spacingAndGlyphs" stroke="#7e3a9c" stroke-width="0.18">1.337302 kA</text>
<text x="1746" y="944.5" font-size="12.5" fill="#7e3a9c" text-anchor="end" font-weight="normal" textLength="61" lengthAdjust="spacingAndGlyphs" stroke="#7e3a9c" stroke-width="0.18">668.651 A</text>
<text x="1746" y="967.8" font-size="12.5" fill="#7e3a9c" text-anchor="end" font-weight="normal" textLength="19.5" lengthAdjust="spacingAndGlyphs" stroke="#7e3a9c" stroke-width="0.18">0 A</text>
<text x="47" y="987" font-size="12.5" fill="#b4b4b4" text-anchor="start" font-weight="normal" textLength="16.5" lengthAdjust="spacingAndGlyphs" stroke="#b4b4b4" stroke-width="0.18">0 s</text>
<text x="230.4" y="987" font-size="12.5" fill="#b4b4b4" text-anchor="middle" font-weight="normal" textLength="29.5" lengthAdjust="spacingAndGlyphs" stroke="#b4b4b4" stroke-width="0.18">4 ms</text>
<text x="405.3" y="987" font-size="12.5" fill="#b4b4b4" text-anchor="middle" font-weight="normal" textLength="29.5" lengthAdjust="spacingAndGlyphs" stroke="#b4b4b4" stroke-width="0.18">8 ms</text>
<text x="580.2" y="987" font-size="12.5" fill="#b4b4b4" text-anchor="middle" font-weight="normal" textLength="35.5" lengthAdjust="spacingAndGlyphs" stroke="#b4b4b4" stroke-width="0.18">12 ms</text>
<text x="755.1" y="987" font-size="12.5" fill="#b4b4b4" text-anchor="middle" font-weight="normal" textLength="35.5" lengthAdjust="spacingAndGlyphs" stroke="#b4b4b4" stroke-width="0.18">16 ms</text>
<text x="930.0" y="987" font-size="12.5" fill="#b4b4b4" text-anchor="middle" font-weight="normal" textLength="35.5" lengthAdjust="spacingAndGlyphs" stroke="#b4b4b4" stroke-width="0.18">20 ms</text>
<text x="1104.9" y="987" font-size="12.5" fill="#b4b4b4" text-anchor="middle" font-weight="normal" textLength="35.5" lengthAdjust="spacingAndGlyphs" stroke="#b4b4b4" stroke-width="0.18">24 ms</text>
<text x="1279.8" y="987" font-size="12.5" fill="#b4b4b4" text-anchor="middle" font-weight="normal" textLength="35.5" lengthAdjust="spacingAndGlyphs" stroke="#b4b4b4" stroke-width="0.18">28 ms</text>
<text x="1454.7" y="987" font-size="12.5" fill="#b4b4b4" text-anchor="middle" font-weight="normal" textLength="35.5" lengthAdjust="spacingAndGlyphs" stroke="#b4b4b4" stroke-width="0.18">32 ms</text>
<text x="1629.6" y="987" font-size="12.5" fill="#b4b4b4" text-anchor="middle" font-weight="normal" textLength="35.5" lengthAdjust="spacingAndGlyphs" stroke="#b4b4b4" stroke-width="0.18">36 ms</text>
<path d="M45 58 H65.5 L55.25 67.5 Z" fill="#f7921e"/>
<path d="M46 69 H64.5 V88 H59 L55.25 94.5 L51.5 88 H46 Z" fill="#000" stroke="#f7921e" stroke-width="2"/>
<text x="55.25" y="84" font-size="14" fill="#f7921e" text-anchor="middle" font-weight="normal" textLength="9.5" lengthAdjust="spacingAndGlyphs" stroke="#f7921e" stroke-width="0.7">T</text>
<path d="M1710 65 H1741 Q1744.5 65 1744.5 68.5 V98.5 Z" fill="#505050"/>
<circle cx="1737" cy="71.5" r="4.3" fill="none" stroke="#a8a8a8" stroke-width="1.6"/>
<line x1="1733.8" y1="74.8" x2="1728.5" y2="80" stroke="#a8a8a8" stroke-width="2.4" stroke-linecap="round"/>
<path d="M9 162 H77.5 L83.5 174.5 L77.5 187 H9 Q7 187 7 185 V164 Q7 162 9 162 Z" fill="#1e1c08" stroke="#f2e41e" stroke-width="2"/>
<rect x="32" y="162" width="2" height="25" fill="#f2e41e"/>
<text x="11" y="178.8" font-size="12.5" fill="#f2e41e" text-anchor="start" font-weight="normal" textLength="16" lengthAdjust="spacingAndGlyphs" stroke="#f2e41e" stroke-width="0.18">C 1</text>
<text x="43.75" y="178.8" font-size="12.5" fill="#f2e41e" text-anchor="start" font-weight="normal" textLength="25" lengthAdjust="spacingAndGlyphs" stroke="#f2e41e" stroke-width="0.18">20 V</text>
<text x="102" y="179.3" font-size="19" fill="#f2e41e" text-anchor="start" font-weight="normal" textLength="96.5" lengthAdjust="spacingAndGlyphs" stroke="#f2e41e" stroke-width="0.18">U_loop,coil</text>
<path d="M9 396 H77.5 L83.5 408.5 L77.5 421 H9 Q7 421 7 419 V398 Q7 396 9 396 Z" fill="#121a08" stroke="#7cc234" stroke-width="2"/>
<rect x="32" y="396" width="2" height="25" fill="#7cc234"/>
<text x="11" y="412.8" font-size="12.5" fill="#7cc234" text-anchor="start" font-weight="normal" textLength="16" lengthAdjust="spacingAndGlyphs" stroke="#7cc234" stroke-width="0.18">C 4</text>
<text x="36.5" y="412.8" font-size="12.5" fill="#7cc234" text-anchor="start" font-weight="normal" textLength="39.5" lengthAdjust="spacingAndGlyphs" stroke="#7cc234" stroke-width="0.18">200 mV</text>
<text x="102" y="413" font-size="19" fill="#7cc234" text-anchor="start" font-weight="normal" textLength="85.5" lengthAdjust="spacingAndGlyphs" stroke="#7cc234" stroke-width="0.18">U_Photod</text>
<path d="M9 723 H30 L41.5 735 L30 747 H9 Q7 747 7 745 V725 Q7 723 9 723 Z" fill="#1a1008" stroke="#ec9430" stroke-width="1.4"/>
<text x="13" y="738.2" font-size="12" fill="#ec9430" text-anchor="start" font-weight="normal" textLength="20" lengthAdjust="spacingAndGlyphs" stroke="#ec9430" stroke-width="0.18">M 1</text>
<line x1="42" y1="734.5" x2="55" y2="734.5" stroke="#ec9430" stroke-width="1.4"/>
<line x1="3" y1="734.5" x2="7" y2="734.5" stroke="#ec9430" stroke-width="1.4"/>
<text x="54.5" y="741.7" font-size="25.5" fill="#ec9430" text-anchor="start" font-weight="normal" textLength="13.5" lengthAdjust="spacingAndGlyphs" stroke="#ec9430" stroke-width="0.18">B</text>
<text x="68.5" y="741.7" font-size="25.5" fill="#ec9430" text-anchor="start" font-weight="normal" textLength="14.5" lengthAdjust="spacingAndGlyphs" stroke="#ec9430" stroke-width="0.18">_</text>
<text x="84" y="741.7" font-size="25.5" fill="#ec9430" text-anchor="start" font-weight="normal" textLength="9.5" lengthAdjust="spacingAndGlyphs" stroke="#ec9430" stroke-width="0.18">t</text>
<path d="M9 950 H30 L42 963 L30 976 H9 Q6 976 6 973 V953 Q6 950 9 950 Z" fill="#772d90"/>
<text x="13" y="967.5" font-size="12.5" fill="#ffffff" text-anchor="start" font-weight="normal" textLength="21" lengthAdjust="spacingAndGlyphs" stroke="#ffffff" stroke-width="0.18">M 2</text>
<text x="53.8" y="966.6" font-size="19" fill="#772d90" text-anchor="start" font-weight="normal" textLength="24.5" lengthAdjust="spacingAndGlyphs" stroke="#772d90" stroke-width="0.18">I_p</text>
<circle cx="1762" cy="503.75" r="2" fill="#c8c8c8"/>
<circle cx="1762" cy="512" r="2" fill="#c8c8c8"/>
<circle cx="1762" cy="520.75" r="2" fill="#c8c8c8"/>
<path d="M1769.5 996 V29.5" fill="none" stroke="#5a5a5c" stroke-width="1"/>
<path d="M1769 29.5 H1920" fill="none" stroke="#6a625a" stroke-width="1"/>
<rect x="1769" y="995" width="151" height="1" fill="#6a625a"/>
<text x="1785.5" y="26" font-size="30.7" fill="#ffffff" text-anchor="start" font-weight="bold" textLength="18.2" lengthAdjust="spacingAndGlyphs">T</text>
<text x="1797.8" y="26" font-size="27.4" fill="#ffffff" text-anchor="start" font-weight="bold" textLength="16.2" lengthAdjust="spacingAndGlyphs">e</text>
<path d="M1815.2 4 H1820.6 V15.5 L1815.2 26 Z" fill="#ffffff"/>
<path d="M1822.3 18.5 H1826.8 L1830.8 26 H1825.2 Z" fill="#ffffff"/>
<path d="M1815.2 26 H1822 L1830.6 9.6 H1823.8 Z" fill="#1cb8dc"/>
<path d="M1830.6 9.6 L1835.6 4.4 V11.8 H1839.4 V16 H1835.6 V20.5 Q1835.6 22 1837.2 22 H1839.4 V26 H1835.2 Q1830.6 26 1830.6 21.5 V16 H1829.2 V11.8 H1830.6 Z" fill="#ffffff"/>
<text x="1839.6" y="26" font-size="27.4" fill="#ffffff" text-anchor="start" font-weight="bold" textLength="64" lengthAdjust="spacingAndGlyphs">ronix</text>
<text x="1803" y="43.5" font-size="15" fill="#e8e8e8" text-anchor="start" font-weight="bold" textLength="83" lengthAdjust="spacingAndGlyphs">Add New...</text>
<rect x="1778.5" y="54.5" width="62" height="36" rx="6" ry="6" fill="url(#btn)" stroke="#74695f" stroke-width="1"/>
<text x="1809.5" y="77" font-size="15" fill="#f0f0f0" text-anchor="middle" font-weight="normal" textLength="50" lengthAdjust="spacingAndGlyphs" stroke="#f0f0f0" stroke-width="0.18">Cursors</text>
<rect x="1850.5" y="54.5" width="62" height="36" rx="6" ry="6" fill="url(#btn)" stroke="#74695f" stroke-width="1"/>
<text x="1881.5" y="77" font-size="15" fill="#f0f0f0" text-anchor="middle" font-weight="normal" textLength="49" lengthAdjust="spacingAndGlyphs" stroke="#f0f0f0" stroke-width="0.18">Callout</text>
<rect x="1778.5" y="100.5" width="62" height="36" rx="6" ry="6" fill="url(#btn)" stroke="#74695f" stroke-width="1"/>
<text x="1809.5" y="123" font-size="15" fill="#f0f0f0" text-anchor="middle" font-weight="normal" textLength="58" lengthAdjust="spacingAndGlyphs" stroke="#f0f0f0" stroke-width="0.18">Measure</text>
<rect x="1850.5" y="100.5" width="62" height="36" rx="6" ry="6" fill="url(#btn)" stroke="#74695f" stroke-width="1"/>
<text x="1881.5" y="123" font-size="15" fill="#f0f0f0" text-anchor="middle" font-weight="normal" textLength="46" lengthAdjust="spacingAndGlyphs" stroke="#f0f0f0" stroke-width="0.18">Search</text>
<rect x="1778.5" y="146.5" width="62" height="36" rx="6" ry="6" fill="url(#btn)" stroke="#74695f" stroke-width="1"/>
<text x="1809.5" y="160.5" font-size="15" fill="#f0f0f0" text-anchor="middle" font-weight="normal" textLength="48" lengthAdjust="spacingAndGlyphs" stroke="#f0f0f0" stroke-width="0.18">Results</text>
<text x="1809.5" y="176" font-size="15" fill="#f0f0f0" text-anchor="middle" font-weight="normal" textLength="35" lengthAdjust="spacingAndGlyphs" stroke="#f0f0f0" stroke-width="0.18">Table</text>
<rect x="1850.5" y="146.5" width="62" height="36" rx="6" ry="6" fill="url(#btn)" stroke="#74695f" stroke-width="1"/>
<text x="1881.5" y="169" font-size="15" fill="#f0f0f0" text-anchor="middle" font-weight="normal" textLength="28" lengthAdjust="spacingAndGlyphs" stroke="#f0f0f0" stroke-width="0.18">Plot</text>
<rect x="1773" y="189" width="144" height="1.2" fill="#6a625a"/>
<rect x="1778.5" y="196.5" width="62" height="36" rx="6" ry="6" fill="url(#btn)" stroke="#74695f" stroke-width="1"/>
<text x="1881.5" y="219" font-size="15" fill="#f0f0f0" text-anchor="middle" font-weight="normal" textLength="50" lengthAdjust="spacingAndGlyphs" stroke="#f0f0f0" stroke-width="0.18">More...</text>
<rect x="1850.5" y="196.5" width="62" height="36" rx="6" ry="6" fill="url(#btn)" stroke="#74695f" stroke-width="1"/>
<text x="1881.5" y="219" font-size="15" fill="#f0f0f0" text-anchor="middle" font-weight="normal" textLength="50" lengthAdjust="spacingAndGlyphs" stroke="#f0f0f0" stroke-width="0.18">More...</text>
<rect x="1797.5" y="202.5" width="22" height="20" fill="none" stroke="#b0b0b0" stroke-width="1.8" stroke-dasharray="3 2.5"/>
<circle cx="1810.5" cy="211" r="4.6" fill="none" stroke="#b0b0b0" stroke-width="1.8"/>
<line x1="1806.8" y1="214.8" x2="1802.5" y2="218.8" stroke="#b0b0b0" stroke-width="2.4" stroke-linecap="round"/>
<path d="M1815 217 L1823 222 L1819.5 223 L1822 226.5 L1820.5 227.5 L1818 224 L1815.5 226.5 Z" fill="#b0b0b0"/>
<rect x="1773" y="241" width="144" height="1.2" fill="#6a625a"/>
<path d="M7 1003 H89 Q93 1003 93 1007 V1075 Q93 1079 89 1079 H7 Q3 1079 3 1075 V1007 Q3 1003 7 1003 Z" fill="#c8c8c8"/>
<path d="M7 1003 H89 Q93 1003 93 1007 V1022 H3 V1007 Q3 1003 7 1003 Z" fill="#4a4322"/>
<rect x="3" y="1022" width="90" height="1.8" fill="#a6a6a6"/>
<text x="8.5" y="1016.8" font-size="15" fill="#f4e820" text-anchor="start" font-weight="normal" textLength="32.5" lengthAdjust="spacingAndGlyphs" stroke="#f4e820" stroke-width="0.45">Ch 1</text>
<text x="8" y="1036.8" font-size="15" fill="#1a1a1a" text-anchor="start" font-weight="normal" textLength="43" lengthAdjust="spacingAndGlyphs" stroke="#1a1a1a" stroke-width="0.18">5 V/div</text>
<text x="8" y="1055.7" font-size="15" fill="#1a1a1a" text-anchor="start" font-weight="normal" textLength="35.5" lengthAdjust="spacingAndGlyphs" stroke="#1a1a1a" stroke-width="0.18">1 MΩ</text>
<text x="8" y="1074.6" font-size="15" fill="#1a1a1a" text-anchor="start" font-weight="normal" textLength="52.5" lengthAdjust="spacingAndGlyphs" stroke="#1a1a1a" stroke-width="0.18">200 kHz</text>
<text x="74.5" y="1070" font-size="10" fill="#1a1a1a" text-anchor="start" font-weight="normal" textLength="6.5" lengthAdjust="spacingAndGlyphs" stroke="#1a1a1a" stroke-width="0.18">B</text>
<text x="80.5" y="1072.5" font-size="9" fill="#1a1a1a" text-anchor="start" font-weight="normal" textLength="6" lengthAdjust="spacingAndGlyphs" stroke="#1a1a1a" stroke-width="0.18">w</text>
<defs><linearGradient id="dimb" x1="0" y1="0" x2="0" y2="1"><stop offset="0" stop-color="#8a8a8a"/><stop offset="1" stop-color="#7e7e7e"/></linearGradient></defs>
<path d="M102 1003 H184 Q188 1003 188 1007 V1075 Q188 1079 184 1079 H102 Q98 1079 98 1075 V1007 Q98 1003 102 1003 Z" fill="#8a8a8a"/>
<path d="M102 1003 H184 Q188 1003 188 1007 V1022 H98 V1007 Q98 1003 102 1003 Z" fill="#227f84"/>
<rect x="98" y="1022" width="90" height="1.8" fill="#7a7a7a"/>
<text x="103.5" y="1016.8" font-size="15" fill="#1e1e1e" text-anchor="start" font-weight="normal" textLength="32.5" lengthAdjust="spacingAndGlyphs" stroke="#1e1e1e" stroke-width="0.45">Ch 2</text>
<text x="103" y="1036.8" font-size="15" fill="#2e2e2e" text-anchor="start" font-weight="normal" textLength="73.5" lengthAdjust="spacingAndGlyphs" stroke="#2e2e2e" stroke-width="0.18">250 mV/div</text>
<text x="103" y="1055.7" font-size="15" fill="#2e2e2e" text-anchor="start" font-weight="normal" textLength="35.5" lengthAdjust="spacingAndGlyphs" stroke="#2e2e2e" stroke-width="0.18">1 MΩ</text>
<text x="103" y="1074.6" font-size="15" fill="#2e2e2e" text-anchor="start" font-weight="normal" textLength="52.5" lengthAdjust="spacingAndGlyphs" stroke="#2e2e2e" stroke-width="0.18">200 kHz</text>
<text x="169.5" y="1070" font-size="10" fill="#2e2e2e" text-anchor="start" font-weight="normal" textLength="6.5" lengthAdjust="spacingAndGlyphs" stroke="#2e2e2e" stroke-width="0.18">B</text>
<text x="175.5" y="1072.5" font-size="9" fill="#2e2e2e" text-anchor="start" font-weight="normal" textLength="6" lengthAdjust="spacingAndGlyphs" stroke="#2e2e2e" stroke-width="0.18">w</text>
<path d="M197 1003 H279 Q283 1003 283 1007 V1075 Q283 1079 279 1079 H197 Q193 1079 193 1075 V1007 Q193 1003 197 1003 Z" fill="#8a8a8a"/>
<path d="M197 1003 H279 Q283 1003 283 1007 V1022 H193 V1007 Q193 1003 197 1003 Z" fill="#8f3a4a"/>
<rect x="193" y="1022" width="90" height="1.8" fill="#7a7a7a"/>
<text x="198.5" y="1016.8" font-size="15" fill="#c8b4b8" text-anchor="start" font-weight="normal" textLength="32.5" lengthAdjust="spacingAndGlyphs" stroke="#c8b4b8" stroke-width="0.45">Ch 3</text>
<text x="198" y="1036.8" font-size="15" fill="#2e2e2e" text-anchor="start" font-weight="normal" textLength="73.5" lengthAdjust="spacingAndGlyphs" stroke="#2e2e2e" stroke-width="0.18">450 mV/div</text>
<text x="198" y="1055.7" font-size="15" fill="#2e2e2e" text-anchor="start" font-weight="normal" textLength="35.5" lengthAdjust="spacingAndGlyphs" stroke="#2e2e2e" stroke-width="0.18">1 MΩ</text>
<text x="198" y="1074.6" font-size="15" fill="#2e2e2e" text-anchor="start" font-weight="normal" textLength="52.5" lengthAdjust="spacingAndGlyphs" stroke="#2e2e2e" stroke-width="0.18">200 kHz</text>
<text x="264.5" y="1070" font-size="10" fill="#2e2e2e" text-anchor="start" font-weight="normal" textLength="6.5" lengthAdjust="spacingAndGlyphs" stroke="#2e2e2e" stroke-width="0.18">B</text>
<text x="270.5" y="1072.5" font-size="9" fill="#2e2e2e" text-anchor="start" font-weight="normal" textLength="6" lengthAdjust="spacingAndGlyphs" stroke="#2e2e2e" stroke-width="0.18">w</text>
<path d="M292 1003 H374 Q378 1003 378 1007 V1075 Q378 1079 374 1079 H292 Q288 1079 288 1075 V1007 Q288 1003 292 1003 Z" fill="#c8c8c8"/>
<path d="M292 1003 H374 Q378 1003 378 1007 V1022 H288 V1007 Q288 1003 292 1003 Z" fill="#384422"/>
<rect x="288" y="1022" width="90" height="1.8" fill="#a6a6a6"/>
<text x="293.5" y="1016.8" font-size="15" fill="#8de03a" text-anchor="start" font-weight="normal" textLength="32.5" lengthAdjust="spacingAndGlyphs" stroke="#8de03a" stroke-width="0.45">Ch 4</text>
<text x="293" y="1036.8" font-size="15" fill="#1a1a1a" text-anchor="start" font-weight="normal" textLength="73.5" lengthAdjust="spacingAndGlyphs" stroke="#1a1a1a" stroke-width="0.18">200 mV/div</text>
<text x="293" y="1055.7" font-size="15" fill="#1a1a1a" text-anchor="start" font-weight="normal" textLength="35.5" lengthAdjust="spacingAndGlyphs" stroke="#1a1a1a" stroke-width="0.18">1 MΩ</text>
<text x="293" y="1074.6" font-size="15" fill="#1a1a1a" text-anchor="start" font-weight="normal" textLength="52.5" lengthAdjust="spacingAndGlyphs" stroke="#1a1a1a" stroke-width="0.18">200 kHz</text>
<text x="359.5" y="1070" font-size="10" fill="#1a1a1a" text-anchor="start" font-weight="normal" textLength="6.5" lengthAdjust="spacingAndGlyphs" stroke="#1a1a1a" stroke-width="0.18">B</text>
<text x="365.5" y="1072.5" font-size="9" fill="#1a1a1a" text-anchor="start" font-weight="normal" textLength="6" lengthAdjust="spacingAndGlyphs" stroke="#1a1a1a" stroke-width="0.18">w</text>
<path d="M387 1003 H469 Q473 1003 473 1007 V1075 Q473 1079 469 1079 H387 Q383 1079 383 1075 V1007 Q383 1003 387 1003 Z" fill="#c8c8c8"/>
<path d="M387 1003 H469 Q473 1003 473 1007 V1022 H383 V1007 Q383 1003 387 1003 Z" fill="#47311c"/>
<rect x="383" y="1022" width="90" height="1.8" fill="#a6a6a6"/>
<text x="388.5" y="1016.8" font-size="15" fill="#f59a28" text-anchor="start" font-weight="normal" textLength="47.5" lengthAdjust="spacingAndGlyphs" stroke="#f59a28" stroke-width="0.45">Math 1</text>
<text x="388" y="1036.8" font-size="15" fill="#1a1a1a" text-anchor="start" font-weight="normal" textLength="75.5" lengthAdjust="spacingAndGlyphs" stroke="#1a1a1a" stroke-width="0.18">74.1 mT/div</text>
<text x="388" y="1055.7" font-size="15" fill="#1a1a1a" text-anchor="start" font-weight="normal" textLength="73" lengthAdjust="spacingAndGlyphs" stroke="#1a1a1a" stroke-width="0.18">Intg(Ch2)...</text>
<path d="M482 1003 H564 Q568 1003 568 1007 V1075 Q568 1079 564 1079 H482 Q478 1079 478 1075 V1007 Q478 1003 482 1003 Z" fill="#c8c8c8"/>
<path d="M482 1003 H564 Q568 1003 568 1007 V1022 H478 V1007 Q478 1003 482 1003 Z" fill="#6e2a8a"/>
<rect x="478" y="1022" width="90" height="1.8" fill="#a6a6a6"/>
<text x="483.5" y="1016.8" font-size="15" fill="#ffffff" text-anchor="start" font-weight="normal" textLength="47.5" lengthAdjust="spacingAndGlyphs" stroke="#ffffff" stroke-width="0.45">Math 2</text>
<text x="483" y="1036.8" font-size="15" fill="#1a1a1a" text-anchor="start" font-weight="normal" textLength="82.5" lengthAdjust="spacingAndGlyphs" stroke="#1a1a1a" stroke-width="0.18">668.65 A/div</text>
<text x="483" y="1055.7" font-size="15" fill="#1a1a1a" text-anchor="start" font-weight="normal" textLength="74.5" lengthAdjust="spacingAndGlyphs" stroke="#1a1a1a" stroke-width="0.18">-Intg(Ch3...</text>
<rect x="1023.5" y="999.5" width="39" height="79" rx="7" ry="7" fill="url(#tbtn)" stroke="#77695f" stroke-width="1"/>
<rect x="1027" y="1007" width="32" height="2.2" fill="#f7941d"/>
<text x="1042.75" y="1050" font-size="20" fill="#ececec" text-anchor="middle" font-weight="normal" textLength="10.5" lengthAdjust="spacingAndGlyphs" stroke="#ececec" stroke-width="0.18">5</text>
<rect x="1068.5" y="999.5" width="39" height="79" rx="7" ry="7" fill="url(#tbtn)" stroke="#77695f" stroke-width="1"/>
<rect x="1072" y="1007" width="32" height="2.2" fill="#2424d0"/>
<text x="1087.75" y="1050" font-size="20" fill="#ececec" text-anchor="middle" font-weight="normal" textLength="10.5" lengthAdjust="spacingAndGlyphs" stroke="#ececec" stroke-width="0.18">6</text>
<rect x="1118" y="1000" width="1.2" height="78" fill="#5e564e"/>
<rect x="1129.5" y="999.5" width="39" height="79" rx="7" ry="7" fill="url(#tbtn)" stroke="#77695f" stroke-width="1"/>
<rect x="1133" y="1007" width="32" height="2.2" fill="#c0222c"/>
<text x="1149" y="1033.0" font-size="15.5" fill="#ececec" text-anchor="middle" font-weight="normal" textLength="27" lengthAdjust="spacingAndGlyphs" stroke="#ececec" stroke-width="0.18">Add</text>
<text x="1149" y="1048.9" font-size="15.5" fill="#ececec" text-anchor="middle" font-weight="normal" textLength="29.5" lengthAdjust="spacingAndGlyphs" stroke="#ececec" stroke-width="0.18">New</text>
<text x="1149" y="1064.8" font-size="15.5" fill="#ececec" text-anchor="middle" font-weight="normal" textLength="33.5" lengthAdjust="spacingAndGlyphs" stroke="#ececec" stroke-width="0.18">Math</text>
<rect x="1174.5" y="999.5" width="39" height="79" rx="7" ry="7" fill="url(#tbtn)" stroke="#77695f" stroke-width="1"/>
<rect x="1178" y="1007" width="32" height="2.2" fill="#c8c8d0"/>
<text x="1194" y="1033.0" font-size="15.5" fill="#ececec" text-anchor="middle" font-weight="normal" textLength="27" lengthAdjust="spacingAndGlyphs" stroke="#ececec" stroke-width="0.18">Add</text>
<text x="1194" y="1048.9" font-size="15.5" fill="#ececec" text-anchor="middle" font-weight="normal" textLength="29.5" lengthAdjust="spacingAndGlyphs" stroke="#ececec" stroke-width="0.18">New</text>
<text x="1194" y="1064.8" font-size="15.5" fill="#ececec" text-anchor="middle" font-weight="normal" textLength="22.5" lengthAdjust="spacingAndGlyphs" stroke="#ececec" stroke-width="0.18">Ref</text>
<rect x="1219.5" y="999.5" width="39" height="79" rx="7" ry="7" fill="url(#tbtn)" stroke="#77695f" stroke-width="1"/>
<rect x="1223" y="1007" width="32" height="2.2" fill="#b85ae8"/>
<text x="1239" y="1033.0" font-size="15.5" fill="#ececec" text-anchor="middle" font-weight="normal" textLength="27" lengthAdjust="spacingAndGlyphs" stroke="#ececec" stroke-width="0.18">Add</text>
<text x="1239" y="1048.9" font-size="15.5" fill="#ececec" text-anchor="middle" font-weight="normal" textLength="29.5" lengthAdjust="spacingAndGlyphs" stroke="#ececec" stroke-width="0.18">New</text>
<text x="1239" y="1064.8" font-size="15.5" fill="#ececec" text-anchor="middle" font-weight="normal" textLength="25" lengthAdjust="spacingAndGlyphs" stroke="#ececec" stroke-width="0.18">Bus</text>
<rect x="1270" y="1000" width="1.2" height="78" fill="#5e564e"/>
<rect x="1281.5" y="1003.5" width="197" height="74.5" rx="5" ry="5" fill="#c8c8c8" stroke="#161616" stroke-width="1"/>
<path d="M1282 1022.5 V1008.5 Q1282 1004 1286.5 1004 H1473.5 Q1478 1004 1478 1008.5 V1022.5 Z" fill="url(#hdr)"/>
<rect x="1282" y="1022.5" width="196" height="2" fill="#a8a8a8"/>
<text x="1286.5" y="1017.8" font-size="15.5" fill="#f0f0f0" text-anchor="start" font-weight="normal" textLength="74" lengthAdjust="spacingAndGlyphs" stroke="#f0f0f0" stroke-width="0.18">Horizontal</text>
<text x="1286" y="1036.7" font-size="15" fill="#141414" text-anchor="start" font-weight="normal" textLength="52.5" lengthAdjust="spacingAndGlyphs" stroke="#141414" stroke-width="0.18">4 ms/div</text>
<text x="1391" y="1036.7" font-size="15" fill="#141414" text-anchor="start" font-weight="normal" textLength="39" lengthAdjust="spacingAndGlyphs" stroke="#141414" stroke-width="0.18">40 ms</text>
<text x="1286" y="1055.5" font-size="15" fill="#141414" text-anchor="start" font-weight="normal" textLength="67" lengthAdjust="spacingAndGlyphs" stroke="#141414" stroke-width="0.18">SR: 1 MS/s</text>
<text x="1391.5" y="1055.5" font-size="15" fill="#141414" text-anchor="start" font-weight="normal" textLength="43" lengthAdjust="spacingAndGlyphs" stroke="#141414" stroke-width="0.18">1 µs/pt</text>
<text x="1286" y="1074" font-size="15" fill="#141414" text-anchor="start" font-weight="normal" textLength="70" lengthAdjust="spacingAndGlyphs" stroke="#141414" stroke-width="0.18">RL: 40 kpts</text>
<text x="1405" y="1074" font-size="15" fill="#141414" text-anchor="start" font-weight="normal" textLength="22" lengthAdjust="spacingAndGlyphs" stroke="#141414" stroke-width="0.18">3%</text>
<path d="M1391.5 1063.5 H1399.5 V1072 H1397 L1395.5 1074.5 L1394 1072 H1391.5 Z" fill="#000" stroke="#f7921e" stroke-width="1.3"/>
<text x="1395.5" y="1070.3" font-size="7" fill="#ffffff" text-anchor="middle" font-weight="bold">T</text>
<rect x="1486.0" y="1003.5" width="158" height="74.5" rx="5" ry="5" fill="#c8c8c8" stroke="#161616" stroke-width="1"/>
<path d="M1486.5 1022.5 V1008.5 Q1486.5 1004 1491.0 1004 H1639.0 Q1643.5 1004 1643.5 1008.5 V1022.5 Z" fill="url(#hdr)"/>
<rect x="1486.5" y="1022.5" width="157" height="2" fill="#a8a8a8"/>
<text x="1491.0" y="1017.8" font-size="15.5" fill="#f0f0f0" text-anchor="start" font-weight="normal" textLength="49.5" lengthAdjust="spacingAndGlyphs" stroke="#f0f0f0" stroke-width="0.18">Trigger</text>
<rect x="1490.5" y="1025.5" width="29" height="15" rx="5" fill="#2a24c8" stroke="#111" stroke-width="1"/>
<text x="1505" y="1036.5" font-size="14" fill="#ffffff" text-anchor="middle" font-weight="normal" textLength="7.5" lengthAdjust="spacingAndGlyphs" stroke="#ffffff" stroke-width="0.18">6</text>
<path d="M1530 1037 H1534.5 L1542.4 1027.2 H1546" fill="none" stroke="#2a2a70" stroke-width="1.2"/>
<text x="1556.5" y="1036.5" font-size="15" fill="#141414" text-anchor="start" font-weight="normal" textLength="21.5" lengthAdjust="spacingAndGlyphs" stroke="#141414" stroke-width="0.18">3 V</text>
<rect x="1651.5" y="1003.5" width="147.5" height="74.5" rx="5" ry="5" fill="#c8c8c8" stroke="#161616" stroke-width="1"/>
<path d="M1652 1022.5 V1008.5 Q1652 1004 1656.5 1004 H1794.0 Q1798.5 1004 1798.5 1008.5 V1022.5 Z" fill="url(#hdr)"/>
<rect x="1652" y="1022.5" width="146.5" height="2" fill="#a8a8a8"/>
<text x="1656.5" y="1017.8" font-size="15.5" fill="#f0f0f0" text-anchor="start" font-weight="normal" textLength="77.5" lengthAdjust="spacingAndGlyphs" stroke="#f0f0f0" stroke-width="0.18">Acquisition</text>
<text x="1656" y="1036.6" font-size="15" fill="#141414" text-anchor="start" font-weight="normal" textLength="50.5" lengthAdjust="spacingAndGlyphs" stroke="#141414" stroke-width="0.18">Manual,</text>
<text x="1736.3" y="1036.6" font-size="15" fill="#141414" text-anchor="start" font-weight="normal" textLength="49" lengthAdjust="spacingAndGlyphs" stroke="#141414" stroke-width="0.18">Analyze</text>
<text x="1656" y="1055.1" font-size="15" fill="#141414" text-anchor="start" font-weight="normal" textLength="106" lengthAdjust="spacingAndGlyphs" stroke="#141414" stroke-width="0.18">High Res: 16 bits</text>
<text x="1656" y="1073.8" font-size="15" fill="#141414" text-anchor="start" font-weight="normal" textLength="68.5" lengthAdjust="spacingAndGlyphs" stroke="#141414" stroke-width="0.18">Single: 0 /1</text>
<rect x="1811" y="1000" width="1.2" height="77" fill="#5e564e"/>
<rect x="1822.5" y="999.5" width="89" height="35" rx="7" fill="#fe1e26" stroke="#4e4e4e" stroke-width="1"/>
<text x="1867" y="1019.8" font-size="13.5" fill="#ffffff" text-anchor="middle" font-weight="bold" textLength="53" lengthAdjust="spacingAndGlyphs">Preview</text>
<rect x="1822.5" y="1041" width="89.5" height="37.5" rx="6" fill="#c8c8c8"/>
<text x="1867" y="1054" font-size="15" fill="#141414" text-anchor="middle" font-weight="normal" textLength="84.5" lengthAdjust="spacingAndGlyphs" stroke="#141414" stroke-width="0.18">21 May 2025</text>
<text x="1867" y="1071.6" font-size="15" fill="#141414" text-anchor="middle" font-weight="normal" textLength="74.5" lengthAdjust="spacingAndGlyphs" stroke="#141414" stroke-width="0.18">6:06:11 PM</text></svg>
</body></html>
